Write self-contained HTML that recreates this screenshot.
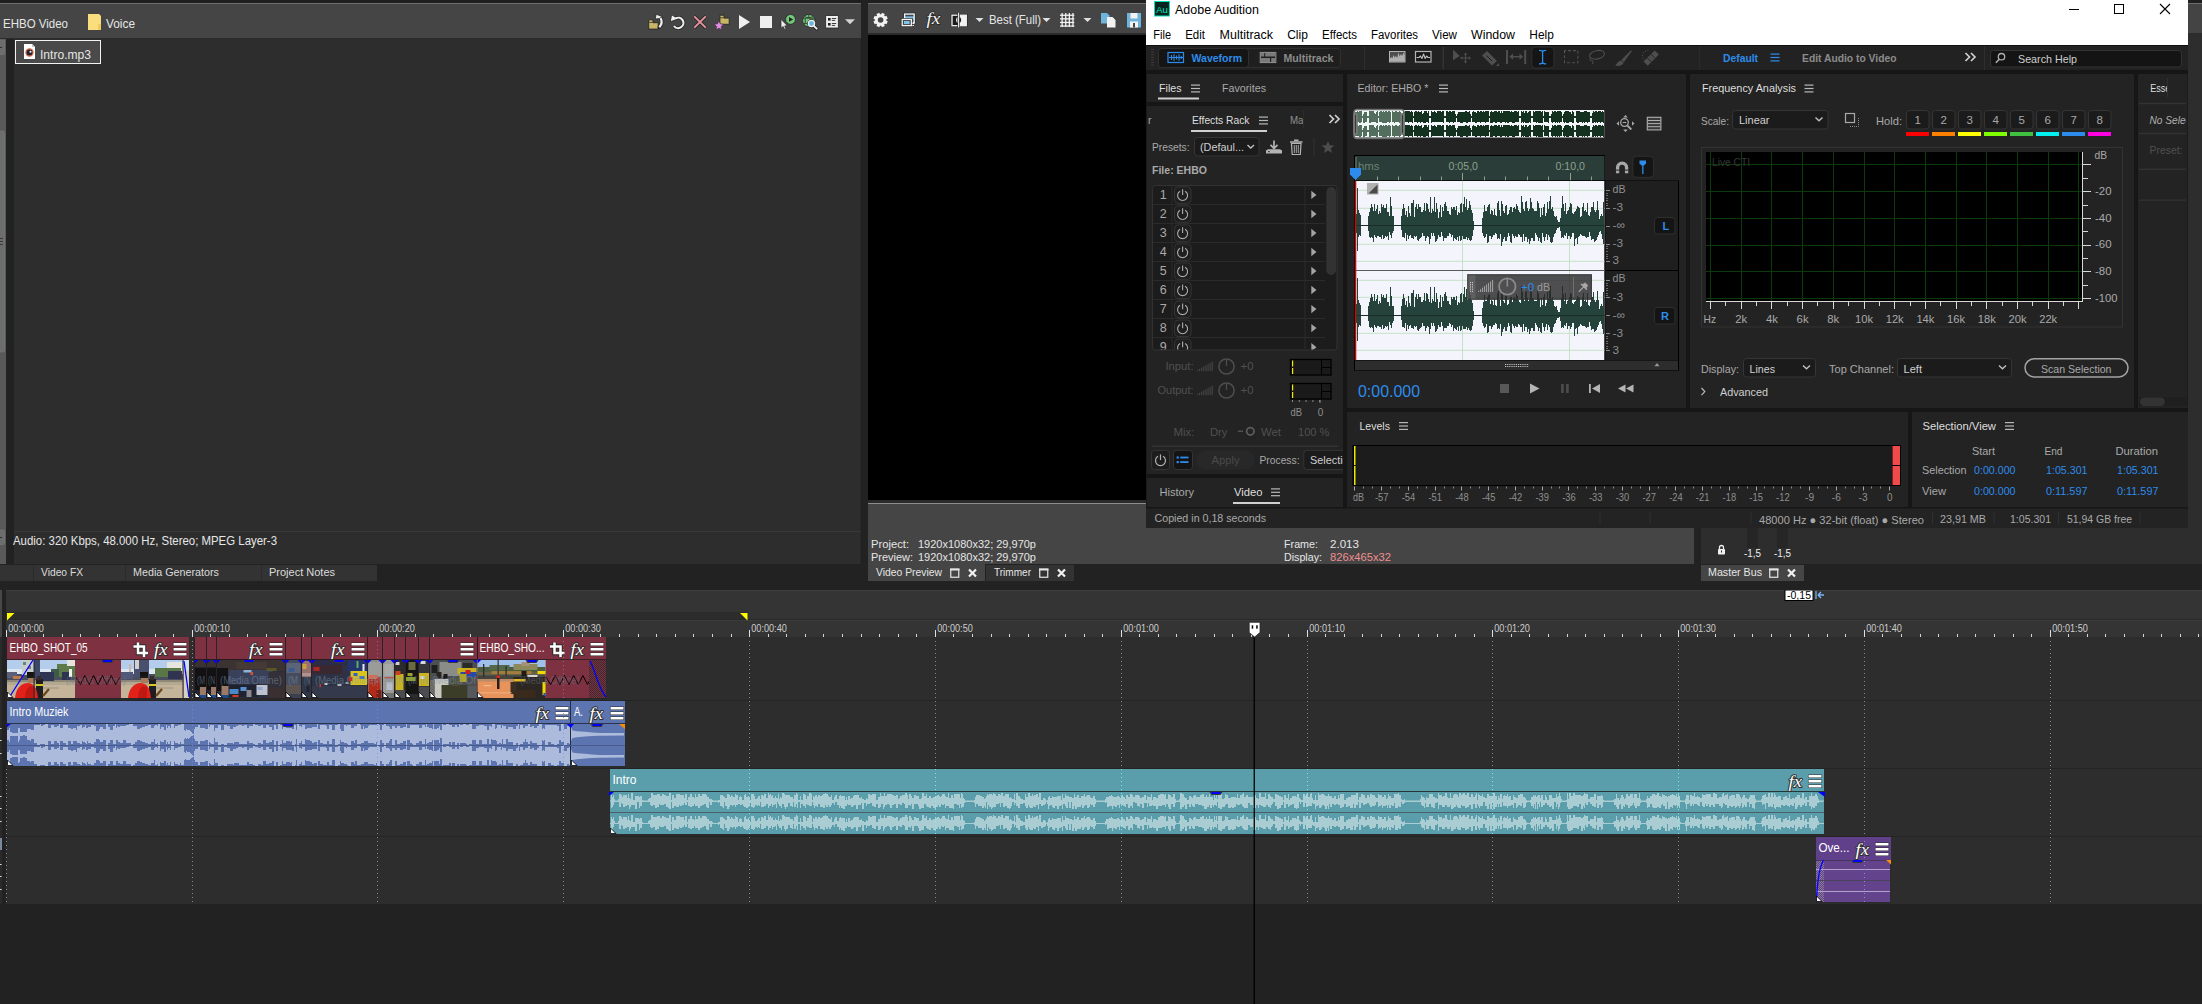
<!DOCTYPE html>
<html lang="en"><head><meta charset="utf-8">
<title>VEGAS Pro and Adobe Audition</title>
<style>html,body{margin:0;padding:0;background:#222;}body{width:2202px;height:1004px;position:relative;overflow:hidden;font-family:"Liberation Sans", sans-serif;}.panel{position:absolute;overflow:hidden;}.panel svg{display:block;position:absolute;left:0;top:0;}svg text{font-family:"Liberation Sans", sans-serif;white-space:pre;}</style></head><body>
<div class="panel" id="project-media" style="left:0px;top:0px;width:862px;height:564px;background:#222222;"><svg width="862" height="564" viewBox="0 0 862 564"><rect x="0" y="0" width="862" height="3" fill="#1f1f1f"/>
<rect x="0" y="3" width="861" height="1" fill="#6e6e6e"/>
<rect x="0" y="4" width="861" height="34" fill="#454545"/>
<rect x="0" y="38" width="861" height="1" fill="#2a2a2a"/>
<rect x="14" y="39" width="847" height="526" fill="#2d2d2d"/>
<rect x="860" y="39" width="1" height="526" fill="#272727"/>
<rect x="0" y="39" width="6" height="526" fill="#595959"/>
<rect x="-2" y="40" width="6.5" height="14.5" fill="#6c6e6e" stroke="#7a7a7a" stroke-width="0.6" rx="1.2"/>
<rect x="-2" y="131" width="6.5" height="221" fill="#6c6e6e" stroke="#7c7c7c" stroke-width="0.6" rx="1.5"/>
<rect x="-2" y="530" width="6.5" height="14.5" fill="#6c6e6e" stroke="#7a7a7a" stroke-width="0.6" rx="1.2"/>
<rect x="0" y="238" width="3" height="1" fill="#3a3a3a"/>
<rect x="0" y="241" width="3" height="1" fill="#3a3a3a"/>
<rect x="0" y="244" width="3" height="1" fill="#3a3a3a"/>
<rect x="0" y="47" width="2" height="1" fill="#2d2d2d"/>
<rect x="0" y="537" width="2" height="1" fill="#2d2d2d"/>
<rect x="6" y="39" width="8" height="526" fill="#222222"/>
<text x="3" y="28" font-size="13" fill="#e6e6e6" textLength="65" lengthAdjust="spacingAndGlyphs">EHBO Video</text>
<path d="M88 14h11l2 2v14h-13z" fill="#fadd7c"/>
<path d="M98 24h3v6h-3z" fill="#efcc5a"/>
<text x="106" y="28" font-size="13" fill="#e6e6e6" textLength="29" lengthAdjust="spacingAndGlyphs">Voice</text>
<rect x="15.5" y="40.5" width="85" height="23" fill="#4a4a4a" stroke="#f2f2f2" stroke-width="1"/>
<path d="M24 44h8l3 3v12h-11z" fill="#ffffff"/>
<path d="M32 44l3 3h-3z" fill="#c8c8c8"/>
<circle cx="29.5" cy="52.5" r="3.4" fill="#2a2030"/>
<circle cx="29.5" cy="52.5" r="3.6" fill="none" stroke="#d06a40" stroke-width="1.2"/>
<circle cx="30.5" cy="51.7" r="1" fill="#ffffff"/>
<text x="40" y="58.6" font-size="13" fill="#e6e6e6" textLength="51" lengthAdjust="spacingAndGlyphs">Intro.mp3</text>
<rect x="14" y="531" width="847" height="1" fill="#383838"/>
<text x="13" y="545" font-size="13" fill="#e6e6e6" textLength="264" lengthAdjust="spacingAndGlyphs">Audio: 320 Kbps, 48.000 Hz, Stereo; MPEG Layer-3</text>
<path d="M648.7 19.8h4.3v2.9h5.2v6.4h-9.5z" fill="#c9b566" stroke="#262626" stroke-width="0.9" stroke-linejoin="round"/>
<path d="M648.7 22.4h4.3" fill="none" stroke="#262626" stroke-width="0.7"/>
<path d="M659.3 27.2c2.8-3.2 3-6.2 1.2-9.2" fill="none" stroke="#262626" stroke-width="3.6" stroke-linecap="round"/>
<path d="M655.2 19l1-4.8 6.4 2.6-3.6 1.8z" fill="#f0f0f0" stroke="#262626" stroke-width="0.8" stroke-linejoin="round"/>
<path d="M659.3 27.2c2.8-3.2 3-6.2 1.2-9.2" fill="none" stroke="#f0f0f0" stroke-width="2.2"/>
<path d="M675.6 18.4a5.2 5.2 0 1 1 -1.6 7.6" fill="none" stroke="#262626" stroke-width="3.6"/>
<path d="M670.3 21.8l1.3-7 6.6 4z" fill="#f0f0f0" stroke="#262626" stroke-width="0.8" stroke-linejoin="round"/>
<path d="M675.6 18.4a5.2 5.2 0 1 1 -1.6 7.6" fill="none" stroke="#f0f0f0" stroke-width="2.1"/>
<path d="M694.3 16.3l11.4 11.4M705.7 16.3l-11.4 11.4" fill="none" stroke="#262626" stroke-width="3.4"/>
<path d="M694.3 16.3l11.4 11.4M705.7 16.3l-11.4 11.4" fill="none" stroke="#e8949f" stroke-width="1.9"/>
<path d="M719.9 15.2h4.2v2.9h5.1v6.2h-9.3z" fill="#c9b566" stroke="#262626" stroke-width="0.9" stroke-linejoin="round"/>
<path d="M719.9 17.8h4.2" fill="none" stroke="#262626" stroke-width="0.7"/>
<polygon points="718.9,20.9 720.31,23.86 723.56,24.29 721.18,26.54 721.78,29.76 718.9,28.2 716.02,29.76 716.62,26.54 714.24,24.29 717.49,23.86" fill="#df8ee2" stroke="#3a2a3a" stroke-width="0.6"/>
<polygon points="739,15 750,22 739,29" fill="#f0f0f0"/>
<rect x="760" y="16" width="12" height="12" fill="#f0f0f0"/>
<circle cx="790.5" cy="19.4" r="4.9" fill="#72c97a" stroke="#262626" stroke-width="0.8"/>
<polygon points="789,17.1 793.2,19.4 789,21.7" fill="#232323"/>
<polygon points="781,19.3 781,28.2 783.2,26.4 784.6,29.4 786,28.8 784.7,25.9 787.3,25.7" fill="#f0f0f0" stroke="#262626" stroke-width="0.7"/>
<circle cx="808.8" cy="20.6" r="6.2" fill="#72c97a" stroke="#262626" stroke-width="0.8"/>
<path d="M803 18.2h11.6M803.4 23.6h5M805.2 18.4v5M808.8 15v2.6M804.6 16.6c2.8 1.4 5.6 1.4 8.4 0" fill="none" stroke="#2f3a30" stroke-width="0.9"/>
<path d="M813.6 25.8l3.2 3" fill="none" stroke="#262626" stroke-width="3.2" stroke-linecap="round"/>
<circle cx="811.5" cy="23.5" r="3.1" fill="#6ab8e2" stroke="#262626" stroke-width="2.6"/>
<circle cx="811.5" cy="23.5" r="3.1" fill="#6ab8e2" stroke="#f0f0f0" stroke-width="1.3"/>
<path d="M813.8 25.9l2.9 2.8" fill="none" stroke="#f0f0f0" stroke-width="1.8" stroke-linecap="round"/>
<rect x="825.7" y="15.6" width="12.6" height="12.4" fill="#f0f0f0" stroke="#262626" stroke-width="0.8"/>
<rect x="828" y="18" width="2.6" height="2.6" fill="#1e1e1e"/>
<rect x="831.8" y="18.1" width="4.4" height="0.9" fill="#2a2a2a"/>
<rect x="831.8" y="19.9" width="3.4" height="0.9" fill="#2a2a2a"/>
<rect x="828" y="23" width="2.6" height="2.6" fill="#1e1e1e"/>
<rect x="831.8" y="23.1" width="4.4" height="0.9" fill="#2a2a2a"/>
<rect x="831.8" y="24.9" width="3.4" height="0.9" fill="#2a2a2a"/>
<polygon points="845,19.2 855,19.2 850,24.2" fill="#d4d4d4"/></svg></div>
<div class="panel" id="video-preview" style="left:868px;top:0px;width:826px;height:564px;background:#222222;"><svg width="826" height="564" viewBox="868 0 826 564"><rect x="868" y="0" width="826" height="3" fill="#1f1f1f"/>
<rect x="868" y="3" width="826" height="1" fill="#6e6e6e"/>
<rect x="868" y="4" width="826" height="29" fill="#454545"/>
<rect x="868" y="33" width="826" height="2" fill="#2a2a2a"/>
<rect x="868" y="35" width="826" height="465" fill="#000000"/>
<rect x="868" y="500" width="826" height="3" fill="#2a2a2a"/>
<rect x="868" y="503" width="826" height="1" fill="#8c8c8c"/>
<rect x="868" y="504" width="826" height="61" fill="#454545"/>
<line x1="884.85" y1="21.76" x2="887.16" y2="22.72" stroke="#f2f2f2" stroke-width="3.2"/>
<line x1="882.36" y1="24.25" x2="883.32" y2="26.56" stroke="#f2f2f2" stroke-width="3.2"/>
<line x1="878.84" y1="24.25" x2="877.88" y2="26.56" stroke="#f2f2f2" stroke-width="3.2"/>
<line x1="876.35" y1="21.76" x2="874.04" y2="22.72" stroke="#f2f2f2" stroke-width="3.2"/>
<line x1="876.35" y1="18.24" x2="874.04" y2="17.28" stroke="#f2f2f2" stroke-width="3.2"/>
<line x1="878.84" y1="15.75" x2="877.88" y2="13.44" stroke="#f2f2f2" stroke-width="3.2"/>
<line x1="882.36" y1="15.75" x2="883.32" y2="13.44" stroke="#f2f2f2" stroke-width="3.2"/>
<line x1="884.85" y1="18.24" x2="887.16" y2="17.28" stroke="#f2f2f2" stroke-width="3.2"/>
<circle cx="880.6" cy="20" r="4.3" fill="none" stroke="#f2f2f2" stroke-width="3"/>
<rect x="904.6" y="14" width="9.6" height="8.4" fill="#7cc4ea" stroke="#262626" stroke-width="2.6"/>
<rect x="904.6" y="14" width="9.6" height="8.4" fill="#7cc4ea" stroke="#f2f2f2" stroke-width="1.3"/>
<rect x="905.4" y="14.8" width="8" height="1.6" fill="#454545"/>
<rect x="905.4" y="19.6" width="8" height="2" fill="#454545"/>
<path d="M900.4 27.2l1.2-2h10.6l1.2 2z" fill="#f2f2f2" stroke="#262626" stroke-width="0.8" stroke-linejoin="round"/>
<rect x="902.2" y="19.4" width="9.2" height="6.2" fill="#454545" stroke="#262626" stroke-width="2.6"/>
<rect x="902.2" y="19.4" width="9.2" height="6.2" fill="#454545" stroke="#f2f2f2" stroke-width="1.3"/>
<rect x="904" y="21" width="5.6" height="3" fill="#7cc4ea"/>
<rect x="912.4" y="23" width="2.2" height="1" fill="#f2f2f2"/>
<rect x="912.4" y="25" width="1.6" height="1" fill="#f2f2f2"/>
<text x="926.4" y="24.3" font-size="16.5" font-style="italic" fill="#f4f4f4" textLength="14" lengthAdjust="spacingAndGlyphs" stroke="#2a2a2a" stroke-width="1.6" stroke-linejoin="round" paint-order="stroke" style='font-family:"Liberation Serif", serif'>fx</text>
<rect x="952" y="15.2" width="14.3" height="10.5" fill="#1c1c1c" stroke="#262626" stroke-width="2.6"/>
<rect x="952" y="15.2" width="14.3" height="10.5" fill="#1c1c1c" stroke="#f2f2f2" stroke-width="1.3"/>
<rect x="958.6" y="15.2" width="7.7" height="10.5" fill="#f2f2f2"/>
<path d="M958.6 16.6a3.5 3.5 0 0 0 0 6.8z" fill="#f2f2f2"/>
<path d="M958.6 16.6a3.5 3.5 0 0 1 0 6.8z" fill="#1c1c1c"/>
<path d="M958.6 12.6v15" fill="none" stroke="#262626" stroke-width="2.4"/>
<path d="M958.6 12.8v14.6" fill="none" stroke="#f2f2f2" stroke-width="1.1"/>
<polygon points="975.5,18 983.5,18 979.5,22" fill="#e0e0e0"/>
<text x="989" y="24.2" font-size="12.5" fill="#e6e6e6" textLength="52" lengthAdjust="spacingAndGlyphs">Best (Full)</text>
<polygon points="1042.5,18 1050.5,18 1046.5,22" fill="#e0e0e0"/>
<rect x="1061.5" y="13" width="1.3" height="14" fill="#f2f2f2"/>
<rect x="1060" y="14.6" width="14.3" height="1.3" fill="#f2f2f2"/>
<rect x="1065.1" y="13" width="1.3" height="14" fill="#f2f2f2"/>
<rect x="1060" y="18.2" width="14.3" height="1.3" fill="#f2f2f2"/>
<rect x="1068.7" y="13" width="1.3" height="14" fill="#f2f2f2"/>
<rect x="1060" y="21.8" width="14.3" height="1.3" fill="#f2f2f2"/>
<rect x="1072.3" y="13" width="1.3" height="14" fill="#f2f2f2"/>
<rect x="1060" y="25.4" width="14.3" height="1.3" fill="#f2f2f2"/>
<polygon points="1083.5,18 1091.5,18 1087.5,22" fill="#e0e0e0"/>
<path d="M1101 13h6l2.5 2.5v8h-8.5z" fill="#6fb4dc"/>
<path d="M1107 17h5.5l3 3v7.5h-8.5z" fill="#f2f2f2"/>
<path d="M1127 13h14v14.5h-14z" fill="#6fb4dc"/>
<rect x="1130.5" y="13" width="7" height="5.5" fill="#f2f2f2"/>
<rect x="1130" y="21.5" width="8" height="6" fill="#f2f2f2"/>
<rect x="1133" y="23" width="2" height="4.5" fill="#454545"/>
<text x="871" y="548" font-size="11" fill="#e6e6e6" textLength="38" lengthAdjust="spacingAndGlyphs">Project:</text>
<text x="918" y="548" font-size="11" fill="#e6e6e6" textLength="118" lengthAdjust="spacingAndGlyphs">1920x1080x32; 29,970p</text>
<text x="871" y="561" font-size="11" fill="#e6e6e6" textLength="42" lengthAdjust="spacingAndGlyphs">Preview:</text>
<text x="918" y="561" font-size="11" fill="#e6e6e6" textLength="118" lengthAdjust="spacingAndGlyphs">1920x1080x32; 29,970p</text>
<text x="1284" y="548" font-size="11" fill="#e6e6e6" textLength="34" lengthAdjust="spacingAndGlyphs">Frame:</text>
<text x="1330" y="548" font-size="11" fill="#e6e6e6" textLength="29" lengthAdjust="spacingAndGlyphs">2.013</text>
<text x="1284" y="561" font-size="11" fill="#e6e6e6" textLength="38" lengthAdjust="spacingAndGlyphs">Display:</text>
<text x="1330" y="561" font-size="11" fill="#f08f8f" textLength="61" lengthAdjust="spacingAndGlyphs">826x465x32</text></svg></div>
<div class="panel" id="master-bus" style="left:1701px;top:0px;width:501px;height:564px;background:#2d2d2d;"><svg width="501" height="564" viewBox="1701 0 501 564"><rect x="1701" y="0" width="501" height="3" fill="#1f1f1f"/>
<rect x="1701" y="3" width="501" height="1" fill="#6e6e6e"/>
<rect x="1701" y="4" width="501" height="29" fill="#444444"/>
<rect x="1701" y="33" width="501" height="495" fill="#2d2d2d"/>
<rect x="1747" y="528" width="11" height="20" fill="#262626"/>
<rect x="1777" y="528" width="11" height="20" fill="#262626"/>
<text x="1744" y="557" font-size="10" fill="#f0f0f0" textLength="17" lengthAdjust="spacingAndGlyphs">-1,5</text>
<text x="1774" y="557" font-size="10" fill="#f0f0f0" textLength="17" lengthAdjust="spacingAndGlyphs">-1,5</text>
<rect x="1718" y="549" width="7" height="5.5" fill="#f0f0f0" rx="0.8"/>
<path d="M1719.5 549v-1.5a2 2 0 0 1 4 0v1.5" fill="none" stroke="#f0f0f0" stroke-width="1.3"/>
<rect x="1721" y="550.5" width="1" height="2" fill="#2d2d2d"/></svg></div>
<div class="panel" id="dock-tabs" style="left:0px;top:564px;width:2202px;height:26px;background:#222222;"><svg width="2202" height="26" viewBox="0 564 2202 26"><rect x="0" y="565" width="377" height="16" fill="#333333"/>
<rect x="33" y="565" width="1" height="16" fill="#2a2a2a"/>
<rect x="125" y="565" width="1" height="16" fill="#2a2a2a"/>
<rect x="261" y="565" width="1" height="16" fill="#2a2a2a"/>
<text x="41" y="576.4" font-size="11" fill="#dcdcdc" textLength="42" lengthAdjust="spacingAndGlyphs">Video FX</text>
<text x="133" y="576.4" font-size="11" fill="#dcdcdc" textLength="86" lengthAdjust="spacingAndGlyphs">Media Generators</text>
<text x="269" y="576.4" font-size="11" fill="#dcdcdc" textLength="66" lengthAdjust="spacingAndGlyphs">Project Notes</text>
<rect x="868" y="564" width="117" height="17" fill="#454545"/>
<text x="876" y="576.4" font-size="11" fill="#e6e6e6" textLength="66" lengthAdjust="spacingAndGlyphs">Video Preview</text>
<rect x="950.75" y="569.25" width="8" height="8" fill="none" stroke="#e6e6e6" stroke-width="1.2"/>
<rect x="950" y="568.5" width="9.5" height="2" fill="#e6e6e6"/>
<path d="M969 569.5l7 7M976 569.5l-7 7" fill="none" stroke="#f0f0f0" stroke-width="2.2"/>
<rect x="986" y="565" width="88" height="16" fill="#333333"/>
<text x="994" y="576.4" font-size="11" fill="#e6e6e6" textLength="37" lengthAdjust="spacingAndGlyphs">Trimmer</text>
<rect x="1039.75" y="569.25" width="8" height="8" fill="none" stroke="#e6e6e6" stroke-width="1.2"/>
<rect x="1039" y="568.5" width="9.5" height="2" fill="#e6e6e6"/>
<path d="M1058 569.5l7 7M1065 569.5l-7 7" fill="none" stroke="#f0f0f0" stroke-width="2.2"/>
<rect x="1701" y="565" width="103" height="16" fill="#454545"/>
<text x="1708" y="576.4" font-size="11" fill="#e6e6e6" textLength="54" lengthAdjust="spacingAndGlyphs">Master Bus</text>
<rect x="1769.75" y="569.25" width="8" height="8" fill="none" stroke="#e6e6e6" stroke-width="1.2"/>
<rect x="1769" y="568.5" width="9.5" height="2" fill="#e6e6e6"/>
<path d="M1788 569.5l7 7M1795 569.5l-7 7" fill="none" stroke="#f0f0f0" stroke-width="2.2"/></svg></div>
<div class="panel" id="timeline" style="left:0px;top:590px;width:2202px;height:414px;background:#222222;"><svg width="2202" height="414" viewBox="0 590 2202 414"><rect x="0" y="590" width="2202" height="47" fill="#343434"/>
<rect x="0" y="590" width="2" height="47" fill="#484848"/>
<rect x="2" y="590" width="4" height="47" fill="#222222"/>
<rect x="6" y="590" width="2196" height="1" fill="#3e3e3e"/>
<rect x="6" y="612" width="741.5" height="8" fill="#2c2c2c"/>
<rect x="6" y="619" width="2196" height="1" fill="#292929"/>
<rect x="6" y="620" width="2196" height="1" fill="#3c3c3c"/>
<polygon points="7,613 14.5,613 7,620.5" fill="#ffff00"/>
<polygon points="747.5,613 740,613 747.5,620.5" fill="#ffff00"/>
<rect x="6" y="630" width="1" height="7" fill="#e0e0e0"/>
<text x="8.3" y="632.3" font-size="10.4" fill="#cdcdcd" textLength="35.5" lengthAdjust="spacingAndGlyphs">00:00:00</text>
<rect x="24" y="634" width="1" height="3" fill="#d4d4d4"/>
<rect x="43" y="634" width="1" height="3" fill="#d4d4d4"/>
<rect x="62" y="634" width="1" height="3" fill="#d4d4d4"/>
<rect x="80" y="634" width="1" height="3" fill="#d4d4d4"/>
<rect x="99" y="634" width="1" height="3" fill="#d4d4d4"/>
<rect x="117" y="634" width="1" height="3" fill="#d4d4d4"/>
<rect x="136" y="634" width="1" height="3" fill="#d4d4d4"/>
<rect x="155" y="634" width="1" height="3" fill="#d4d4d4"/>
<rect x="173" y="634" width="1" height="3" fill="#d4d4d4"/>
<rect x="192" y="630" width="1" height="7" fill="#e0e0e0"/>
<text x="194.3" y="632.3" font-size="10.4" fill="#cdcdcd" textLength="35.5" lengthAdjust="spacingAndGlyphs">00:00:10</text>
<rect x="210" y="634" width="1" height="3" fill="#d4d4d4"/>
<rect x="229" y="634" width="1" height="3" fill="#d4d4d4"/>
<rect x="247" y="634" width="1" height="3" fill="#d4d4d4"/>
<rect x="266" y="634" width="1" height="3" fill="#d4d4d4"/>
<rect x="285" y="634" width="1" height="3" fill="#d4d4d4"/>
<rect x="303" y="634" width="1" height="3" fill="#d4d4d4"/>
<rect x="322" y="634" width="1" height="3" fill="#d4d4d4"/>
<rect x="340" y="634" width="1" height="3" fill="#d4d4d4"/>
<rect x="359" y="634" width="1" height="3" fill="#d4d4d4"/>
<rect x="377" y="630" width="1" height="7" fill="#e0e0e0"/>
<text x="379.3" y="632.3" font-size="10.4" fill="#cdcdcd" textLength="35.5" lengthAdjust="spacingAndGlyphs">00:00:20</text>
<rect x="396" y="634" width="1" height="3" fill="#d4d4d4"/>
<rect x="415" y="634" width="1" height="3" fill="#d4d4d4"/>
<rect x="433" y="634" width="1" height="3" fill="#d4d4d4"/>
<rect x="452" y="634" width="1" height="3" fill="#d4d4d4"/>
<rect x="470" y="634" width="1" height="3" fill="#d4d4d4"/>
<rect x="489" y="634" width="1" height="3" fill="#d4d4d4"/>
<rect x="508" y="634" width="1" height="3" fill="#d4d4d4"/>
<rect x="526" y="634" width="1" height="3" fill="#d4d4d4"/>
<rect x="545" y="634" width="1" height="3" fill="#d4d4d4"/>
<rect x="563" y="630" width="1" height="7" fill="#e0e0e0"/>
<text x="565.3" y="632.3" font-size="10.4" fill="#cdcdcd" textLength="35.5" lengthAdjust="spacingAndGlyphs">00:00:30</text>
<rect x="582" y="634" width="1" height="3" fill="#d4d4d4"/>
<rect x="600" y="634" width="1" height="3" fill="#d4d4d4"/>
<rect x="619" y="634" width="1" height="3" fill="#d4d4d4"/>
<rect x="638" y="634" width="1" height="3" fill="#d4d4d4"/>
<rect x="656" y="634" width="1" height="3" fill="#d4d4d4"/>
<rect x="675" y="634" width="1" height="3" fill="#d4d4d4"/>
<rect x="693" y="634" width="1" height="3" fill="#d4d4d4"/>
<rect x="712" y="634" width="1" height="3" fill="#d4d4d4"/>
<rect x="731" y="634" width="1" height="3" fill="#d4d4d4"/>
<rect x="749" y="630" width="1" height="7" fill="#e0e0e0"/>
<text x="751.3" y="632.3" font-size="10.4" fill="#cdcdcd" textLength="35.5" lengthAdjust="spacingAndGlyphs">00:00:40</text>
<rect x="768" y="634" width="1" height="3" fill="#d4d4d4"/>
<rect x="786" y="634" width="1" height="3" fill="#d4d4d4"/>
<rect x="805" y="634" width="1" height="3" fill="#d4d4d4"/>
<rect x="823" y="634" width="1" height="3" fill="#d4d4d4"/>
<rect x="842" y="634" width="1" height="3" fill="#d4d4d4"/>
<rect x="861" y="634" width="1" height="3" fill="#d4d4d4"/>
<rect x="879" y="634" width="1" height="3" fill="#d4d4d4"/>
<rect x="898" y="634" width="1" height="3" fill="#d4d4d4"/>
<rect x="916" y="634" width="1" height="3" fill="#d4d4d4"/>
<rect x="935" y="630" width="1" height="7" fill="#e0e0e0"/>
<text x="937.3" y="632.3" font-size="10.4" fill="#cdcdcd" textLength="35.5" lengthAdjust="spacingAndGlyphs">00:00:50</text>
<rect x="953" y="634" width="1" height="3" fill="#d4d4d4"/>
<rect x="972" y="634" width="1" height="3" fill="#d4d4d4"/>
<rect x="991" y="634" width="1" height="3" fill="#d4d4d4"/>
<rect x="1009" y="634" width="1" height="3" fill="#d4d4d4"/>
<rect x="1028" y="634" width="1" height="3" fill="#d4d4d4"/>
<rect x="1046" y="634" width="1" height="3" fill="#d4d4d4"/>
<rect x="1065" y="634" width="1" height="3" fill="#d4d4d4"/>
<rect x="1084" y="634" width="1" height="3" fill="#d4d4d4"/>
<rect x="1102" y="634" width="1" height="3" fill="#d4d4d4"/>
<rect x="1121" y="630" width="1" height="7" fill="#e0e0e0"/>
<text x="1123.3" y="632.3" font-size="10.4" fill="#cdcdcd" textLength="35.5" lengthAdjust="spacingAndGlyphs">00:01:00</text>
<rect x="1139" y="634" width="1" height="3" fill="#d4d4d4"/>
<rect x="1158" y="634" width="1" height="3" fill="#d4d4d4"/>
<rect x="1176" y="634" width="1" height="3" fill="#d4d4d4"/>
<rect x="1195" y="634" width="1" height="3" fill="#d4d4d4"/>
<rect x="1214" y="634" width="1" height="3" fill="#d4d4d4"/>
<rect x="1232" y="634" width="1" height="3" fill="#d4d4d4"/>
<rect x="1251" y="634" width="1" height="3" fill="#d4d4d4"/>
<rect x="1269" y="634" width="1" height="3" fill="#d4d4d4"/>
<rect x="1288" y="634" width="1" height="3" fill="#d4d4d4"/>
<rect x="1307" y="630" width="1" height="7" fill="#e0e0e0"/>
<text x="1309.3" y="632.3" font-size="10.4" fill="#cdcdcd" textLength="35.5" lengthAdjust="spacingAndGlyphs">00:01:10</text>
<rect x="1325" y="634" width="1" height="3" fill="#d4d4d4"/>
<rect x="1344" y="634" width="1" height="3" fill="#d4d4d4"/>
<rect x="1362" y="634" width="1" height="3" fill="#d4d4d4"/>
<rect x="1381" y="634" width="1" height="3" fill="#d4d4d4"/>
<rect x="1399" y="634" width="1" height="3" fill="#d4d4d4"/>
<rect x="1418" y="634" width="1" height="3" fill="#d4d4d4"/>
<rect x="1437" y="634" width="1" height="3" fill="#d4d4d4"/>
<rect x="1455" y="634" width="1" height="3" fill="#d4d4d4"/>
<rect x="1474" y="634" width="1" height="3" fill="#d4d4d4"/>
<rect x="1492" y="630" width="1" height="7" fill="#e0e0e0"/>
<text x="1494.3" y="632.3" font-size="10.4" fill="#cdcdcd" textLength="35.5" lengthAdjust="spacingAndGlyphs">00:01:20</text>
<rect x="1511" y="634" width="1" height="3" fill="#d4d4d4"/>
<rect x="1529" y="634" width="1" height="3" fill="#d4d4d4"/>
<rect x="1548" y="634" width="1" height="3" fill="#d4d4d4"/>
<rect x="1567" y="634" width="1" height="3" fill="#d4d4d4"/>
<rect x="1585" y="634" width="1" height="3" fill="#d4d4d4"/>
<rect x="1604" y="634" width="1" height="3" fill="#d4d4d4"/>
<rect x="1622" y="634" width="1" height="3" fill="#d4d4d4"/>
<rect x="1641" y="634" width="1" height="3" fill="#d4d4d4"/>
<rect x="1660" y="634" width="1" height="3" fill="#d4d4d4"/>
<rect x="1678" y="630" width="1" height="7" fill="#e0e0e0"/>
<text x="1680.3" y="632.3" font-size="10.4" fill="#cdcdcd" textLength="35.5" lengthAdjust="spacingAndGlyphs">00:01:30</text>
<rect x="1697" y="634" width="1" height="3" fill="#d4d4d4"/>
<rect x="1715" y="634" width="1" height="3" fill="#d4d4d4"/>
<rect x="1734" y="634" width="1" height="3" fill="#d4d4d4"/>
<rect x="1752" y="634" width="1" height="3" fill="#d4d4d4"/>
<rect x="1771" y="634" width="1" height="3" fill="#d4d4d4"/>
<rect x="1790" y="634" width="1" height="3" fill="#d4d4d4"/>
<rect x="1808" y="634" width="1" height="3" fill="#d4d4d4"/>
<rect x="1827" y="634" width="1" height="3" fill="#d4d4d4"/>
<rect x="1845" y="634" width="1" height="3" fill="#d4d4d4"/>
<rect x="1864" y="630" width="1" height="7" fill="#e0e0e0"/>
<text x="1866.3" y="632.3" font-size="10.4" fill="#cdcdcd" textLength="35.5" lengthAdjust="spacingAndGlyphs">00:01:40</text>
<rect x="1882" y="634" width="1" height="3" fill="#d4d4d4"/>
<rect x="1901" y="634" width="1" height="3" fill="#d4d4d4"/>
<rect x="1920" y="634" width="1" height="3" fill="#d4d4d4"/>
<rect x="1938" y="634" width="1" height="3" fill="#d4d4d4"/>
<rect x="1957" y="634" width="1" height="3" fill="#d4d4d4"/>
<rect x="1975" y="634" width="1" height="3" fill="#d4d4d4"/>
<rect x="1994" y="634" width="1" height="3" fill="#d4d4d4"/>
<rect x="2013" y="634" width="1" height="3" fill="#d4d4d4"/>
<rect x="2031" y="634" width="1" height="3" fill="#d4d4d4"/>
<rect x="2050" y="630" width="1" height="7" fill="#e0e0e0"/>
<text x="2052.3" y="632.3" font-size="10.4" fill="#cdcdcd" textLength="35.5" lengthAdjust="spacingAndGlyphs">00:01:50</text>
<rect x="2068" y="634" width="1" height="3" fill="#d4d4d4"/>
<rect x="2087" y="634" width="1" height="3" fill="#d4d4d4"/>
<rect x="2105" y="634" width="1" height="3" fill="#d4d4d4"/>
<rect x="2124" y="634" width="1" height="3" fill="#d4d4d4"/>
<rect x="2143" y="634" width="1" height="3" fill="#d4d4d4"/>
<rect x="2161" y="634" width="1" height="3" fill="#d4d4d4"/>
<rect x="2180" y="634" width="1" height="3" fill="#d4d4d4"/>
<rect x="2198" y="634" width="1" height="3" fill="#d4d4d4"/>
<rect x="1785" y="590" width="28" height="10.5" fill="#ffffff" stroke="#000000" stroke-width="1"/>
<text x="1787" y="599" font-size="10" fill="#000000" textLength="24" lengthAdjust="spacingAndGlyphs">-0,15</text>
<path d="M1816 591v8" fill="none" stroke="#7db4f5" stroke-width="1.2"/>
<path d="M1818 595h6M1818 595l3-3M1818 595l3 3" fill="none" stroke="#7db4f5" stroke-width="1.4"/>
<rect x="0" y="637" width="2202" height="267" fill="#2d2d2d"/>
<rect x="0" y="904" width="2202" height="100" fill="#222222"/>
<rect x="0" y="637" width="2" height="267" fill="#2a2a2a"/>
<rect x="2" y="637" width="4" height="267" fill="#222222"/>
<rect x="6" y="700" width="2196" height="1" fill="#242424"/>
<rect x="6" y="768" width="2196" height="1" fill="#242424"/>
<rect x="6" y="836" width="2196" height="1" fill="#242424"/>
<rect x="0" y="728" width="1.6" height="1" fill="#d8d8d8"/>
<rect x="0" y="740" width="1.6" height="1" fill="#d8d8d8"/>
<rect x="0" y="753" width="1.6" height="1" fill="#d8d8d8"/>
<rect x="0" y="796" width="1.6" height="1" fill="#d8d8d8"/>
<rect x="0" y="808" width="1.6" height="1" fill="#d8d8d8"/>
<rect x="0" y="821" width="1.6" height="1" fill="#d8d8d8"/>
<rect x="0" y="864" width="1.6" height="1" fill="#d8d8d8"/>
<rect x="0" y="876" width="1.6" height="1" fill="#d8d8d8"/>
<rect x="0" y="889" width="1.6" height="1" fill="#d8d8d8"/>
<rect x="0" y="838" width="2" height="12" fill="#7a8a9a"/>
<line x1="6.5" y1="641" x2="6.5" y2="904" stroke="#b8b8bc" stroke-width="1" stroke-dasharray="1 3" opacity="0.66"/>
<line x1="192.5" y1="641" x2="192.5" y2="904" stroke="#b8b8bc" stroke-width="1" stroke-dasharray="1 3" opacity="0.66"/>
<line x1="377.5" y1="641" x2="377.5" y2="904" stroke="#b8b8bc" stroke-width="1" stroke-dasharray="1 3" opacity="0.66"/>
<line x1="563.5" y1="641" x2="563.5" y2="904" stroke="#b8b8bc" stroke-width="1" stroke-dasharray="1 3" opacity="0.66"/>
<line x1="749.5" y1="641" x2="749.5" y2="904" stroke="#b8b8bc" stroke-width="1" stroke-dasharray="1 3" opacity="0.66"/>
<line x1="935.5" y1="641" x2="935.5" y2="904" stroke="#b8b8bc" stroke-width="1" stroke-dasharray="1 3" opacity="0.66"/>
<line x1="1121.5" y1="641" x2="1121.5" y2="904" stroke="#b8b8bc" stroke-width="1" stroke-dasharray="1 3" opacity="0.66"/>
<line x1="1307.5" y1="641" x2="1307.5" y2="904" stroke="#b8b8bc" stroke-width="1" stroke-dasharray="1 3" opacity="0.66"/>
<line x1="1492.5" y1="641" x2="1492.5" y2="904" stroke="#b8b8bc" stroke-width="1" stroke-dasharray="1 3" opacity="0.66"/>
<line x1="1678.5" y1="641" x2="1678.5" y2="904" stroke="#b8b8bc" stroke-width="1" stroke-dasharray="1 3" opacity="0.66"/>
<line x1="1864.5" y1="641" x2="1864.5" y2="904" stroke="#b8b8bc" stroke-width="1" stroke-dasharray="1 3" opacity="0.66"/>
<line x1="2050.5" y1="641" x2="2050.5" y2="904" stroke="#b8b8bc" stroke-width="1" stroke-dasharray="1 3" opacity="0.66"/>
<rect x="7" y="637" width="182" height="62" fill="#7e3241"/>
<rect x="7" y="659" width="182" height="1" fill="#3a2026"/>
<rect x="7" y="660" width="68" height="38" fill="#c4b59a"/>
<rect x="7" y="660" width="68" height="16" fill="#b4cdec"/>
<rect x="7" y="669" width="68" height="6" fill="#dbe6f0"/>
<rect x="7" y="674" width="68" height="8" fill="#4a4f60"/>
<rect x="7" y="680" width="68" height="3" fill="#8f8878"/>
<rect x="22" y="660" width="11" height="15" fill="#c9cdc8"/>
<rect x="23" y="662" width="3" height="3" fill="#5a8a80"/>
<rect x="28" y="666" width="3" height="3" fill="#7a7a88"/>
<rect x="34" y="660" width="6" height="19" fill="#3c4866"/>
<rect x="57" y="664" width="18" height="13" fill="#5d7a4a"/>
<rect x="67" y="660" width="8" height="6" fill="#e4e4dc"/>
<rect x="51" y="669" width="8" height="9" fill="#3f5a48"/>
<rect x="62" y="672" width="9" height="8" fill="#2e3350"/>
<rect x="69" y="669" width="3" height="8" fill="#f0f0f0"/>
<rect x="40" y="672" width="14" height="9" fill="#2f3552"/>
<rect x="7" y="672" width="10" height="6" fill="#5a6078"/>
<rect x="13" y="676" width="8" height="3" fill="#c07848"/>
<rect x="7" y="682" width="68" height="3" fill="#b3a890"/>
<rect x="37" y="687" width="22" height="2" fill="#a89c86" opacity="0.7"/>
<rect x="36" y="679" width="7" height="19" fill="#1e1e22"/>
<rect x="36" y="684" width="7" height="2" fill="#d8c820"/>
<rect x="37" y="676" width="4" height="4" fill="#3a2c24"/>
<path d="M43 696l6-7" fill="none" stroke="#6a4418" stroke-width="2.2"/>
<path d="M15 698 c1-9 5-14 12-15 c7 0 10 5 11 15z" fill="#e2211a"/>
<path d="M25 698 c0-6 2-10 5-12 l4 1 v11z" fill="#c01812"/>
<rect x="27" y="672" width="8" height="6" fill="#15120f"/>
<rect x="28" y="677" width="7" height="6" fill="#a87a5c"/>
<rect x="27" y="675.5" width="8" height="2.5" fill="#1a1a1a"/>
<rect x="33.5" y="660" width="1.2" height="38" fill="#2a2a30"/>
<rect x="121" y="660" width="62" height="38" fill="#c4b59a"/>
<rect x="121" y="660" width="62" height="16" fill="#b4cdec"/>
<rect x="121" y="669" width="62" height="6" fill="#dbe6f0"/>
<rect x="121" y="674" width="62" height="8" fill="#4a4f60"/>
<rect x="121" y="680" width="62" height="3" fill="#8f8878"/>
<rect x="134" y="660" width="15" height="17" fill="#48506e"/>
<rect x="135" y="660" width="4" height="9" fill="#d0d0cc"/>
<rect x="129" y="664" width="2" height="10" fill="#c8b8a8"/>
<rect x="167" y="662" width="15" height="12" fill="#e6e6de"/>
<rect x="155" y="668" width="26" height="9" fill="#587646"/>
<rect x="168" y="671" width="14" height="8" fill="#303450"/>
<rect x="121" y="672" width="12" height="7" fill="#50587a"/>
<rect x="121" y="682" width="62" height="3" fill="#b3a890"/>
<rect x="151" y="687" width="22" height="2" fill="#a89c86" opacity="0.7"/>
<rect x="149" y="679" width="7" height="19" fill="#1e1e22"/>
<rect x="149" y="684" width="7" height="2" fill="#d8c820"/>
<rect x="150" y="676" width="4" height="4" fill="#3a2c24"/>
<path d="M156 696l6-7" fill="none" stroke="#6a4418" stroke-width="2.2"/>
<path d="M128 698 c1-9 5-14 12-15 c7 0 10 5 11 15z" fill="#e2211a"/>
<path d="M138 698 c0-6 2-10 5-12 l4 1 v11z" fill="#c01812"/>
<rect x="140" y="672" width="8" height="6" fill="#15120f"/>
<rect x="141" y="677" width="7" height="6" fill="#a87a5c"/>
<rect x="140" y="675.5" width="8" height="2.5" fill="#1a1a1a"/>
<rect x="183.5" y="660" width="5.5" height="38" fill="#d6d0c0"/>
<rect x="183.5" y="660" width="5.5" height="10" fill="#cfe0f0"/>
<rect x="182.5" y="660" width="1" height="38" fill="#30303a"/>
<path d="M76.0 677.3 L80.4 684.5 L84.8 675.5 L89.2 684.5 L93.6 675.5 L98.0 684.5 L102.4 675.5 L106.8 684.5 L111.2 675.5 L115.6 684.5 L120.0 677.3" fill="none" stroke="#000000" stroke-width="1"/>
<text x="66" y="684" font-size="10" fill="#6a7a8a" textLength="60" lengthAdjust="spacingAndGlyphs" opacity="0.45">(Media Offline)</text>
<path d="M9.5 697 L33 660" fill="none" stroke="#0000ff" stroke-width="1.3"/>
<path d="M184 661 L189 697" fill="none" stroke="#0000ff" stroke-width="1.3"/>
<polygon points="101,660 114,660 112,663 103,663" fill="#3a3a3a"/>
<rect x="103" y="660" width="9" height="2" fill="#0000ff"/>
<text x="9.5" y="652" font-size="12" fill="#ffffff" textLength="78" lengthAdjust="spacingAndGlyphs">EHBO_SHOT_05</text>
<path d="M138.0 642.5v10.5h10M133.5 646.5h10.5v10.5" fill="none" stroke="#2b2b2b" stroke-width="4.4"/>
<path d="M138.0 642.5v10.5h10M133.5 646.5h10.5v10.5" fill="none" stroke="#ffffff" stroke-width="2.5"/>
<text x="154" y="655" font-size="16.5" font-style="italic" fill="#ffffff" textLength="13.5" lengthAdjust="spacingAndGlyphs" stroke="#303030" stroke-width="1.8" stroke-linejoin="round" paint-order="stroke" style='font-family:"Liberation Serif", serif'>fx</text>
<rect x="172.9" y="642.4" width="14.2" height="3.7" fill="#2b2b2b" rx="1"/>
<rect x="173.5" y="643" width="13" height="2.5" fill="#ffffff" rx="0.5"/>
<rect x="172.9" y="647.4" width="14.2" height="3.7" fill="#2b2b2b" rx="1"/>
<rect x="173.5" y="648" width="13" height="2.5" fill="#ffffff" rx="0.5"/>
<rect x="172.9" y="652.4" width="14.2" height="3.7" fill="#2b2b2b" rx="1"/>
<rect x="173.5" y="653" width="13" height="2.5" fill="#ffffff" rx="0.5"/>
<polygon points="7.5,692 13,697.5 7.5,697.5" fill="#ffffff" stroke="#000000" stroke-width="0.8"/>
<rect x="7" y="698" width="182" height="1.5" fill="#262626"/>
<rect x="194.5" y="637" width="282.5" height="62" fill="#7e3241"/>
<rect x="194.5" y="660" width="12" height="38" fill="#22252d"/>
<rect x="194.5" y="660" width="12" height="7" fill="#3a3230"/>
<rect x="195" y="668" width="11" height="22" fill="#121214"/>
<rect x="199.9" y="687" width="6.6" height="8" fill="#9c7a68"/>
<rect x="194.5" y="695" width="12" height="3" fill="#1d4a86"/>
<rect x="194" y="637" width="1" height="62" fill="#2a2226"/>
<polygon points="195,659.5 199,659.5 195,663.5" fill="#0000ff"/>
<polygon points="206,659.5 202,659.5 206,663.5" fill="#0000ff"/>
<polygon points="195,692 200.5,697.5 195,697.5" fill="#ffffff" stroke="#000000" stroke-width="0.8"/>
<rect x="206.5" y="660" width="10" height="38" fill="#22252d"/>
<rect x="206.5" y="660" width="10" height="7" fill="#3a3230"/>
<rect x="207" y="668" width="9" height="22" fill="#121214"/>
<rect x="211" y="687" width="5.5" height="8" fill="#9c7a68"/>
<rect x="206.5" y="695" width="10" height="3" fill="#1d4a86"/>
<rect x="206" y="637" width="1" height="62" fill="#2a2226"/>
<polygon points="207,659.5 211,659.5 207,663.5" fill="#0000ff"/>
<polygon points="216,659.5 212,659.5 216,663.5" fill="#0000ff"/>
<polygon points="207,692 212.5,697.5 207,697.5" fill="#ffffff" stroke="#000000" stroke-width="0.8"/>
<rect x="216.5" y="660" width="69" height="38" fill="#2b2f3d"/>
<rect x="216.5" y="660" width="69" height="11" fill="#3b3331"/>
<rect x="236.5" y="662" width="30" height="7" fill="#463a36"/>
<rect x="228.5" y="670" width="44" height="14" fill="#39405a"/>
<rect x="268.5" y="672" width="17" height="14" fill="#333038"/>
<rect x="217" y="668" width="11" height="23" fill="#121214"/>
<rect x="221.5" y="686" width="8" height="10" fill="#9c7a68"/>
<rect x="216.5" y="695" width="12" height="3" fill="#1d4a86"/>
<rect x="228.5" y="685" width="30" height="12" fill="#1f2230"/>
<rect x="229.5" y="689" width="9" height="5" fill="#4a88c8"/>
<rect x="240.5" y="687" width="6" height="4" fill="#5a90d0"/>
<rect x="246.5" y="690" width="5" height="7" fill="#8a8890"/>
<rect x="256.5" y="685" width="11" height="10" fill="#bfc3cf"/>
<rect x="257.5" y="687" width="5" height="3" fill="#8fa8d0"/>
<rect x="268.5" y="687" width="17" height="11" fill="#3a3032"/>
<rect x="232.5" y="695" width="6" height="2" fill="#d83820"/>
<rect x="243.5" y="670" width="8" height="2.5" fill="#8fb0d8"/>
<rect x="250.5" y="672" width="2.5" height="3" fill="#d85030"/>
<rect x="266.5" y="668" width="10" height="3" fill="#6a6420" opacity="0.7"/>
<rect x="216" y="637" width="1" height="62" fill="#2a2226"/>
<polygon points="217,659.5 221,659.5 217,663.5" fill="#0000ff"/>
<polygon points="285,659.5 281,659.5 285,663.5" fill="#0000ff"/>
<polygon points="217,692 222.5,697.5 217,697.5" fill="#ffffff" stroke="#000000" stroke-width="0.8"/>
<rect x="285.5" y="660" width="16" height="38" fill="#454c5e"/>
<rect x="286.5" y="663" width="14" height="10" fill="#5d6478"/>
<rect x="285.5" y="685" width="16" height="10" fill="#5c5450"/>
<rect x="288.5" y="668" width="6" height="4" fill="#3a5a90"/>
<rect x="285.5" y="694" width="16" height="4" fill="#3a4050"/>
<rect x="285" y="637" width="1" height="62" fill="#2a2226"/>
<polygon points="286,659.5 290,659.5 286,663.5" fill="#0000ff"/>
<polygon points="301,659.5 297,659.5 301,663.5" fill="#0000ff"/>
<polygon points="286,692 291.5,697.5 286,697.5" fill="#ffffff" stroke="#000000" stroke-width="0.8"/>
<rect x="301.5" y="660" width="10" height="38" fill="#2e3648"/>
<rect x="301.5" y="661" width="10" height="16" fill="#96706c"/>
<rect x="302.5" y="664" width="4" height="5" fill="#c8a040"/>
<rect x="301.5" y="673" width="10" height="3" fill="#b09090"/>
<rect x="306.5" y="686" width="3" height="6" fill="#1e2430"/>
<rect x="301" y="637" width="1" height="62" fill="#2a2226"/>
<polygon points="302,659.5 306,659.5 302,663.5" fill="#0000ff"/>
<polygon points="311,659.5 307,659.5 311,663.5" fill="#0000ff"/>
<polygon points="302,692 307.5,697.5 302,697.5" fill="#ffffff" stroke="#000000" stroke-width="0.8"/>
<rect x="311.5" y="660" width="56" height="38" fill="#2d3344"/>
<rect x="311.5" y="660" width="56" height="5" fill="#2a2c48"/>
<rect x="312.5" y="665" width="30" height="9" fill="#3a2830"/>
<rect x="313.5" y="667" width="6" height="4" fill="#a82828"/>
<rect x="347.5" y="660" width="20" height="12" fill="#24356e"/>
<rect x="356.5" y="661" width="2" height="7" fill="#58b060"/>
<rect x="362.5" y="664" width="2" height="10" fill="#e8e8f0"/>
<rect x="350.5" y="671" width="17" height="14" fill="#d9c41e"/>
<rect x="353.5" y="673" width="4" height="3" fill="#3060c0"/>
<rect x="359.5" y="676" width="5" height="3" fill="#4070c8"/>
<rect x="348.5" y="677" width="4" height="4" fill="#c03030"/>
<rect x="311.5" y="686" width="56" height="12" fill="#343a4c"/>
<rect x="319.5" y="684" width="1.5" height="3" fill="#e03020"/>
<rect x="324.5" y="683" width="3" height="2" fill="#c8c8c8"/>
<rect x="337.5" y="684" width="4" height="2" fill="#b0b0b8"/>
<rect x="345.5" y="682" width="3" height="2" fill="#9098a8"/>
<rect x="311" y="637" width="1" height="62" fill="#2a2226"/>
<polygon points="312,659.5 316,659.5 312,663.5" fill="#0000ff"/>
<polygon points="367,659.5 363,659.5 367,663.5" fill="#0000ff"/>
<polygon points="312,692 317.5,697.5 312,697.5" fill="#ffffff" stroke="#000000" stroke-width="0.8"/>
<rect x="367.5" y="660" width="15" height="38" fill="#8b8c88"/>
<rect x="368.5" y="662" width="13" height="14" fill="#9a9c98"/>
<rect x="368.5" y="677" width="12" height="21" fill="#b22a18"/>
<rect x="368.5" y="675" width="9" height="4" fill="#d86a50"/>
<rect x="376.5" y="690" width="5" height="8" fill="#7a2018"/>
<rect x="367" y="637" width="1" height="62" fill="#2a2226"/>
<polygon points="368,659.5 372,659.5 368,663.5" fill="#0000ff"/>
<polygon points="382,659.5 378,659.5 382,663.5" fill="#0000ff"/>
<polygon points="368,692 373.5,697.5 368,697.5" fill="#ffffff" stroke="#000000" stroke-width="0.8"/>
<rect x="382.5" y="660" width="12" height="38" fill="#9a9c98"/>
<rect x="384.5" y="664" width="8" height="12" fill="#a8aaa6"/>
<rect x="384.5" y="677" width="9" height="1.5" fill="#c05040"/>
<rect x="386.5" y="682" width="6" height="8" fill="#b8bcc8"/>
<rect x="382.5" y="693" width="12" height="5" fill="#707270"/>
<rect x="382" y="637" width="1" height="62" fill="#2a2226"/>
<polygon points="383,659.5 387,659.5 383,663.5" fill="#0000ff"/>
<polygon points="394,659.5 390,659.5 394,663.5" fill="#0000ff"/>
<polygon points="383,692 388.5,697.5 383,697.5" fill="#ffffff" stroke="#000000" stroke-width="0.8"/>
<rect x="394.5" y="660" width="11" height="38" fill="#2a2c2c"/>
<rect x="395.5" y="662" width="4" height="3" fill="#d0d0d0"/>
<rect x="395.5" y="674" width="8" height="16" fill="#c9b220"/>
<rect x="395.5" y="671" width="5" height="4" fill="#d04020"/>
<rect x="394.5" y="690" width="11" height="8" fill="#4a4c50"/>
<rect x="394" y="637" width="1" height="62" fill="#2a2226"/>
<polygon points="395,659.5 399,659.5 395,663.5" fill="#0000ff"/>
<polygon points="405,659.5 401,659.5 405,663.5" fill="#0000ff"/>
<polygon points="395,692 400.5,697.5 395,697.5" fill="#ffffff" stroke="#000000" stroke-width="0.8"/>
<rect x="405.5" y="660" width="13" height="38" fill="#151515"/>
<rect x="408.5" y="662" width="7" height="8" fill="#6a6a40"/>
<rect x="405.5" y="677" width="10" height="4" fill="#8aa21e"/>
<rect x="407.5" y="673" width="5" height="3" fill="#a0a030"/>
<rect x="405.5" y="694" width="13" height="4" fill="#2a2c30"/>
<rect x="405" y="637" width="1" height="62" fill="#2a2226"/>
<polygon points="406,659.5 410,659.5 406,663.5" fill="#0000ff"/>
<polygon points="418,659.5 414,659.5 418,663.5" fill="#0000ff"/>
<polygon points="406,692 411.5,697.5 406,697.5" fill="#ffffff" stroke="#000000" stroke-width="0.8"/>
<rect x="418.5" y="660" width="11" height="38" fill="#34363a"/>
<rect x="420.5" y="661" width="5" height="3" fill="#d8d8d8"/>
<rect x="419" y="673" width="10" height="13" fill="#c9b41f"/>
<rect x="420.5" y="676" width="4" height="3" fill="#e0e0e0"/>
<rect x="418.5" y="687" width="11" height="11" fill="#4a4c52"/>
<rect x="418" y="637" width="1" height="62" fill="#2a2226"/>
<polygon points="419,659.5 423,659.5 419,663.5" fill="#0000ff"/>
<polygon points="429,659.5 425,659.5 429,663.5" fill="#0000ff"/>
<polygon points="419,692 424.5,697.5 419,697.5" fill="#ffffff" stroke="#000000" stroke-width="0.8"/>
<rect x="429.5" y="660" width="47.5" height="38" fill="#4b4f52"/>
<rect x="439.5" y="662" width="22" height="14" fill="#8a8c88"/>
<rect x="431.5" y="665" width="6" height="8" fill="#1e1e1e"/>
<rect x="462.5" y="663" width="10" height="8" fill="#2a2a28"/>
<rect x="457.5" y="668" width="19" height="6" fill="#c8b020"/>
<rect x="460.5" y="672" width="16" height="5" fill="#2848a8"/>
<rect x="465.5" y="670" width="5" height="4" fill="#c82020"/>
<rect x="459.5" y="674" width="7" height="8" fill="#b0a428"/>
<rect x="434.5" y="679" width="14" height="19" fill="#c9c8c0"/>
<rect x="436.5" y="672" width="5" height="6" fill="#2a2420"/>
<rect x="443.5" y="674" width="4" height="5" fill="#1a1a1a"/>
<rect x="441.5" y="685" width="26" height="13" fill="#3c3d28"/>
<rect x="451.5" y="678" width="8" height="8" fill="#4a4c38"/>
<rect x="467.5" y="686" width="9" height="12" fill="#55585c"/>
<rect x="429.5" y="680" width="5" height="18" fill="#6a6c68"/>
<rect x="429" y="637" width="1" height="62" fill="#2a2226"/>
<polygon points="430,659.5 434,659.5 430,663.5" fill="#0000ff"/>
<polygon points="476.5,659.5 472.5,659.5 476.5,663.5" fill="#0000ff"/>
<polygon points="430,692 435.5,697.5 430,697.5" fill="#ffffff" stroke="#000000" stroke-width="0.8"/>
<rect x="194.5" y="659" width="282.5" height="1" fill="#2a1a1e"/>
<text x="197" y="684" font-size="11" fill="#7f93a8" textLength="8" lengthAdjust="spacingAndGlyphs" opacity="0.5">(M</text>
<text x="208" y="684" font-size="11" fill="#7f93a8" textLength="7" lengthAdjust="spacingAndGlyphs" opacity="0.5">(N</text>
<text x="220" y="684" font-size="11" fill="#7f93a8" textLength="62" lengthAdjust="spacingAndGlyphs" opacity="0.5">(Media Offline)</text>
<text x="288" y="684" font-size="11" fill="#7f93a8" textLength="10" lengthAdjust="spacingAndGlyphs" opacity="0.5">(M</text>
<text x="304" y="684" font-size="11" fill="#7f93a8" textLength="6" lengthAdjust="spacingAndGlyphs" opacity="0.5">(N</text>
<text x="315" y="684" font-size="11" fill="#7f93a8" textLength="62" lengthAdjust="spacingAndGlyphs" opacity="0.5">(Media Offline)</text>
<text x="371" y="684" font-size="11" fill="#7f93a8" textLength="10" lengthAdjust="spacingAndGlyphs" opacity="0.5">(M</text>
<text x="384" y="684" font-size="11" fill="#7f93a8" textLength="9" lengthAdjust="spacingAndGlyphs" opacity="0.5">(M</text>
<text x="396" y="684" font-size="11" fill="#7f93a8" textLength="8" lengthAdjust="spacingAndGlyphs" opacity="0.5">(N</text>
<text x="408" y="684" font-size="11" fill="#7f93a8" textLength="9" lengthAdjust="spacingAndGlyphs" opacity="0.5">(M</text>
<text x="420" y="684" font-size="11" fill="#7f93a8" textLength="8" lengthAdjust="spacingAndGlyphs" opacity="0.5">(N</text>
<text x="432" y="684" font-size="11" fill="#7f93a8" textLength="44" lengthAdjust="spacingAndGlyphs" opacity="0.5">(Media Of</text>
<text x="249" y="655" font-size="16.5" font-style="italic" fill="#ffffff" textLength="13.5" lengthAdjust="spacingAndGlyphs" stroke="#303030" stroke-width="1.8" stroke-linejoin="round" paint-order="stroke" style='font-family:"Liberation Serif", serif'>fx</text>
<rect x="268.9" y="642.4" width="14.2" height="3.7" fill="#2b2b2b" rx="1"/>
<rect x="269.5" y="643" width="13" height="2.5" fill="#ffffff" rx="0.5"/>
<rect x="268.9" y="647.4" width="14.2" height="3.7" fill="#2b2b2b" rx="1"/>
<rect x="269.5" y="648" width="13" height="2.5" fill="#ffffff" rx="0.5"/>
<rect x="268.9" y="652.4" width="14.2" height="3.7" fill="#2b2b2b" rx="1"/>
<rect x="269.5" y="653" width="13" height="2.5" fill="#ffffff" rx="0.5"/>
<text x="331" y="655" font-size="16.5" font-style="italic" fill="#ffffff" textLength="13.5" lengthAdjust="spacingAndGlyphs" stroke="#303030" stroke-width="1.8" stroke-linejoin="round" paint-order="stroke" style='font-family:"Liberation Serif", serif'>fx</text>
<rect x="350.9" y="642.4" width="14.2" height="3.7" fill="#2b2b2b" rx="1"/>
<rect x="351.5" y="643" width="13" height="2.5" fill="#ffffff" rx="0.5"/>
<rect x="350.9" y="647.4" width="14.2" height="3.7" fill="#2b2b2b" rx="1"/>
<rect x="351.5" y="648" width="13" height="2.5" fill="#ffffff" rx="0.5"/>
<rect x="350.9" y="652.4" width="14.2" height="3.7" fill="#2b2b2b" rx="1"/>
<rect x="351.5" y="653" width="13" height="2.5" fill="#ffffff" rx="0.5"/>
<rect x="459.9" y="642.4" width="14.2" height="3.7" fill="#2b2b2b" rx="1"/>
<rect x="460.5" y="643" width="13" height="2.5" fill="#ffffff" rx="0.5"/>
<rect x="459.9" y="647.4" width="14.2" height="3.7" fill="#2b2b2b" rx="1"/>
<rect x="460.5" y="648" width="13" height="2.5" fill="#ffffff" rx="0.5"/>
<rect x="459.9" y="652.4" width="14.2" height="3.7" fill="#2b2b2b" rx="1"/>
<rect x="460.5" y="653" width="13" height="2.5" fill="#ffffff" rx="0.5"/>
<polygon points="242.5,660 255.5,660 253.5,663 244.5,663" fill="#3a3a3a"/>
<rect x="244.5" y="660" width="9" height="2" fill="#0000ff"/>
<polygon points="332.5,660 345.5,660 343.5,663 334.5,663" fill="#3a3a3a"/>
<rect x="334.5" y="660" width="9" height="2" fill="#0000ff"/>
<polygon points="446.5,660 459.5,660 457.5,663 448.5,663" fill="#3a3a3a"/>
<rect x="448.5" y="660" width="9" height="2" fill="#0000ff"/>
<rect x="194.5" y="698" width="282.5" height="1.5" fill="#262626"/>
<rect x="477" y="637" width="129" height="62" fill="#7e3241"/>
<rect x="477" y="637" width="1" height="62" fill="#2a1a1e"/>
<rect x="477" y="659" width="129" height="1" fill="#3a2026"/>
<rect x="477.5" y="660" width="68" height="38" fill="#e8935c"/>
<rect x="477.5" y="660" width="68" height="12" fill="#9fc0ea"/>
<rect x="477.5" y="667" width="68" height="9" fill="#4e5d40"/>
<rect x="489.5" y="665" width="20" height="5" fill="#56684a"/>
<rect x="513.5" y="664" width="24" height="6" fill="#8c8a5c"/>
<rect x="521.5" y="662" width="8" height="4" fill="#a89078"/>
<rect x="477.5" y="672" width="68" height="3" fill="#6a6248"/>
<rect x="491.5" y="671" width="40" height="3" fill="#b0843a" opacity="0.8"/>
<rect x="477.5" y="675.5" width="68" height="3.5" fill="#46423e"/>
<rect x="477.5" y="679" width="68" height="2.5" fill="#b98c6a"/>
<rect x="483" y="664" width="1.3" height="13" fill="#2a2a30"/>
<rect x="497.5" y="660" width="1.3" height="16" fill="#3a3a40"/>
<rect x="505.5" y="666" width="1.2" height="10" fill="#2a2a30"/>
<rect x="497" y="677" width="2.5" height="12" fill="#2a1a1a"/>
<rect x="496.5" y="675.5" width="3.5" height="2.5" fill="#d82818"/>
<rect x="513.5" y="677" width="32" height="21" fill="#2c2722"/>
<rect x="510.5" y="682" width="6" height="12" fill="#3a2e24"/>
<rect x="521.5" y="671" width="5" height="8" fill="#1e1a18"/>
<rect x="537.5" y="671" width="8" height="3" fill="#f0d800"/>
<rect x="542.5" y="682" width="3" height="13" fill="#f2d600"/>
<rect x="513.5" y="679" width="12" height="2.5" fill="#e0b820"/>
<rect x="527.5" y="675" width="10" height="2" fill="#d8d8d8"/>
<rect x="515.5" y="690" width="20" height="8" fill="#3a2a1c"/>
<rect x="477.5" y="692" width="34" height="1.5" fill="#f0b080" opacity="0.7"/>
<rect x="483.5" y="685" width="8" height="1.2" fill="#f4c8a0" opacity="0.7"/>
<rect x="543.5" y="693" width="2" height="3" fill="#2050c0"/>
<path d="M546.0 677.3 L550.6 684.5 L555.2 675.5 L559.8 684.5 L564.5 675.5 L569.1 684.5 L573.7 675.5 L578.3 684.5 L582.9 675.5 L587.5 684.5 L592.2 675.5 L596.8 684.5 L601.4 675.5 L606.0 682.7" fill="none" stroke="#000000" stroke-width="1"/>
<defs><pattern id="hatch" width="2" height="2" patternUnits="userSpaceOnUse"><rect width="2" height="2" fill="#7e3241"/><rect width="1" height="1" fill="#3a2a2e"/><rect x="1" y="1" width="1" height="1" fill="#3a2a2e"/></pattern></defs>
<rect x="589" y="660" width="17" height="38" fill="url(#hatch)"/>
<path d="M590 661 C596 672 598 688 606 697" fill="none" stroke="#0000ff" stroke-width="1.3"/>
<text x="520" y="684" font-size="10" fill="#6a7a8a" textLength="60" lengthAdjust="spacingAndGlyphs" opacity="0.45">(Media Offline)</text>
<polygon points="477.5,659.5 481.5,659.5 477.5,663.5" fill="#0000ff"/>
<polygon points="525.5,660 538.5,660 536.5,663 527.5,663" fill="#3a3a3a"/>
<rect x="527.5" y="660" width="9" height="2" fill="#0000ff"/>
<text x="479.5" y="652" font-size="12" fill="#ffffff" textLength="65" lengthAdjust="spacingAndGlyphs">EHBO_SHO...</text>
<path d="M554.5 642.5v10.5h10M550 646.5h10.5v10.5" fill="none" stroke="#2b2b2b" stroke-width="4.4"/>
<path d="M554.5 642.5v10.5h10M550 646.5h10.5v10.5" fill="none" stroke="#ffffff" stroke-width="2.5"/>
<text x="570.5" y="655" font-size="16.5" font-style="italic" fill="#ffffff" textLength="13.5" lengthAdjust="spacingAndGlyphs" stroke="#303030" stroke-width="1.8" stroke-linejoin="round" paint-order="stroke" style='font-family:"Liberation Serif", serif'>fx</text>
<rect x="589.9" y="642.4" width="14.2" height="3.7" fill="#2b2b2b" rx="1"/>
<rect x="590.5" y="643" width="13" height="2.5" fill="#ffffff" rx="0.5"/>
<rect x="589.9" y="647.4" width="14.2" height="3.7" fill="#2b2b2b" rx="1"/>
<rect x="590.5" y="648" width="13" height="2.5" fill="#ffffff" rx="0.5"/>
<rect x="589.9" y="652.4" width="14.2" height="3.7" fill="#2b2b2b" rx="1"/>
<rect x="590.5" y="653" width="13" height="2.5" fill="#ffffff" rx="0.5"/>
<polygon points="477.5,692 483,697.5 477.5,697.5" fill="#ffffff" stroke="#000000" stroke-width="0.8"/>
<rect x="477" y="698" width="129" height="1.5" fill="#262626"/>
<rect x="7" y="701" width="563" height="66" fill="#5c75b0"/>
<rect x="571" y="701" width="54" height="66" fill="#5c75b0"/>
<rect x="570" y="701" width="1" height="66" fill="#222a40"/>
<rect x="7" y="723" width="618" height="1" fill="#2a3350"/>
<path d="M7 730h2v-2h1v4h2v1h6v-5h2v4h7v-3h4v1h3v-5h6v-1h1v2h2v-1h2v-1h3v4h3v-3h3v2h3v-1h2v-2h1v4h3v-3h5v3h3v1h2v-1h3v2h1v-4h3v-1h2v3h1v-1h2v-2h1v3h2v-1h3v-2h3v1h2v5h3v-2h1v-2h3v2h3v-5h2v3h2v3h3v-4h2v-2h1v4h1v-2h1v1h2v-1h6v-1h3v-1h4v2h4v3h3v-1h2v-1h3v-1h3v-1h3v3h3v-2h1v-1h2v1h1v-2h2v5h1v-2h3v3h2v-5h1v3h1v-2h2v2h1v-4h3v4h1v-2h3v-1h3v-1h3v6h1v1h1v-2h1v1h3v1h1v1h1v1h1v1h1v-5h1v-2h3v-2h2v3h5v1h3v-5h1v3h1v-2h4v6h1v-3h3v-3h3v5h3v-5h3v1h3v3h3v-2h3v-1h2v-1h4v1h2v-1h3v3h2v-2h4v-2h2v1h3v1h3v-1h2v3h3v-3h3v2h3v3h2v-5h2v4h2v-5h2v1h2v4h1v-3h3v2h6v1h2v-5h1v1h1v5h1v-6h2v2h2v1h1v-2h3v4h2v-1h5v-1h5v-3h1v5h2v-4h6v1h1v3h2v-4h3v5h3v-5h3v-1h2v5h1v2h3v-6h2v1h1v-1h4v3h3v-2h3v-2h3v1h1v4h2v-3h1v3h1v-1h3v-2h1v-1h8v-1h2v1h1v5h2v-5h2v-1h2v2h3v1h1v2h2v-3h3v2h2v-2h3v2h3v-1h3v-3h1v4h3v-3h9v3h3v-3h3v2h1v-3h1v3h2v1h3v1h1v-5h1v5h3v-1h2v-2h1v4h2v-6h1v1h3v-1h3v1h3v2h3v-2h2v2h2v-3h1v1h3v-1h3v1h3v-1h3v5h4v-3h3v-1h5v1h3v4h2v-4h2v1h1v-3h3v5h1v-1h1v-3h4v3h1v-3h1v1h3v3h2v-2h5v2h3v-3h2v-2h1v5h1v-4h3v3h2v-2h3v-2h2v3h2v-1h2v2h3v-2h2v-2h3v5h1v-1h1v1h1v-4h12v1h2v5h2v-7h3v5h3v-3h2v-1h1V744h-1v-1h-2v2h-3v-3h-3v-2h-2v4h-2v1h-3v-1h-3v-2h-3v3h-3v-5h-1v1h-1v-1h-1v5h-5v-2h-5v-2h-2v3h-2v-2h-2v-3h-1v3h-2v2h-3v1h-2v-2h-2v2h-3v-3h-5v-3h-2v5h-3v-5h-1v5h-1v-1h-2v1h-2v-3h-1v-1h-4v-1h-1v5h-2v-5h-2v5h-5v-4h-3v4h-3v-4h-4v4h-3v1h-2v-1h-1v-1h-6v2h-1v-2h-2v2h-2v-3h-3v3h-1v-3h-2v2h-6v1h-1v-7h-2v5h-1v-3h-5v5h-1v-5h-1v2h-3v1h-2v1h-1v-5h-1v5h-3v-3h-3v2h-3v2h-3v-1h-1v-1h-2v-3h-3v5h-1v-4h-3v2h-3v1h-3v-4h-2v5h-3v-6h-2v2h-1v2h-3v2h-2v-2h-2v-3h-2v5h-3v-3h-1v2h-2v-1h-6v-2h-4v2h-3v1h-4v-4h-2v3h-1v-2h-3v4h-3v-1h-1v-1h-3v-1h-3v-2h-1v4h-2v1h-3v-6h-3v5h-3v-3h-2v3h-4v-1h-3v-3h-2v5h-1v-3h-3v1h-2v-2h-2v-1h-4v-1h-1v5h-3v-3h-1v2h-2v2h-2v-6h-1v5h-1v1h-3v-4h-1v1h-1v-1h-4v2h-3v-3h-1v4h-2v1h-2v-4h-2v4h-2v-5h-2v2h-3v1h-3v-3h-3v4h-2v-1h-3v2h-3v-1h-2v-1h-4v-2h-2v3h-8v-2h-5v2h-1v-1h-6v2h-3v-1h-3v1h-3v-3h-3v-4h-1v6h-3v-1h-1v-1h-1v3h-1v-5h-3v1h-5v3h-2v-3h-3v-2h-1v-4h-1v1h-2v1h-1v1h-1v1h-1v-1h-1v1h-1v-1h-1v1h-1v5h-3v-2h-1v2h-2v-1h-3v-2h-1v4h-3v-4h-1v3h-2v-2h-1v2h-1v-4h-2v2h-3v-1h-1v4h-2v-2h-1v1h-2v-5h-1v3h-3v2h-3v-1h-3v-1h-3v-1h-2v-1h-3v2h-2v2h-2v1h-2v-2h-5v-3h-3v3h-3v-1h-2v-2h-2v4h-3v-4h-3v3h-2v2h-2v-5h-3v2h-3v-2h-1v-1h-3v3h-2v2h-3v-1h-3v-2h-1v3h-1v-1h-1v-1h-2v-1h-1v3h-2v-1h-3v-2h-4v3h-2v-3h-3v4h-2v-2h-3v-2h-3v4h-1v-2h-2v-2h-3v3h-3v-3h-3v4h-3v-1h-5v1h-3v-2h-3v-4h-3v2h-1v-1h-3v-4h-2v-1h-2v1h-3v4h-1v2h-1v-6h-8v6h-1v-2h-2Z" fill="#acbadb" shape-rendering="crispEdges"/>
<path d="M7 752h2v-2h1v4h2v1h6v-5h2v4h7v-3h4v1h3v-5h6v-1h1v2h2v-1h2v-1h3v4h3v-3h3v2h3v-1h2v-2h1v4h3v-3h5v3h3v1h2v-1h3v2h1v-4h3v-1h2v3h1v-1h2v-2h1v3h2v-1h3v-2h3v1h2v5h3v-2h1v-2h3v2h3v-5h2v3h2v3h3v-4h2v-2h1v4h1v-2h1v1h2v-1h6v-1h3v-1h4v2h4v3h3v-1h2v-1h3v-1h3v-1h3v3h3v-2h1v-1h2v1h1v-2h2v5h1v-2h3v3h2v-5h1v3h1v-2h2v2h1v-4h3v4h1v-2h3v-1h3v-1h3v6h1v1h1v-2h1v1h3v1h1v1h1v1h1v1h1v-5h1v-2h3v-2h2v3h5v1h3v-5h1v3h1v-2h4v6h1v-3h3v-3h3v5h3v-5h3v1h3v3h3v-2h3v-1h2v-1h4v1h2v-1h3v3h2v-2h4v-2h2v1h3v1h3v-1h2v3h3v-3h3v2h3v3h2v-5h2v4h2v-5h2v1h2v4h1v-3h3v2h6v1h2v-5h1v1h1v5h1v-6h2v2h2v1h1v-2h3v4h2v-1h5v-1h5v-3h1v5h2v-4h6v1h1v3h2v-4h3v5h3v-5h3v-1h2v5h1v2h3v-6h2v1h1v-1h4v3h3v-2h3v-2h3v1h1v4h2v-3h1v3h1v-1h3v-2h1v-1h8v-1h2v1h1v5h2v-5h2v-1h2v2h3v1h1v2h2v-3h3v2h2v-2h3v2h3v-1h3v-3h1v4h3v-3h9v3h3v-3h3v2h1v-3h1v3h2v1h3v1h1v-5h1v5h3v-1h2v-2h1v4h2v-6h1v1h3v-1h3v1h3v2h3v-2h2v2h2v-3h1v1h3v-1h3v1h3v-1h3v5h4v-3h3v-1h5v1h3v4h2v-4h2v1h1v-3h3v5h1v-1h1v-3h4v3h1v-3h1v1h3v3h2v-2h5v2h3v-3h2v-2h1v5h1v-4h3v3h2v-2h3v-2h2v3h2v-1h2v2h3v-2h2v-2h3v5h1v-1h1v1h1v-4h12v1h2v5h2v-7h3v5h3v-3h2v-1h1V765h-1v-1h-2v2h-3v-3h-3v-2h-2v4h-2v1h-3v-1h-3v-2h-3v3h-3v-5h-1v1h-1v-1h-1v5h-5v-2h-5v-2h-2v3h-2v-2h-2v-3h-1v3h-2v2h-3v1h-2v-2h-2v2h-3v-3h-5v-3h-2v5h-3v-5h-1v5h-1v-1h-2v1h-2v-3h-1v-1h-4v-1h-1v5h-2v-5h-2v5h-5v-4h-3v4h-3v-4h-4v4h-3v1h-2v-1h-1v-1h-6v2h-1v-2h-2v2h-2v-3h-3v3h-1v-3h-2v2h-6v1h-1v-7h-2v5h-1v-3h-5v5h-1v-5h-1v2h-3v1h-2v1h-1v-5h-1v5h-3v-3h-3v2h-3v2h-3v-1h-1v-1h-2v-3h-3v5h-1v-4h-3v2h-3v1h-3v-4h-2v5h-3v-6h-2v2h-1v2h-3v2h-2v-2h-2v-3h-2v5h-3v-3h-1v2h-2v-1h-6v-2h-4v2h-3v1h-4v-4h-2v3h-1v-2h-3v4h-3v-1h-1v-1h-3v-1h-3v-2h-1v4h-2v1h-3v-6h-3v5h-3v-3h-2v3h-4v-1h-3v-3h-2v5h-1v-3h-3v1h-2v-2h-2v-1h-4v-1h-1v5h-3v-3h-1v2h-2v2h-2v-6h-1v5h-1v1h-3v-4h-1v1h-1v-1h-4v2h-3v-3h-1v4h-2v1h-2v-4h-2v4h-2v-5h-2v2h-3v1h-3v-3h-3v4h-2v-1h-3v2h-3v-1h-2v-1h-4v-2h-2v3h-8v-2h-5v2h-1v-1h-6v2h-3v-1h-3v1h-3v-3h-3v-4h-1v6h-3v-1h-1v-1h-1v3h-1v-5h-3v1h-5v3h-2v-3h-3v-2h-1v-3h-2v1h-1v1h-1v1h-4v-1h-1v1h-1v5h-3v-2h-1v2h-2v-1h-3v-2h-1v4h-3v-4h-1v3h-2v-2h-1v2h-1v-4h-2v2h-3v-1h-1v4h-2v-2h-1v1h-2v-5h-1v3h-3v2h-3v-1h-3v-1h-3v-1h-2v-1h-3v2h-2v2h-2v1h-2v-2h-5v-3h-3v3h-3v-1h-2v-2h-2v4h-3v-4h-3v3h-2v2h-2v-5h-3v2h-3v-2h-1v-1h-3v3h-2v2h-3v-1h-3v-2h-1v3h-1v-1h-1v-1h-2v-1h-1v3h-2v-1h-3v-2h-4v3h-2v-3h-3v4h-2v-2h-3v-2h-3v4h-1v-2h-2v-2h-3v3h-3v-3h-3v4h-3v-1h-5v1h-3v-2h-3v-3h-3v1h-1v-1h-3v-3h-2v-1h-2v1h-3v4h-1v1h-1v-6h-6v1h-2v5h-1v-2h-2Z" fill="#acbadb" shape-rendering="crispEdges"/>
<path d="M571 727 L572.5 730.4 L577 731.3 L585 731.8 L592 732.4 L600 732.9 L624 733.1 L624 735.5 L600 735.7 L592 736.1 L585 736.6 L577 737.2 L572.5 738 L571 741Z" fill="#acbadb"/>
<path d="M571 749 L572.5 752.4 L577 753.3 L585 753.8 L592 754.4 L600 754.9 L624 755.1 L624 757.5 L600 757.7 L592 758.1 L585 758.6 L577 759.2 L572.5 760 L571 763Z" fill="#acbadb"/>
<rect x="7" y="745" width="618" height="1" fill="#4a5a88"/>
<rect x="7" y="766" width="618" height="1.5" fill="#2a2a2a"/>
<text x="9.5" y="716" font-size="12" fill="#ffffff" textLength="59" lengthAdjust="spacingAndGlyphs">Intro Muziek</text>
<text x="535.5" y="719" font-size="16.5" font-style="italic" fill="#ffffff" textLength="13.5" lengthAdjust="spacingAndGlyphs" stroke="#303030" stroke-width="1.8" stroke-linejoin="round" paint-order="stroke" style='font-family:"Liberation Serif", serif'>fx</text>
<rect x="554.9" y="706.4" width="14.2" height="3.7" fill="#2b2b2b" rx="1"/>
<rect x="555.5" y="707" width="13" height="2.5" fill="#ffffff" rx="0.5"/>
<rect x="554.9" y="711.4" width="14.2" height="3.7" fill="#2b2b2b" rx="1"/>
<rect x="555.5" y="712" width="13" height="2.5" fill="#ffffff" rx="0.5"/>
<rect x="554.9" y="716.4" width="14.2" height="3.7" fill="#2b2b2b" rx="1"/>
<rect x="555.5" y="717" width="13" height="2.5" fill="#ffffff" rx="0.5"/>
<text x="574" y="716" font-size="12" fill="#ffffff" textLength="9" lengthAdjust="spacingAndGlyphs">A.</text>
<text x="589.5" y="719" font-size="16.5" font-style="italic" fill="#ffffff" textLength="13.5" lengthAdjust="spacingAndGlyphs" stroke="#303030" stroke-width="1.8" stroke-linejoin="round" paint-order="stroke" style='font-family:"Liberation Serif", serif'>fx</text>
<rect x="609.9" y="706.4" width="14.2" height="3.7" fill="#2b2b2b" rx="1"/>
<rect x="610.5" y="707" width="13" height="2.5" fill="#ffffff" rx="0.5"/>
<rect x="609.9" y="711.4" width="14.2" height="3.7" fill="#2b2b2b" rx="1"/>
<rect x="610.5" y="712" width="13" height="2.5" fill="#ffffff" rx="0.5"/>
<rect x="609.9" y="716.4" width="14.2" height="3.7" fill="#2b2b2b" rx="1"/>
<rect x="610.5" y="717" width="13" height="2.5" fill="#ffffff" rx="0.5"/>
<polygon points="6,724 11,724 6,728" fill="#0000ff"/>
<polygon points="281.5,724 294.5,724 292.5,727 283.5,727" fill="#3a3a3a"/>
<rect x="283.5" y="724" width="9" height="2" fill="#0000ff"/>
<polygon points="567,724 574,724 570.5,728" fill="#0000ff"/>
<polygon points="590.5,724 603.5,724 601.5,727 592.5,727" fill="#3a3a3a"/>
<rect x="592.5" y="724" width="9" height="2" fill="#0000ff"/>
<polygon points="619,724 625,724 625,729" fill="#ff8c00"/>
<polygon points="7.5,760 13,765.5 7.5,765.5" fill="#ffffff" stroke="#000000" stroke-width="0.8"/>
<polygon points="571.5,760 577,765.5 571.5,765.5" fill="#ffffff" stroke="#000000" stroke-width="0.8"/>
<rect x="610" y="769" width="1214" height="66" fill="#5b9eab"/>
<rect x="610" y="791" width="1214" height="1" fill="#24363a"/>
<rect x="610" y="800.5" width="1214" height="1" fill="#aacdd4"/>
<rect x="610" y="823" width="1214" height="1" fill="#aacdd4"/>
<path d="M611 795h1v2h1v-2h1v4h1v2h3v-2h1v-5h2v1h1v2h1v-2h4v3h1v-4h1v4h1v1h1v-6h2v7h2v-4h4v1h1v-1h2v4h1v1h5v-2h1v-1h2v-5h2v2h4v-1h3v2h2v-2h2v1h2v1h3v-3h2v7h1v-5h2v3h2v-4h4v1h4v3h1v-4h2v6h1v-3h2v-3h2v3h2v1h1v-4h1v3h2v-3h2v2h2v-2h4v1h1v2h2v2h3v1h1v1h5v-1h2v-5h3v1h1v1h1v1h2v-4h2v1h1v2h1v-2h1v1h1v1h2v-3h1v1h2v5h1v-3h1v-1h1v1h1v3h2v-5h1v-1h1v3h2v-1h1v2h1v2h1v-6h3v2h1v3h2v-1h1v-2h2v3h1v-4h2v1h1v-2h2v4h2v-5h1v2h1v-1h1v2h1v-1h1v3h2v-2h1v2h2v-4h1v5h1v-2h1v1h1v-5h2v1h1v1h5v2h3v2h1v-4h2v-2h1v1h1v6h2v-4h1v4h2v-6h2v1h1v4h1v-3h2v-3h2v1h1v6h1v-4h1v1h1v-2h2v2h1v-2h2v1h2v-1h1v-1h2v-1h1v1h2v2h1v1h2v-2h1v5h2v-3h1v-2h2v4h2v-3h1v-1h1v1h4v4h1v-3h1v3h1v-4h2v3h1v-1h2v-2h1v-1h5v3h2v-1h1v2h2v1h2v-2h1v1h1v-5h2v1h2v-1h4v6h2v-3h2v-4h1v3h3v-3h1v3h2v-2h5v1h2v1h2v-1h2v4h1v-1h1v-2h2v-1h3v-2h2v2h1v4h1v-5h2v2h1v2h2v-3h2v1h3v3h2v-1h1v-5h2v3h2v-2h1v4h2v-2h2v2h2v-1h2v-1h2v-1h2v1h1v1h1v-1h1v-2h3v2h1v1h2v-4h1v5h2v-3h2v3h1v-4h6v4h1v-5h1v1h1v4h1v1h1v2h9v-1h1v-3h1v-2h4v1h2v1h2v2h1v-1h1v-2h1v-2h1v1h1v-1h3v1h1v-2h1v1h2v2h2v-2h2v1h1v-2h2v3h2v-2h4v4h1v-1h1v1h1v1h2v-5h1v6h1v-7h2v3h2v2h1v1h2v1h2v-6h1v3h2v-4h2v3h2v-2h1v2h1v-1h2v-1h2v3h1v-4h2v7h2v-2h2v1h1v2h1v-1h1v-3h1v-1h1v2h2v-2h1v1h4v-1h4v4h1v-6h1v4h2v-4h1v2h3v1h3v1h2v-4h1v3h2v-2h2v3h2v-2h3v-2h1v3h1v-1h1v-1h3v2h1v1h2v-2h2v3h1v2h9v-2h1v-2h3v-1h2v-1h1v1h1v1h4v-1h2v1h1v1h1v-3h2v2h2v2h1v-4h2v2h2v-3h2v1h1v2h2v-2h4v1h1v2h2v-1h2v-2h2v5h1v-4h1v1h3v-3h1v6h1v-3h3v1h2v-3h2v-1h4v1h1v-1h1v5h2v-5h1v1h2v2h2v-3h2v5h1v2h3v-2h1v-6h2v1h2v3h1v1h2v2h2v-4h2v1h1v1h1v-2h1v-1h2v2h4v-2h2v-1h2v3h2v-2h1v2h2v-3h1v3h3v3h1v-6h1v4h1v-4h1v5h1v-5h4v5h2v-1h1v-4h1v1h2v3h3v-1h5v1h1v-4h1v4h2v-3h2v-1h1v-1h1v4h2v-2h2v2h5v-1h1v-1h2v3h2v1h1v-6h2v4h4v-4h1v6h2v-5h2v2h1v1h2v2h2v-5h2v1h2v1h2v1h2v3h1v-5h2v3h2v-4h1v6h1v-2h2v-2h4v1h1v-3h2v4h1v1h1v1h2v-6h2v2h1v-2h2v3h2v-3h1v-1h1v5h1v2h2v-5h1v5h2v-7h1v2h2v-1h3v1h1v1h3v-2h1v2h3v2h2v-2h2v3h2v-4h1v3h1v-4h4v6h2v-2h2v-1h3v-2h5v-2h2v7h1v-3h2v-3h2v1h2v3h2v-3h2v2h1v-3h2v1h3v2h1v1h2v-4h1v1h3v2h2v-2h2v4h1v-1h1v-4h1v2h2v2h3v-4h4v-1h1v2h2v4h1v1h2v-1h1v2h15v-2h1v-4h1v2h2v1h1v2h1v-3h1v1h2v-4h4v3h2v1h2v1h1v-6h1v2h3v2h1v-1h2v-3h2v4h1v1h2v-5h1v5h2v-3h1v-1h3v1h1v2h1v-4h2v2h1v-1h1v-1h2v2h2v-2h2v4h2v-3h2v3h2v-2h1v-2h1v7h1v-6h1v1h1v1h2v-2h1v3h2v1h2v-4h2v2h4v-3h2v3h2v4h1v-4h1v2h1v-4h2v5h1v-3h1v-1h1v1h2v-2h1v3h1v-1h2v4h2v-5h1v2h2v1h2v-3h2v-1h3v3h2v1h1v2h1v1h3v-1h1v-3h2v-2h1v1h1v-1h1v2h1v-1h1v-1h2v3h1v-3h2v5h2v-5h1v2h1v3h2v-5h3v3h4v-4h1v3h1v-1h1v-3h1v3h1v3h1v2h4v-1h1v-7h1v6h1v-6h2v3h2v-3h2v2h6v1h2v-1h1v-2h1v1h3v5h2v-2h4v-3h2v6h1v-4h4v-1h1v1h1v4h1v1h9v-1h1v-1h2v-5h1v4h2v2h1v-2h1v-3h2v2h1v2h1v-1h1v-4h2v2h2v-2h3v4h1v-4h3v4h2v-5h1v6h1v2h5v-2h1v-3h1v2h2v-2h2v-2h3v1h2v-2h2v3h2v1h1v-3h1v1h2v1h2v1h1v-1h2v-1h2v-1h1v1h2v1h1v-2h1v3h1v-3h1v2h1v4h1v1h4v-2h1v-4h3v5h1v-5h2v1h2v-3h1v4h2v-1h1v1h2v1h2v-4h1v1h3v-1h5v3h2v-4h2v1h2v4h2v-1h3v-3h1v-1h1v3h1v-1h2v-1h1v5h1v-3h2v-1h4v3h1v-4h3v1h1v2h1v2h1v-2h1v-2h2v3h2v1h2v-2h1v-2h5v4h1v2h5v-2h1v-3h1v-1h2v-1h1v3h2v-4h2v4h1v-4h2v4h1v-4h1v2h1v2h2v-1h3v4h2v-3h2v-1h2v2h2v-4h1v5h2v-1h2v1h1v-2h2v-2h3v3h2v-5h2v6h1v-2h2v3h2v-4h2v-3h1v3h3v-2h2v2h1v3h1v2h4V802h-4v1h-2v3h-2v2h-2v-1h-1v2h-1v-3h-2v-4h-2v4h-2v-3h-1v2h-2v2h-2v-2h-2v2h-1v2h-2v-6h-1v3h-2v-1h-2v2h-1v-1h-2v-1h-2v1h-2v-1h-2v3h-1v-1h-4v2h-1v-1h-1v-4h-1v3h-2v-1h-1v1h-2v-4h-2v6h-1v-5h-2v1h-1v-3h-6v1h-1v6h-1v-1h-2v-4h-2v3h-1v-5h-2v5h-2v-2h-1v2h-1v1h-1v-5h-1v3h-1v2h-1v-2h-2v1h-1v1h-1v-2h-2v1h-2v-1h-2v2h-2v-3h-2v-1h-1v-1h-1v4h-1v1h-1v-2h-2v-2h-4v3h-2v-2h-2v2h-2v-3h-1v2h-2v-2h-1v3h-2v-1h-1v-4h-2v4h-2v-1h-1v-1h-3v2h-1v-2h-1v2h-2v-3h-1v1h-2v5h-1v-5h-1v-2h-5v6h-1v-3h-1v3h-1v-3h-1v1h-1v-1h-2v3h-1v-1h-2v2h-2v-7h-1v7h-2v-3h-2v-2h-1v1h-1v3h-2v-1h-2v1h-4v-1h-1v-3h-2v3h-2v1h-1v-5h-1v-1h-5v1h-1v3h-3v2h-2v-2h-1v-3h-1v2h-1v1h-2v2h-2v-3h-2v-1h-1v3h-1v-1h-1v3h-2v-5h-1v1h-1v4h-2v-2h-1v-2h-2v-3h-11v5h-1v1h-1v-3h-2v3h-2v-5h-1v4h-2v-1h-2v-2h-2v-2h-2v3h-2v-2h-1v5h-1v-2h-1v3h-2v-5h-2v3h-2v-1h-4v2h-2v1h-3v-2h-1v-5h-6v1h-1v4h-1v2h-1v-5h-1v3h-1v-5h-2v7h-2v-3h-1v1h-2v-2h-2v-2h-2v2h-2v2h-2v-5h-1v5h-1v-3h-1v5h-1v-7h-1v7h-1v-5h-1v4h-1v-2h-2v-3h-1v-1h-3v1h-1v4h-1v1h-2v-5h-1v3h-2v-1h-2v2h-1v1h-1v-5h-2v5h-1v-3h-2v1h-3v2h-1v-2h-4v-4h-1v5h-2v-3h-1v3h-1v-3h-1v3h-2v2h-2v-6h-1v6h-2v-5h-1v5h-2v-3h-2v-4h-2v4h-3v2h-1v-2h-1v-2h-1v4h-2v-4h-2v5h-2v-4h-2v2h-2v1h-2v-2h-3v-1h-1v3h-3v-1h-1v-2h-1v2h-2v1h-1v1h-2v-4h-1v2h-3v-2h-2v2h-3v-2h-3v4h-1v-7h-1v1h-2v5h-2v-1h-2v-3h-2v3h-3v-4h-1v5h-1v-2h-2v-1h-1v-3h-16v1h-1v1h-2v-2h-1v5h-2v-1h-1v2h-3v-5h-1v3h-2v-1h-1v3h-2v-3h-1v3h-1v-3h-1v1h-3v2h-1v-3h-1v1h-2v1h-1v-5h-2v3h-1v1h-3v1h-2v-2h-1v-2h-2v1h-2v1h-2v-2h-2v5h-2v-6h-1v3h-2v3h-2v-4h-1v4h-3v-2h-2v1h-2v-3h-2v3h-2v1h-2v-3h-2v-1h-2v1h-2v-1h-2v3h-2v-3h-1v5h-1v-3h-1v3h-2v-3h-1v-1h-2v2h-1v1h-2v-3h-1v1h-2v3h-1v-5h-2v-1h-1v3h-4v1h-2v-4h-1v4h-2v-5h-2v2h-1v-2h-1v6h-2v1h-1v-1h-2v-4h-2v1h-2v1h-1v1h-1v-3h-2v4h-2v-6h-1v3h-2v3h-2v1h-2v-3h-2v-4h-2v2h-1v1h-1v3h-1v-1h-2v-2h-2v2h-3v-1h-2v-1h-2v3h-1v-3h-2v3h-3v-3h-3v-2h-2v5h-4v-1h-1v-1h-1v-2h-2v1h-3v-1h-1v3h-2v1h-2v-1h-1v1h-3v-4h-2v1h-1v2h-3v2h-2v-1h-2v-6h-1v4h-1v-1h-2v2h-1v-2h-1v3h-2v-3h-1v2h-2v2h-3v-3h-2v-1h-4v-1h-3v3h-2v-1h-1v-2h-1v3h-2v-3h-2v5h-2v-4h-1v2h-2v2h-2v-7h-4v1h-1v4h-2v-3h-2v5h-2v-2h-1v-3h-2v3h-1v-2h-3v1h-4v3h-2v-3h-3v-1h-1v1h-3v-3h-1v4h-1v-4h-3v5h-2v-4h-2v3h-1v-1h-2v-3h-2v-1h-2v6h-1v-2h-2v2h-2v-4h-2v3h-1v-1h-2v-1h-2v-1h-1v4h-1v-3h-2v2h-2v-1h-2v3h-1v-3h-3v1h-2v-5h-1v1h-1v-1h-9v2h-1v3h-2v-2h-2v-1h-1v3h-1v1h-2v-3h-2v1h-1v2h-2v-3h-1v2h-4v2h-2v-3h-1v3h-2v-7h-1v6h-2v-6h-1v6h-2v-2h-1v-2h-2v5h-1v-4h-1v1h-2v3h-2v-3h-2v2h-2v-1h-1v-2h-2v1h-1v3h-1v-5h-1v-2h-1v2h-1v1h-2v1h-2v-2h-2v5h-1v-4h-2v2h-2v-1h-1v2h-3v-1h-1v-2h-1v3h-2v-2h-1v-3h-2v1h-3v4h-2v-2h-2v-3h-1v2h-1v-3h-2v4h-1v2h-1v1h-1v-1h-2v-2h-2v1h-2v-4h-2v4h-1v-4h-1v1h-3v3h-3v1h-1v1h-1v-2h-2v-2h-1v4h-1v-7h-1v6h-1v-2h-1v2h-2v-2h-4v-2h-2v3h-1v-4h-1v-1h-9v1h-1v4h-2v1h-1v-4h-1v4h-1v-3h-2v-1h-3v5h-1v-1h-4v-2h-3v2h-1v-4h-1v1h-2v-1h-1v3h-2v-2h-1v2h-2v2h-1v-1h-2v-2h-2v2h-2v-1h-2v-1h-1v-2h-2v4h-3v1h-2v-3h-1v-2h-4v5h-2v-5h-1v2h-1v-1h-2v3h-3v-4h-1v-1h-2v2h-2v-1h-2v4h-2v-4h-2v1h-2v3h-2v-3h-1v-1h-2v1h-2v2h-1v2h-1v-5h-2v3h-1v1h-2v-4h-2v3h-2v-1h-2v-3h-2v1h-3v2h-1v-3h-2v6h-2v-6h-1v2h-3v4h-2v-4h-2v1h-1v1h-2v-2h-3v-1h-1v2h-2v3h-2v-1h-2v-2h-1v2h-1v-3h-2v-3h-2v3h-1v-2h-2v2h-1v2h-2v-2h-1v2h-2v-2h-1v3h-2v-1h-3v-3h-2v3h-1v-1h-2v2h-1v-3h-1v-3h-1v4h-3v-1h-2v-1h-1v4h-1v-2h-2v-2h-2v4h-1v-6h-2v6h-1v-4h-1v3h-2v-5h-1v5h-1v-1h-2v-3h-2v4h-2v2h-1v-2h-1v-3h-2v4h-1v-2h-2v-2h-1v-2h-1v6h-1v-4h-1v1h-2v2h-1v-3h-1v2h-2v2h-1v-4h-2v2h-2v1h-3v-5h-1v4h-1v-1h-1v1h-1v-1h-2v2h-1v1h-1v-1h-2v-4h-1v3h-1v1h-1v1h-2v-1h-2v-1h-1v-2h-1v1h-2v-1h-2v1h-2v2h-1v-2h-2v1h-1v-1h-2v2h-1v2h-2v-3h-2v-4h-1v6h-1v-1h-1v-1h-2v-4h-1v1h-1v-1h-6v3h-2v-3h-1v6h-2v-1h-1v-3h-2v1h-2v1h-2v2h-2v-2h-3v-2h-1v2h-2v1h-2v-1h-2v-4h-1v3h-2v-2h-1v2h-2v1h-2v-1h-1v2h-3v-1h-2v2h-2v-6h-1v7h-2v-1h-1v-1h-2v-3h-2v1h-4v-1h-1v3h-2v1h-2v-3h-2v1h-2v-1h-1v-3h-8v4h-2v2h-1v-6h-2v7h-2v-4h-4v2h-1v2h-1v-4h-2v1h-2v1h-2v-3h-1v-1h-1v4h-2v-5h-5v3h-1v2h-1v1h-1Z" fill="#aacdd4" shape-rendering="crispEdges"/>
<path d="M611 817h1v2h1v-2h1v4h1v2h3v-2h1v-5h2v1h1v2h1v-2h4v3h1v-4h1v4h1v1h1v-6h2v7h2v-4h4v1h1v-1h2v4h1v1h5v-2h1v-1h2v-5h2v2h4v-1h3v2h2v-2h2v1h2v1h3v-3h2v7h1v-5h2v3h2v-4h4v1h4v3h1v-4h2v6h1v-3h2v-3h2v3h2v1h1v-4h1v3h2v-3h2v2h2v-2h4v1h1v2h2v2h3v1h1v1h5v-1h2v-5h3v1h1v1h1v1h2v-4h2v1h1v2h1v-2h1v1h1v1h2v-3h1v1h2v5h1v-3h1v-1h1v1h1v3h2v-5h1v-1h1v3h2v-1h1v2h1v2h1v-6h3v2h1v3h2v-1h1v-2h2v3h1v-4h2v1h1v-2h2v4h2v-5h1v2h1v-1h1v2h1v-1h1v3h2v-2h1v2h2v-4h1v5h1v-2h1v1h1v-5h2v1h1v1h5v2h3v2h1v-4h2v-2h1v1h1v6h2v-4h1v4h2v-6h2v1h1v4h1v-3h2v-3h2v1h1v6h1v-4h1v1h1v-2h2v2h1v-2h2v1h2v-1h1v-1h2v-1h1v1h2v2h1v1h2v-2h1v5h2v-3h1v-2h2v4h2v-3h1v-1h1v1h4v4h1v-3h1v3h1v-4h2v3h1v-1h2v-2h1v-1h5v3h2v-1h1v2h2v1h2v-2h1v1h1v-5h2v1h2v-1h4v6h2v-3h2v-4h1v3h3v-3h1v3h2v-2h5v1h2v1h2v-1h2v4h1v-1h1v-2h2v-1h3v-2h2v2h1v4h1v-5h2v2h1v2h2v-3h2v1h3v3h2v-1h1v-5h2v3h2v-2h1v4h2v-2h2v2h2v-1h2v-1h2v-1h2v1h1v1h1v-1h1v-2h3v2h1v1h2v-4h1v5h2v-3h2v3h1v-4h6v4h1v-5h1v1h1v4h1v1h1v2h9v-1h1v-3h1v-2h4v1h2v1h2v2h1v-1h1v-2h1v-2h1v1h1v-1h3v1h1v-2h1v1h2v2h2v-2h2v1h1v-2h2v3h2v-2h4v4h1v-1h1v1h1v1h2v-5h1v6h1v-7h2v3h2v2h1v1h2v1h2v-6h1v3h2v-4h2v3h2v-2h1v2h1v-1h2v-1h2v3h1v-4h2v7h2v-2h2v1h1v2h1v-1h1v-3h1v-1h1v2h2v-2h1v1h4v-1h4v4h1v-6h1v4h2v-4h1v2h3v1h3v1h2v-4h1v3h2v-2h2v3h2v-2h3v-2h1v3h1v-1h1v-1h3v2h1v1h2v-2h2v3h1v2h9v-2h1v-2h3v-1h2v-1h1v1h1v1h4v-1h2v1h1v1h1v-3h2v2h2v2h1v-4h2v2h2v-3h2v1h1v2h2v-2h4v1h1v2h2v-1h2v-2h2v5h1v-4h1v1h3v-3h1v6h1v-3h3v1h2v-3h2v-1h4v1h1v-1h1v5h2v-5h1v1h2v2h2v-3h2v5h1v2h3v-2h1v-6h2v1h2v3h1v1h2v2h2v-4h2v1h1v1h1v-2h1v-1h2v2h4v-2h2v-1h2v3h2v-2h1v2h2v-3h1v3h3v3h1v-6h1v4h1v-4h1v5h1v-5h4v5h2v-1h1v-4h1v1h2v3h3v-1h5v1h1v-4h1v4h2v-3h2v-1h1v-1h1v4h2v-2h2v2h5v-1h1v-1h2v3h2v1h1v-6h2v4h4v-4h1v6h2v-5h2v2h1v1h2v2h2v-5h2v1h2v1h2v1h2v3h1v-5h2v3h2v-4h1v6h1v-2h2v-2h4v1h1v-3h2v4h1v1h1v1h2v-6h2v2h1v-2h2v3h2v-3h1v-1h1v5h1v2h2v-5h1v5h2v-7h1v2h2v-1h3v1h1v1h3v-2h1v2h3v2h2v-2h2v3h2v-4h1v3h1v-4h4v6h2v-2h2v-1h3v-2h5v-2h2v7h1v-3h2v-3h2v1h2v3h2v-3h2v2h1v-3h2v1h3v2h1v1h2v-4h1v1h3v2h2v-2h2v4h1v-1h1v-4h1v2h2v2h3v-4h4v-1h1v2h2v4h1v1h2v-1h1v2h15v-2h1v-4h1v2h2v1h1v2h1v-3h1v1h2v-4h4v3h2v1h2v1h1v-6h1v2h3v2h1v-1h2v-3h2v4h1v1h2v-5h1v5h2v-3h1v-1h3v1h1v2h1v-4h2v2h1v-1h1v-1h2v2h2v-2h2v4h2v-3h2v3h2v-2h1v-2h1v7h1v-6h1v1h1v1h2v-2h1v3h2v1h2v-4h2v2h4v-3h2v3h2v4h1v-4h1v2h1v-4h2v5h1v-3h1v-1h1v1h2v-2h1v3h1v-1h2v4h2v-5h1v2h2v1h2v-3h2v-1h3v3h2v1h1v2h1v1h3v-1h1v-3h2v-2h1v1h1v-1h1v2h1v-1h1v-1h2v3h1v-3h2v5h2v-5h1v2h1v3h2v-5h3v3h4v-4h1v3h1v-1h1v-3h1v3h1v3h1v2h4v-1h1v-7h1v6h1v-6h2v3h2v-3h2v2h6v1h2v-1h1v-2h1v1h3v5h2v-2h4v-3h2v6h1v-4h4v-1h1v1h1v4h1v1h9v-1h1v-1h2v-5h1v4h2v2h1v-2h1v-3h2v2h1v2h1v-1h1v-4h2v2h2v-2h3v4h1v-4h3v4h2v-5h1v6h1v2h5v-2h1v-3h1v2h2v-2h2v-2h3v1h2v-2h2v3h2v1h1v-3h1v1h2v1h2v1h1v-1h2v-1h2v-1h1v1h2v1h1v-2h1v3h1v-3h1v2h1v4h1v1h4v-2h1v-4h3v5h1v-5h2v1h2v-3h1v4h2v-1h1v1h2v1h2v-4h1v1h3v-1h5v3h2v-4h2v1h2v4h2v-1h3v-3h1v-1h1v3h1v-1h2v-1h1v5h1v-3h2v-1h4v3h1v-4h3v1h1v2h1v2h1v-2h1v-2h2v3h2v1h2v-2h1v-2h5v4h1v2h5v-2h1v-3h1v-1h2v-1h1v3h2v-4h2v4h1v-4h2v4h1v-4h1v2h1v2h2v-1h3v4h2v-3h2v-1h2v2h2v-4h1v5h2v-1h2v1h1v-2h2v-2h3v3h2v-5h2v6h1v-2h2v3h2v-4h2v-3h1v3h3v-2h2v2h1v3h1v2h4V824h-4v1h-2v3h-2v2h-2v-1h-1v2h-1v-3h-2v-4h-2v4h-2v-3h-1v2h-2v2h-2v-2h-2v2h-1v2h-2v-6h-1v3h-2v-1h-2v2h-1v-1h-2v-1h-2v1h-2v-1h-2v3h-1v-1h-4v2h-1v-1h-1v-4h-1v3h-2v-1h-1v1h-2v-4h-2v6h-1v-5h-2v1h-1v-3h-6v1h-1v6h-1v-1h-2v-4h-2v3h-1v-5h-2v5h-2v-2h-1v2h-1v1h-1v-5h-1v3h-1v2h-1v-2h-2v1h-1v1h-1v-2h-2v1h-2v-1h-2v2h-2v-3h-2v-1h-1v-1h-1v4h-1v1h-1v-2h-2v-2h-4v3h-2v-2h-2v2h-2v-3h-1v2h-2v-2h-1v3h-2v-1h-1v-4h-2v4h-2v-1h-1v-1h-3v2h-1v-2h-1v2h-2v-3h-1v1h-2v5h-1v-5h-1v-2h-5v6h-1v-3h-1v3h-1v-3h-1v1h-1v-1h-2v3h-1v-1h-2v2h-2v-7h-1v7h-2v-3h-2v-2h-1v1h-1v3h-2v-1h-2v1h-4v-1h-1v-3h-2v3h-2v1h-1v-5h-1v-1h-5v1h-1v3h-3v2h-2v-2h-1v-3h-1v2h-1v1h-2v2h-2v-3h-2v-1h-1v3h-1v-1h-1v3h-2v-5h-1v1h-1v4h-2v-2h-1v-2h-2v-3h-11v5h-1v1h-1v-3h-2v3h-2v-5h-1v4h-2v-1h-2v-2h-2v-2h-2v3h-2v-2h-1v5h-1v-2h-1v3h-2v-5h-2v3h-2v-1h-4v2h-2v1h-3v-2h-1v-5h-6v1h-1v4h-1v2h-1v-5h-1v3h-1v-5h-2v7h-2v-3h-1v1h-2v-2h-2v-2h-2v2h-2v2h-2v-5h-1v5h-1v-3h-1v5h-1v-7h-1v7h-1v-5h-1v4h-1v-2h-2v-3h-1v-1h-3v1h-1v4h-1v1h-2v-5h-1v3h-2v-1h-2v2h-1v1h-1v-5h-2v5h-1v-3h-2v1h-3v2h-1v-2h-4v-4h-1v5h-2v-3h-1v3h-1v-3h-1v3h-2v2h-2v-6h-1v6h-2v-5h-1v5h-2v-3h-2v-4h-2v4h-3v2h-1v-2h-1v-2h-1v4h-2v-4h-2v5h-2v-4h-2v2h-2v1h-2v-2h-3v-1h-1v3h-3v-1h-1v-2h-1v2h-2v1h-1v1h-2v-4h-1v2h-3v-2h-2v2h-3v-2h-3v4h-1v-7h-1v1h-2v5h-2v-1h-2v-3h-2v3h-3v-4h-1v5h-1v-2h-2v-1h-1v-3h-16v1h-1v1h-2v-2h-1v5h-2v-1h-1v2h-3v-5h-1v3h-2v-1h-1v3h-2v-3h-1v3h-1v-3h-1v1h-3v2h-1v-3h-1v1h-2v1h-1v-5h-2v3h-1v1h-3v1h-2v-2h-1v-2h-2v1h-2v1h-2v-2h-2v5h-2v-6h-1v3h-2v3h-2v-4h-1v4h-3v-2h-2v1h-2v-3h-2v3h-2v1h-2v-3h-2v-1h-2v1h-2v-1h-2v3h-2v-3h-1v5h-1v-3h-1v3h-2v-3h-1v-1h-2v2h-1v1h-2v-3h-1v1h-2v3h-1v-5h-2v-1h-1v3h-4v1h-2v-4h-1v4h-2v-5h-2v2h-1v-2h-1v6h-2v1h-1v-1h-2v-4h-2v1h-2v1h-1v1h-1v-3h-2v4h-2v-6h-1v3h-2v3h-2v1h-2v-3h-2v-4h-2v2h-1v1h-1v3h-1v-1h-2v-2h-2v2h-3v-1h-2v-1h-2v3h-1v-3h-2v3h-3v-3h-3v-2h-2v5h-4v-1h-1v-1h-1v-2h-2v1h-3v-1h-1v3h-2v1h-2v-1h-1v1h-3v-4h-2v1h-1v2h-3v2h-2v-1h-2v-6h-1v4h-1v-1h-2v2h-1v-2h-1v3h-2v-3h-1v2h-2v2h-3v-3h-2v-1h-4v-1h-3v3h-2v-1h-1v-2h-1v3h-2v-3h-2v5h-2v-4h-1v2h-2v2h-2v-7h-4v1h-1v4h-2v-3h-2v5h-2v-2h-1v-3h-2v3h-1v-2h-3v1h-4v3h-2v-3h-3v-1h-1v1h-3v-3h-1v4h-1v-4h-3v5h-2v-4h-2v3h-1v-1h-2v-3h-2v-1h-2v6h-1v-2h-2v2h-2v-4h-2v3h-1v-1h-2v-1h-2v-1h-1v4h-1v-3h-2v2h-2v-1h-2v3h-1v-3h-3v1h-2v-5h-1v1h-1v-1h-9v2h-1v3h-2v-2h-2v-1h-1v3h-1v1h-2v-3h-2v1h-1v2h-2v-3h-1v2h-4v2h-2v-3h-1v3h-2v-7h-1v6h-2v-6h-1v6h-2v-2h-1v-2h-2v5h-1v-4h-1v1h-2v3h-2v-3h-2v2h-2v-1h-1v-2h-2v1h-1v3h-1v-5h-1v-2h-1v2h-1v1h-2v1h-2v-2h-2v5h-1v-4h-2v2h-2v-1h-1v2h-3v-1h-1v-2h-1v3h-2v-2h-1v-3h-2v1h-3v4h-2v-2h-2v-3h-1v2h-1v-3h-2v4h-1v2h-1v1h-1v-1h-2v-2h-2v1h-2v-4h-2v4h-1v-4h-1v1h-3v3h-3v1h-1v1h-1v-2h-2v-2h-1v4h-1v-7h-1v6h-1v-2h-1v2h-2v-2h-4v-2h-2v3h-1v-4h-1v-1h-9v1h-1v4h-2v1h-1v-4h-1v4h-1v-3h-2v-1h-3v5h-1v-1h-4v-2h-3v2h-1v-4h-1v1h-2v-1h-1v3h-2v-2h-1v2h-2v2h-1v-1h-2v-2h-2v2h-2v-1h-2v-1h-1v-2h-2v4h-3v1h-2v-3h-1v-2h-4v5h-2v-5h-1v2h-1v-1h-2v3h-3v-4h-1v-1h-2v2h-2v-1h-2v4h-2v-4h-2v1h-2v3h-2v-3h-1v-1h-2v1h-2v2h-1v2h-1v-5h-2v3h-1v1h-2v-4h-2v3h-2v-1h-2v-3h-2v1h-3v2h-1v-3h-2v6h-2v-6h-1v2h-3v4h-2v-4h-2v1h-1v1h-2v-2h-3v-1h-1v2h-2v3h-2v-1h-2v-2h-1v2h-1v-3h-2v-3h-2v3h-1v-2h-2v2h-1v2h-2v-2h-1v2h-2v-2h-1v3h-2v-1h-3v-3h-2v3h-1v-1h-2v2h-1v-3h-1v-3h-1v4h-3v-1h-2v-1h-1v4h-1v-2h-2v-2h-2v4h-1v-6h-2v6h-1v-4h-1v3h-2v-5h-1v5h-1v-1h-2v-3h-2v4h-2v2h-1v-2h-1v-3h-2v4h-1v-2h-2v-2h-1v-2h-1v6h-1v-4h-1v1h-2v2h-1v-3h-1v2h-2v2h-1v-4h-2v2h-2v1h-3v-5h-1v4h-1v-1h-1v1h-1v-1h-2v2h-1v1h-1v-1h-2v-4h-1v3h-1v1h-1v1h-2v-1h-2v-1h-1v-2h-1v1h-2v-1h-2v1h-2v2h-1v-2h-2v1h-1v-1h-2v2h-1v2h-2v-3h-2v-4h-1v6h-1v-1h-1v-1h-2v-4h-1v1h-1v-1h-6v3h-2v-3h-1v6h-2v-1h-1v-3h-2v1h-2v1h-2v2h-2v-2h-3v-2h-1v2h-2v1h-2v-1h-2v-4h-1v3h-2v-2h-1v2h-2v1h-2v-1h-1v2h-3v-1h-2v2h-2v-6h-1v7h-2v-1h-1v-1h-2v-3h-2v1h-4v-1h-1v3h-2v1h-2v-3h-2v1h-2v-1h-1v-3h-8v4h-2v2h-1v-6h-2v7h-2v-4h-4v2h-1v2h-1v-4h-2v1h-2v1h-2v-3h-1v-1h-1v4h-2v-5h-5v3h-1v2h-1v1h-1Z" fill="#aacdd4" shape-rendering="crispEdges"/>
<rect x="610" y="812" width="1214" height="1" fill="#4a5f66"/>
<rect x="610" y="834" width="1214" height="1.5" fill="#2a2a2a"/>
<text x="612.5" y="784" font-size="12" fill="#ffffff" textLength="24" lengthAdjust="spacingAndGlyphs">Intro</text>
<text x="1788.5" y="787" font-size="16.5" font-style="italic" fill="#ffffff" textLength="13.5" lengthAdjust="spacingAndGlyphs" stroke="#303030" stroke-width="1.8" stroke-linejoin="round" paint-order="stroke" style='font-family:"Liberation Serif", serif'>fx</text>
<rect x="1807.9" y="774.4" width="14.2" height="3.7" fill="#2b2b2b" rx="1"/>
<rect x="1808.5" y="775" width="13" height="2.5" fill="#ffffff" rx="0.5"/>
<rect x="1807.9" y="779.4" width="14.2" height="3.7" fill="#2b2b2b" rx="1"/>
<rect x="1808.5" y="780" width="13" height="2.5" fill="#ffffff" rx="0.5"/>
<rect x="1807.9" y="784.4" width="14.2" height="3.7" fill="#2b2b2b" rx="1"/>
<rect x="1808.5" y="785" width="13" height="2.5" fill="#ffffff" rx="0.5"/>
<polygon points="609,792 614,792 609,796" fill="#0000ff"/>
<polygon points="1818,792 1825,792 1825,797" fill="#0000ff"/>
<polygon points="1209.5,792 1222.5,792 1220.5,795 1211.5,795" fill="#3a3a3a"/>
<rect x="1211.5" y="792" width="9" height="2" fill="#0000ff"/>
<polygon points="610.5,828 616,833.5 610.5,833.5" fill="#ffffff" stroke="#000000" stroke-width="0.8"/>
<rect x="1816" y="837" width="75" height="23" fill="#60408a"/>
<rect x="1816" y="860" width="75" height="43" fill="#2a2a2a"/>
<rect x="1816" y="860.5" width="74" height="41.5" fill="#63438b"/>
<defs><pattern id="hatch2" width="2" height="2" patternUnits="userSpaceOnUse"><rect width="2" height="2" fill="#63438b"/><rect width="1" height="1" fill="#8a7a9a"/><rect x="1" y="1" width="1" height="1" fill="#8a7a9a"/></pattern></defs>
<rect x="1816" y="861" width="8" height="41" fill="url(#hatch2)"/>
<rect x="1816" y="869" width="74" height="1" fill="#b3a3cc"/>
<rect x="1816" y="880" width="74" height="1" fill="#4a4458"/>
<rect x="1816" y="891" width="74" height="1" fill="#b3a3cc"/>
<path d="M1816.5 902 C1817 885 1818 870 1823.5 860" fill="none" stroke="#0000ff" stroke-width="1.3"/>
<text x="1818.5" y="852" font-size="12" fill="#ffffff" textLength="31" lengthAdjust="spacingAndGlyphs">Ove...</text>
<text x="1855.5" y="855" font-size="16.5" font-style="italic" fill="#ffffff" textLength="13.5" lengthAdjust="spacingAndGlyphs" stroke="#303030" stroke-width="1.8" stroke-linejoin="round" paint-order="stroke" style='font-family:"Liberation Serif", serif'>fx</text>
<rect x="1874.9" y="842.4" width="14.2" height="3.7" fill="#2b2b2b" rx="1"/>
<rect x="1875.5" y="843" width="13" height="2.5" fill="#ffffff" rx="0.5"/>
<rect x="1874.9" y="847.4" width="14.2" height="3.7" fill="#2b2b2b" rx="1"/>
<rect x="1875.5" y="848" width="13" height="2.5" fill="#ffffff" rx="0.5"/>
<rect x="1874.9" y="852.4" width="14.2" height="3.7" fill="#2b2b2b" rx="1"/>
<rect x="1875.5" y="853" width="13" height="2.5" fill="#ffffff" rx="0.5"/>
<polygon points="1851,860 1864,860 1862,863 1853,863" fill="#3a3a3a"/>
<rect x="1853" y="860" width="9" height="2" fill="#0000ff"/>
<polygon points="1886,860 1891,860 1891,864.5" fill="#ff8c00"/>
<polygon points="1816.5,896 1822,901.5 1816.5,901.5" fill="#ffffff" stroke="#000000" stroke-width="0.8"/>
<rect x="6" y="637" width="1" height="62" fill="#262226"/>
<rect x="6" y="701" width="1" height="66" fill="#22242c"/>
<line x1="192.5" y1="641" x2="192.5" y2="698" stroke="#b09098" stroke-width="1" stroke-dasharray="1 3" opacity="0.6"/>
<line x1="192.5" y1="705" x2="192.5" y2="766" stroke="#8088f8" stroke-width="1" stroke-dasharray="1 3" opacity="0.7"/>
<line x1="377.5" y1="641" x2="377.5" y2="698" stroke="#b09098" stroke-width="1" stroke-dasharray="1 3" opacity="0.6"/>
<line x1="377.5" y1="705" x2="377.5" y2="766" stroke="#8088f8" stroke-width="1" stroke-dasharray="1 3" opacity="0.7"/>
<line x1="563.5" y1="641" x2="563.5" y2="698" stroke="#b09098" stroke-width="1" stroke-dasharray="1 3" opacity="0.6"/>
<line x1="563.5" y1="705" x2="563.5" y2="766" stroke="#8088f8" stroke-width="1" stroke-dasharray="1 3" opacity="0.7"/>
<line x1="749.5" y1="769" x2="749.5" y2="834" stroke="#7ffcff" stroke-width="1" stroke-dasharray="1 3" opacity="0.8"/>
<line x1="935.5" y1="769" x2="935.5" y2="834" stroke="#7ffcff" stroke-width="1" stroke-dasharray="1 3" opacity="0.8"/>
<line x1="1121.5" y1="769" x2="1121.5" y2="834" stroke="#7ffcff" stroke-width="1" stroke-dasharray="1 3" opacity="0.8"/>
<line x1="1307.5" y1="769" x2="1307.5" y2="834" stroke="#7ffcff" stroke-width="1" stroke-dasharray="1 3" opacity="0.8"/>
<line x1="1492.5" y1="769" x2="1492.5" y2="834" stroke="#7ffcff" stroke-width="1" stroke-dasharray="1 3" opacity="0.8"/>
<line x1="1678.5" y1="769" x2="1678.5" y2="834" stroke="#7ffcff" stroke-width="1" stroke-dasharray="1 3" opacity="0.8"/>
<line x1="1864.5" y1="841" x2="1864.5" y2="902" stroke="#a890ff" stroke-width="1" stroke-dasharray="1 3" opacity="0.8"/>
<rect x="1253.6" y="636" width="1.3" height="368" fill="#000000"/>
<path d="M1249.2 622.3h10.8v10.2l-5.4 4.6-5.4-4.6z" fill="#ffffff" stroke="#2a2a2a" stroke-width="0.8"/>
<rect x="1251.7" y="625.3" width="1.5" height="3.4" fill="#000000"/>
<rect x="1256.2" y="625.3" width="1.5" height="3.4" fill="#000000"/></svg></div>
<div class="panel" id="audition" style="left:1146px;top:0px;width:1042px;height:528px;background:#161616;z-index:5;"><svg width="1042" height="528" viewBox="1146 0 1042 528"><rect x="1146" y="45" width="1042" height="483" fill="#161616"/>
<rect x="1146" y="0" width="1042" height="45" fill="#ffffff"/>
<rect x="1154" y="1" width="16" height="15.5" fill="#00e4bb"/>
<rect x="1155" y="2" width="14" height="13.5" fill="#06251f"/>
<text x="1156.2" y="12.8" font-size="9.5" fill="#00e4bb" textLength="11.5" lengthAdjust="spacingAndGlyphs">Au</text>
<text x="1175" y="14" font-size="12" fill="#000000" textLength="84" lengthAdjust="spacingAndGlyphs">Adobe Audition</text>
<rect x="2069" y="9" width="10" height="1" fill="#000000"/>
<rect x="2114.5" y="4.5" width="9" height="9" fill="none" stroke="#000000" stroke-width="1"/>
<path d="M2160 4l10 10M2170 4l-10 10" fill="none" stroke="#000000" stroke-width="1.1"/>
<text x="1153.3" y="39.3" font-size="12" fill="#000000" textLength="17.7" lengthAdjust="spacingAndGlyphs">File</text>
<text x="1185.2" y="39.3" font-size="12" fill="#000000" textLength="19.8" lengthAdjust="spacingAndGlyphs">Edit</text>
<text x="1219.6" y="39.3" font-size="12" fill="#000000" textLength="53.4" lengthAdjust="spacingAndGlyphs">Multitrack</text>
<text x="1287.2" y="39.3" font-size="12" fill="#000000" textLength="20.7" lengthAdjust="spacingAndGlyphs">Clip</text>
<text x="1322.1" y="39.3" font-size="12" fill="#000000" textLength="34.9" lengthAdjust="spacingAndGlyphs">Effects</text>
<text x="1371" y="39.3" font-size="12" fill="#000000" textLength="47" lengthAdjust="spacingAndGlyphs">Favorites</text>
<text x="1432" y="39.3" font-size="12" fill="#000000" textLength="25" lengthAdjust="spacingAndGlyphs">View</text>
<text x="1471" y="39.3" font-size="12" fill="#000000" textLength="44" lengthAdjust="spacingAndGlyphs">Window</text>
<text x="1529.3" y="39.3" font-size="12" fill="#000000" textLength="24.5" lengthAdjust="spacingAndGlyphs">Help</text>
<rect x="1146" y="45" width="1042" height="26" fill="#222222"/>
<rect x="1146" y="45" width="1042" height="1" fill="#0e0e0e"/>
<rect x="1146" y="70" width="1042" height="4" fill="#161616"/>
<rect x="1151" y="49" width="3" height="1" fill="#3c3c3c"/>
<rect x="1151" y="51.6" width="3" height="1" fill="#3c3c3c"/>
<rect x="1151" y="54.2" width="3" height="1" fill="#3c3c3c"/>
<rect x="1151" y="56.8" width="3" height="1" fill="#3c3c3c"/>
<rect x="1151" y="59.4" width="3" height="1" fill="#3c3c3c"/>
<rect x="1151" y="62" width="3" height="1" fill="#3c3c3c"/>
<rect x="1151" y="64.6" width="3" height="1" fill="#3c3c3c"/>
<rect x="1158.5" y="48.5" width="182" height="19" fill="#1f1f1f" stroke="#303030" stroke-width="1" rx="3"/>
<rect x="1158.5" y="48.5" width="90" height="19" fill="#151515" stroke="#303030" stroke-width="1" rx="3"/>
<rect x="1168" y="52.5" width="15.5" height="10" fill="none" stroke="#2d8ceb" stroke-width="1.2"/>
<path d="M1169 57.5h14M1171.5 55v5M1174 54.3v6.4M1176.5 55.5v4M1179 54.3v6.4M1181.2 56v3" fill="none" stroke="#2d8ceb" stroke-width="1.1"/>
<text x="1191.5" y="62.3" font-size="11.5" fill="#2d8ceb" textLength="50.5" lengthAdjust="spacingAndGlyphs" font-weight="bold">Waveform</text>
<rect x="1260.3" y="52.5" width="15.5" height="10" fill="none" stroke="#8a8a8a" stroke-width="1.2"/>
<rect x="1261" y="53" width="3.2" height="3.5" fill="#7a7a7a"/>
<rect x="1265.2" y="53" width="10" height="3.5" fill="#7a7a7a"/>
<rect x="1261" y="58" width="9" height="4" fill="#7a7a7a"/>
<rect x="1271.2" y="58" width="4" height="4" fill="#7a7a7a"/>
<text x="1283.5" y="62.3" font-size="11.5" fill="#8c8c8c" textLength="50" lengthAdjust="spacingAndGlyphs" font-weight="bold">Multitrack</text>
<rect x="1364" y="46" width="1" height="24" fill="#2e2e2e"/>
<rect x="1389.5" y="51.5" width="15.5" height="10.5" fill="#4e4e4e" stroke="#b4b4b4" stroke-width="1"/>
<path d="M1390 61.5v-3l1.3-1.5 1 1.5 1.2-3.5 1.2 2.5 1.2-1.5 1.3 2 1.2-5.5 1.3 4 1.2-2.5 1.3 2 1.2-3.5 1.3 3v6z" fill="#b0b0b0"/>
<rect x="1415.5" y="51.5" width="15.5" height="10.5" fill="#181818" stroke="#b4b4b4" stroke-width="1.2"/>
<path d="M1416.5 57.5h2.5l1.5-1.5 1.5 2.5 1.6-4.5 1.6 4.5 1.4-2.5 1.4 1.5h2" fill="none" stroke="#c0c0c0" stroke-width="1.1" stroke-linejoin="round"/>
<rect x="1442.5" y="47" width="1.5" height="22" fill="#343434"/>
<polygon points="1453,49.5 1453,60.2 1459.8,56" fill="#4e4e4e"/>
<path d="M1465.5 54v8M1461.5 58h8" fill="none" stroke="#4e4e4e" stroke-width="1.1"/>
<polygon points="1465.5,52.5 1463.8,54.8 1467.2,54.8" fill="#4e4e4e"/>
<polygon points="1465.5,63.5 1463.8,61.2 1467.2,61.2" fill="#4e4e4e"/>
<polygon points="1460,58 1462.3,56.3 1462.3,59.7" fill="#4e4e4e"/>
<polygon points="1471,58 1468.7,56.3 1468.7,59.7" fill="#4e4e4e"/>
<path d="M1482 55.5l5-4.5 10 10-5 4.5z" fill="#4e4e4e"/>
<path d="M1486.5 55.5l5.5 5.5" fill="none" stroke="#1d1d1d" stroke-width="1"/>
<polygon points="1499,63 1499,66 1496,66" fill="#4e4e4e"/>
<path d="M1507 50v14M1525.2 50v14" fill="none" stroke="#4e4e4e" stroke-width="2"/>
<path d="M1510.5 56.7h11.5" fill="none" stroke="#4e4e4e" stroke-width="1.5"/>
<polygon points="1509.3,56.7 1513,53.6 1513,59.8" fill="#4e4e4e"/>
<polygon points="1523.2,56.7 1519.5,53.6 1519.5,59.8" fill="#4e4e4e"/>
<rect x="1531.8" y="47" width="22.2" height="21" fill="#151515" stroke="#303030" stroke-width="1" rx="3.5"/>
<path d="M1542.6 51.8v10.6M1539 50.3c2.2 0 3.6 0.5 3.6 1.7c0-1.2 1.4-1.7 3.6-1.7M1539 63.9c2.2 0 3.6-0.5 3.6-1.7c0 1.2 1.4 1.7 3.6 1.7" fill="none" stroke="#2d8ceb" stroke-width="1.3"/>
<rect x="1564.5" y="50.6" width="13.4" height="12.2" fill="none" stroke="#505050" stroke-width="1.1" stroke-dasharray="3.1 1.9" stroke-dashoffset="1.5"/>
<ellipse cx="1597" cy="54.8" rx="7.6" ry="4.2" fill="none" stroke="#4e4e4e" stroke-width="1.1" transform="rotate(-12 1597 54.8)"/>
<path d="M1591.2 58c-2 0.8-1.6 2.6 0.6 2.6c1.6 0.2 2 2 0.4 3.4" fill="none" stroke="#4e4e4e" stroke-width="1"/>
<path d="M1631 50.3l-9.6 9.6 2.4 2.4 8-11z" fill="#4e4e4e"/>
<path d="M1621.2 60.6c-2.6 0.2-3.4 2.2-6 5c3.8 0.8 7.4 0 8.4-2.8z" fill="#4e4e4e"/>
<path d="M1643.5 61.6l11.2-11.2 4.2 4.2-11.2 11.2z" fill="#4e4e4e"/>
<path d="M1647.2 57.9l4.2 4.2M1651 54.1l4.2 4.2" fill="none" stroke="#222222" stroke-width="0.9"/>
<path d="M1648.6 58.6l2.6 2.6M1650.2 57l2.6 2.6M1651.8 55.4l2.6 2.6" fill="none" stroke="#222222" stroke-width="0.6" stroke-dasharray="0.8 0.9"/>
<path d="M1643.2 58.4c-2-3.6 0.6-8 5.6-8" fill="none" stroke="#4e4e4e" stroke-width="1.1" stroke-dasharray="1 1.6"/>
<rect x="1699" y="46" width="1" height="24" fill="#2a2a2a"/>
<text x="1723" y="62.3" font-size="11.5" fill="#2d8ceb" textLength="35" lengthAdjust="spacingAndGlyphs" font-weight="bold">Default</text>
<rect x="1770.5" y="53.5" width="9" height="1.2" fill="#2d8ceb"/>
<rect x="1770.5" y="56.9" width="9" height="1.2" fill="#2d8ceb"/>
<rect x="1770.5" y="60.3" width="9" height="1.2" fill="#2d8ceb"/>
<text x="1802" y="62.3" font-size="11.5" fill="#8c8c8c" textLength="94.5" lengthAdjust="spacingAndGlyphs" font-weight="bold">Edit Audio to Video</text>
<path d="M1965.5 53l4 4-4 4M1971.0 53l4 4-4 4" fill="none" stroke="#d0d0d0" stroke-width="1.7"/>
<rect x="1984" y="46" width="1" height="24" fill="#2e2e2e"/>
<rect x="1990.5" y="50.5" width="191" height="16.5" fill="#141414" stroke="#333333" stroke-width="1" rx="3"/>
<circle cx="2001.5" cy="56.7" r="3.2" fill="none" stroke="#b0b0b0" stroke-width="1.3"/>
<path d="M1999.3 59.2l-3.5 3.6" fill="none" stroke="#b0b0b0" stroke-width="1.6"/>
<text x="2018" y="63" font-size="11.5" fill="#cfcfcf" textLength="59" lengthAdjust="spacingAndGlyphs">Search Help</text>
<rect x="1146" y="74" width="1" height="454" fill="#1a1a1a"/>
<rect x="1147" y="74" width="196" height="28" fill="#232323"/>
<rect x="1147" y="102" width="196" height="4" fill="#161616"/>
<rect x="1343" y="74" width="4" height="434" fill="#161616"/>
<text x="1159" y="92.3" font-size="11.5" fill="#dedede" textLength="22.5" lengthAdjust="spacingAndGlyphs">Files</text>
<rect x="1191" y="84.5" width="9" height="1.2" fill="#b8b8b8"/>
<rect x="1191" y="87.9" width="9" height="1.2" fill="#b8b8b8"/>
<rect x="1191" y="91.3" width="9" height="1.2" fill="#b8b8b8"/>
<rect x="1158" y="97.5" width="41" height="2" fill="#d0d0d0"/>
<text x="1222" y="92.3" font-size="11.5" fill="#a9a9a9" textLength="44" lengthAdjust="spacingAndGlyphs">Favorites</text>
<rect x="1147" y="106" width="196" height="368" fill="#232323"/>
<text x="1148" y="124.3" font-size="11.5" fill="#a9a9a9" textLength="3.5" lengthAdjust="spacingAndGlyphs">r</text>
<text x="1192" y="124.3" font-size="11.5" fill="#dedede" textLength="57.5" lengthAdjust="spacingAndGlyphs">Effects Rack</text>
<rect x="1259" y="116.5" width="9" height="1.2" fill="#b8b8b8"/>
<rect x="1259" y="119.9" width="9" height="1.2" fill="#b8b8b8"/>
<rect x="1259" y="123.3" width="9" height="1.2" fill="#b8b8b8"/>
<rect x="1191" y="130" width="76" height="2" fill="#d0d0d0"/>
<text x="1290" y="124.3" font-size="11.5" fill="#8f8f8f" textLength="13.5" lengthAdjust="spacingAndGlyphs">Ma</text>
<rect x="1303" y="110" width="40" height="20" fill="#232323"/>
<rect x="1303" y="110" width="1" height="19" fill="#2c2c2c"/>
<path d="M1329.5 115l4 4-4 4M1335.0 115l4 4-4 4" fill="none" stroke="#d0d0d0" stroke-width="1.7"/>
<text x="1152" y="150.8" font-size="11.5" fill="#a9a9a9" textLength="37.5" lengthAdjust="spacingAndGlyphs">Presets:</text>
<rect x="1194.5" y="137.5" width="64.5" height="18.5" fill="#1b1b1b" stroke="#353535" stroke-width="1" rx="3"/>
<text x="1200" y="150.8" font-size="11.5" fill="#cfcfcf" textLength="44" lengthAdjust="spacingAndGlyphs">(Defaul...</text>
<path d="M1247.5 145l3.25 2.95 l3.25 -2.95" fill="none" stroke="#c0c0c0" stroke-width="1.4"/>
<path d="M1266 153.5v-3l2-1.2h12l2 1.2v3z" fill="#b4b4b4"/>
<path d="M1274 140.5v6.5M1270.5 144.8l3.5 3.7 3.5-3.7" fill="none" stroke="#b4b4b4" stroke-width="1.7"/>
<rect x="1268.2" y="151" width="1.4" height="1.2" fill="#232323"/>
<path d="M1291.5 143.5h9.5l-0.7 11h-8.1z" fill="none" stroke="#b4b4b4" stroke-width="1.2"/>
<path d="M1290 142h12.5M1294 140.3h4.5" fill="none" stroke="#b4b4b4" stroke-width="1.4"/>
<path d="M1294.3 145v8M1296.3 145v8M1298.3 145v8" fill="none" stroke="#b4b4b4" stroke-width="0.9"/>
<rect x="1313.5" y="138" width="1" height="18" fill="#333333"/>
<polygon points="1328,140.7 1329.7,145.15 1334.47,145.4 1330.76,148.4 1332,153 1328,150.4 1324,153 1325.24,148.4 1321.53,145.4 1326.3,145.15" fill="#4d4d4d"/>
<text x="1152" y="174.2" font-size="11.5" fill="#a9a9a9" textLength="55" lengthAdjust="spacingAndGlyphs" font-weight="bold">File: EHBO</text>
<rect x="1152.5" y="185.5" width="184.5" height="164.5" fill="#1c1c1c" stroke="#323232" stroke-width="1" rx="3"/>
<clipPath id="fxlist"><rect x="1153" y="186" width="183.5" height="163.5" rx="3"/></clipPath><g clip-path="url(#fxlist)">
<text x="1163.3" y="198.9" font-size="12.5" fill="#a9a9a9" text-anchor="middle">1</text>
<rect x="1174.5" y="186.8" width="16.5" height="16.5" fill="#1f1f1f" stroke="#353535" stroke-width="1" rx="3.5"/>
<path d="M1185.10 191.17 A5 5 0 1 1 1180.10 191.17" fill="none" stroke="#a8a8a8" stroke-width="1.15"/>
<line x1="1182.6" y1="189.3" x2="1182.6" y2="195" stroke="#a8a8a8" stroke-width="1.15"/>
<polygon points="1311.3,190.7 1316.5,194.9 1311.3,199.1" fill="#a4a4a4"/>
<rect x="1153" y="204" width="172" height="1" fill="#2b2b2b"/>
<text x="1163.3" y="217.93" font-size="12.5" fill="#a9a9a9" text-anchor="middle">2</text>
<rect x="1174.5" y="205.83" width="16.5" height="16.5" fill="#1f1f1f" stroke="#353535" stroke-width="1" rx="3.5"/>
<path d="M1185.10 210.20 A5 5 0 1 1 1180.10 210.20" fill="none" stroke="#a8a8a8" stroke-width="1.15"/>
<line x1="1182.6" y1="208.33" x2="1182.6" y2="214.03" stroke="#a8a8a8" stroke-width="1.15"/>
<polygon points="1311.3,209.73 1316.5,213.93 1311.3,218.13" fill="#a4a4a4"/>
<rect x="1153" y="223" width="172" height="1" fill="#2b2b2b"/>
<text x="1163.3" y="236.96" font-size="12.5" fill="#a9a9a9" text-anchor="middle">3</text>
<rect x="1174.5" y="224.86" width="16.5" height="16.5" fill="#1f1f1f" stroke="#353535" stroke-width="1" rx="3.5"/>
<path d="M1185.10 229.23 A5 5 0 1 1 1180.10 229.23" fill="none" stroke="#a8a8a8" stroke-width="1.15"/>
<line x1="1182.6" y1="227.36" x2="1182.6" y2="233.06" stroke="#a8a8a8" stroke-width="1.15"/>
<polygon points="1311.3,228.76 1316.5,232.96 1311.3,237.16" fill="#a4a4a4"/>
<rect x="1153" y="242" width="172" height="1" fill="#2b2b2b"/>
<text x="1163.3" y="255.99" font-size="12.5" fill="#a9a9a9" text-anchor="middle">4</text>
<rect x="1174.5" y="243.89" width="16.5" height="16.5" fill="#1f1f1f" stroke="#353535" stroke-width="1" rx="3.5"/>
<path d="M1185.10 248.26 A5 5 0 1 1 1180.10 248.26" fill="none" stroke="#a8a8a8" stroke-width="1.15"/>
<line x1="1182.6" y1="246.39" x2="1182.6" y2="252.09" stroke="#a8a8a8" stroke-width="1.15"/>
<polygon points="1311.3,247.79 1316.5,251.99 1311.3,256.19" fill="#a4a4a4"/>
<rect x="1153" y="261" width="172" height="1" fill="#2b2b2b"/>
<text x="1163.3" y="275.02" font-size="12.5" fill="#a9a9a9" text-anchor="middle">5</text>
<rect x="1174.5" y="262.92" width="16.5" height="16.5" fill="#1f1f1f" stroke="#353535" stroke-width="1" rx="3.5"/>
<path d="M1185.10 267.29 A5 5 0 1 1 1180.10 267.29" fill="none" stroke="#a8a8a8" stroke-width="1.15"/>
<line x1="1182.6" y1="265.42" x2="1182.6" y2="271.12" stroke="#a8a8a8" stroke-width="1.15"/>
<polygon points="1311.3,266.82 1316.5,271.02 1311.3,275.22" fill="#a4a4a4"/>
<rect x="1153" y="280" width="172" height="1" fill="#2b2b2b"/>
<text x="1163.3" y="294.05" font-size="12.5" fill="#a9a9a9" text-anchor="middle">6</text>
<rect x="1174.5" y="281.95" width="16.5" height="16.5" fill="#1f1f1f" stroke="#353535" stroke-width="1" rx="3.5"/>
<path d="M1185.10 286.32 A5 5 0 1 1 1180.10 286.32" fill="none" stroke="#a8a8a8" stroke-width="1.15"/>
<line x1="1182.6" y1="284.45" x2="1182.6" y2="290.15" stroke="#a8a8a8" stroke-width="1.15"/>
<polygon points="1311.3,285.85 1316.5,290.05 1311.3,294.25" fill="#a4a4a4"/>
<rect x="1153" y="299" width="172" height="1" fill="#2b2b2b"/>
<text x="1163.3" y="313.08" font-size="12.5" fill="#a9a9a9" text-anchor="middle">7</text>
<rect x="1174.5" y="300.98" width="16.5" height="16.5" fill="#1f1f1f" stroke="#353535" stroke-width="1" rx="3.5"/>
<path d="M1185.10 305.35 A5 5 0 1 1 1180.10 305.35" fill="none" stroke="#a8a8a8" stroke-width="1.15"/>
<line x1="1182.6" y1="303.48" x2="1182.6" y2="309.18" stroke="#a8a8a8" stroke-width="1.15"/>
<polygon points="1311.3,304.88 1316.5,309.08 1311.3,313.28" fill="#a4a4a4"/>
<rect x="1153" y="318" width="172" height="1" fill="#2b2b2b"/>
<text x="1163.3" y="332.11" font-size="12.5" fill="#a9a9a9" text-anchor="middle">8</text>
<rect x="1174.5" y="320.01" width="16.5" height="16.5" fill="#1f1f1f" stroke="#353535" stroke-width="1" rx="3.5"/>
<path d="M1185.10 324.38 A5 5 0 1 1 1180.10 324.38" fill="none" stroke="#a8a8a8" stroke-width="1.15"/>
<line x1="1182.6" y1="322.51" x2="1182.6" y2="328.21" stroke="#a8a8a8" stroke-width="1.15"/>
<polygon points="1311.3,323.91 1316.5,328.11 1311.3,332.31" fill="#a4a4a4"/>
<rect x="1153" y="337" width="172" height="1" fill="#2b2b2b"/>
<text x="1163.3" y="351.14" font-size="12.5" fill="#a9a9a9" text-anchor="middle">9</text>
<rect x="1174.5" y="339.04" width="16.5" height="16.5" fill="#1f1f1f" stroke="#353535" stroke-width="1" rx="3.5"/>
<path d="M1185.10 343.41 A5 5 0 1 1 1180.10 343.41" fill="none" stroke="#a8a8a8" stroke-width="1.15"/>
<line x1="1182.6" y1="341.54" x2="1182.6" y2="347.24" stroke="#a8a8a8" stroke-width="1.15"/>
<polygon points="1311.3,342.94 1316.5,347.14 1311.3,351.34" fill="#a4a4a4"/>
<rect x="1171.5" y="186" width="1" height="164" fill="#2b2b2b"/>
<rect x="1304.5" y="186" width="1" height="164" fill="#2b2b2b"/>
</g>
<rect x="1326.3" y="187" width="9.7" height="88" fill="#323232" rx="4.8"/>
<text x="1165.5" y="370" font-size="11.5" fill="#505050" textLength="28" lengthAdjust="spacingAndGlyphs">Input:</text>
<rect x="1197" y="369.8" width="1.1" height="1.4" fill="#474747"/>
<rect x="1199.1" y="368.65" width="1.1" height="2.55" fill="#474747"/>
<rect x="1201.2" y="367.5" width="1.1" height="3.7" fill="#474747"/>
<rect x="1203.3" y="366.35" width="1.1" height="4.85" fill="#474747"/>
<rect x="1205.4" y="365.2" width="1.1" height="6" fill="#474747"/>
<rect x="1207.5" y="364.05" width="1.1" height="7.15" fill="#474747"/>
<rect x="1209.6" y="362.9" width="1.1" height="8.3" fill="#474747"/>
<rect x="1211.7" y="361.75" width="1.1" height="9.45" fill="#474747"/>
<circle cx="1226.5" cy="366.5" r="7.6" fill="none" stroke="#4d4d4d" stroke-width="1.5"/>
<line x1="1226.5" y1="359.5" x2="1226.5" y2="366" stroke="#4d4d4d" stroke-width="1.3"/>
<text x="1240.5" y="370" font-size="11.5" fill="#505050" textLength="13" lengthAdjust="spacingAndGlyphs">+0</text>
<rect x="1290.5" y="359.5" width="40.5" height="15.5" fill="#1a1a1a" stroke="#000000" stroke-width="1.3"/>
<rect x="1321" y="360" width="1" height="15" fill="#000000"/>
<rect x="1321" y="367" width="10" height="1" fill="#000000"/>
<rect x="1292" y="360.5" width="1.2" height="6" fill="#f0e800"/>
<rect x="1292" y="368" width="1.2" height="6" fill="#f0e800"/>
<text x="1157.5" y="394" font-size="11.5" fill="#505050" textLength="36" lengthAdjust="spacingAndGlyphs">Output:</text>
<rect x="1197" y="393.8" width="1.1" height="1.4" fill="#474747"/>
<rect x="1199.1" y="392.65" width="1.1" height="2.55" fill="#474747"/>
<rect x="1201.2" y="391.5" width="1.1" height="3.7" fill="#474747"/>
<rect x="1203.3" y="390.35" width="1.1" height="4.85" fill="#474747"/>
<rect x="1205.4" y="389.2" width="1.1" height="6" fill="#474747"/>
<rect x="1207.5" y="388.05" width="1.1" height="7.15" fill="#474747"/>
<rect x="1209.6" y="386.9" width="1.1" height="8.3" fill="#474747"/>
<rect x="1211.7" y="385.75" width="1.1" height="9.45" fill="#474747"/>
<circle cx="1226.5" cy="390.5" r="7.6" fill="none" stroke="#4d4d4d" stroke-width="1.5"/>
<line x1="1226.5" y1="383.5" x2="1226.5" y2="390" stroke="#4d4d4d" stroke-width="1.3"/>
<text x="1240.5" y="394" font-size="11.5" fill="#505050" textLength="13" lengthAdjust="spacingAndGlyphs">+0</text>
<rect x="1290.5" y="383.5" width="40.5" height="15.5" fill="#1a1a1a" stroke="#000000" stroke-width="1.3"/>
<rect x="1321" y="384" width="1" height="15" fill="#000000"/>
<rect x="1321" y="391" width="10" height="1" fill="#000000"/>
<rect x="1292" y="384.5" width="1.2" height="6" fill="#f0e800"/>
<rect x="1292" y="392" width="1.2" height="6" fill="#f0e800"/>
<rect x="1292" y="400" width="1" height="2" fill="#8a8a8a"/>
<rect x="1298.8" y="400" width="1" height="2" fill="#8a8a8a"/>
<rect x="1305.6" y="400" width="1" height="2" fill="#8a8a8a"/>
<rect x="1312.4" y="400" width="1" height="2" fill="#8a8a8a"/>
<rect x="1319.2" y="400" width="1" height="2" fill="#8a8a8a"/>
<rect x="1319.5" y="400" width="1" height="3" fill="#8a8a8a"/>
<text x="1290.5" y="415.5" font-size="10.5" fill="#8f8f8f" textLength="11.5" lengthAdjust="spacingAndGlyphs">dB</text>
<text x="1317.8" y="415.5" font-size="10.5" fill="#8f8f8f" textLength="5.5" lengthAdjust="spacingAndGlyphs">0</text>
<text x="1173.5" y="436" font-size="11.5" fill="#505050" textLength="21" lengthAdjust="spacingAndGlyphs">Mix:</text>
<text x="1210" y="436" font-size="11.5" fill="#505050" textLength="17.5" lengthAdjust="spacingAndGlyphs">Dry</text>
<rect x="1238" y="430.5" width="5" height="1.5" fill="#505050"/>
<circle cx="1250.3" cy="431.3" r="3.7" fill="none" stroke="#5a5a5a" stroke-width="1.8"/>
<text x="1261" y="436" font-size="11.5" fill="#505050" textLength="20" lengthAdjust="spacingAndGlyphs">Wet</text>
<text x="1298" y="436" font-size="11.5" fill="#505050" textLength="31.5" lengthAdjust="spacingAndGlyphs">100 %</text>
<rect x="1152" y="445.5" width="186" height="1.5" fill="#333333"/>
<rect x="1151.5" y="450.3" width="18" height="19.2" fill="#1d1d1d" stroke="#353535" stroke-width="1" rx="3"/>
<path d="M1163.00 456.27 A5 5 0 1 1 1158.00 456.27" fill="none" stroke="#b0b0b0" stroke-width="1.2"/>
<line x1="1160.5" y1="454.4" x2="1160.5" y2="460.1" stroke="#b0b0b0" stroke-width="1.2"/>
<rect x="1173.5" y="450.3" width="19" height="19.2" fill="#141414" stroke="#353535" stroke-width="1" rx="3"/>
<rect x="1176.6" y="456.4" width="2.2" height="2.2" fill="#2d8ceb"/>
<rect x="1180.2" y="456.6" width="8.3" height="1.8" fill="#2d8ceb"/>
<rect x="1176.6" y="461" width="2.2" height="2.2" fill="#2d8ceb"/>
<rect x="1180.2" y="461.2" width="8.3" height="1.8" fill="#2d8ceb"/>
<rect x="1196" y="450.3" width="58.5" height="19.2" fill="#282828" rx="9.6"/>
<text x="1211.5" y="463.9" font-size="11.5" fill="#4a4a4a" textLength="28" lengthAdjust="spacingAndGlyphs">Apply</text>
<text x="1259.5" y="463.9" font-size="11.5" fill="#a9a9a9" textLength="40" lengthAdjust="spacingAndGlyphs">Process:</text>
<rect x="1303.8" y="450.3" width="60" height="19.2" fill="#1b1b1b" stroke="#353535" stroke-width="1" rx="3"/>
<text x="1310" y="463.9" font-size="11.5" fill="#cfcfcf" textLength="70" lengthAdjust="spacingAndGlyphs">Selection Only</text>
<rect x="1343" y="448" width="4" height="24" fill="#161616"/>
<rect x="1147" y="474" width="196" height="4" fill="#161616"/>
<rect x="1147" y="478" width="196" height="29" fill="#232323"/>
<text x="1159.5" y="496" font-size="11.5" fill="#a9a9a9" textLength="34.5" lengthAdjust="spacingAndGlyphs">History</text>
<text x="1234" y="496" font-size="11.5" fill="#dedede" textLength="28.5" lengthAdjust="spacingAndGlyphs">Video</text>
<rect x="1271" y="488.3" width="9" height="1.2" fill="#b8b8b8"/>
<rect x="1271" y="491.7" width="9" height="1.2" fill="#b8b8b8"/>
<rect x="1271" y="495.1" width="9" height="1.2" fill="#b8b8b8"/>
<rect x="1233" y="502" width="47" height="2" fill="#d0d0d0"/>
<rect x="1347" y="74" width="339" height="334" fill="#232323"/>
<rect x="1686" y="74" width="4" height="334" fill="#161616"/>
<rect x="1347" y="408" width="841" height="4" fill="#161616"/>
<text x="1357.5" y="92.3" font-size="11.5" fill="#a9a9a9" textLength="71" lengthAdjust="spacingAndGlyphs">Editor: EHBO *</text>
<rect x="1439" y="84.5" width="9" height="1.2" fill="#b8b8b8"/>
<rect x="1439" y="87.9" width="9" height="1.2" fill="#b8b8b8"/>
<rect x="1439" y="91.3" width="9" height="1.2" fill="#b8b8b8"/>
<rect x="1354" y="110" width="250.2" height="27.5" fill="#f4f4fb"/>
<path d="M1355 112h2v-1h1v1h1v-1h3v5h1v-2h1v-2h3v4h2v-5h5v2h1v1h1v-2h1v-1h1v5h1v-4h1v-1h2v1h1v-1h1v1h1v-1h2v1h1v-1h2v1h1v6h1v-7h1v1h2v-1h2v1h2v-1h1v1h1v4h2v-5h1v1h1v-1h5v1h1v-1h1v1h1v4h1v-4h1v-1h2v1h1v-1h1v1h2v-1h1v3h1v-1h1v-2h3v2h1v-2h1v5h2v-5h1v1h2v-1h1v1h1v1h1v-2h4v1h1v-1h2v5h2v-5h2v1h1v-1h2v1h1v-1h3v3h1v2h1v-2h1v-2h7v-1h2v1h2v-1h1v3h1v2h1v-4h1v-1h1v1h2v1h1v-2h2v1h1v-1h2v1h1v-1h1v1h1v-1h4v5h1v-4h1v-1h1v1h2v-1h3v1h1v-1h2v2h1v-2h1v2h1v-2h7v1h1v-1h1v1h2v-1h3v1h1v-1h1v5h2v-5h1v1h1v-1h1v2h1v-2h2v2h1v-1h1v-1h2v5h2v-5h1v1h1v-1h6v1h1v-1h1v5h1v-5h1v1h4v4h2v-2h1v-3h1v1h1v-1h2v1h1v-1h4v1h1v4h1v-2h1v-2h1v-1h4v1h2v2h1v-3h1v1h1v4h2v-5h4v1h4v-1h3v1h3v4h2v-3h1v-2h1v1h1v-1h2v1h1v-1h3v1h1v-1h1v1h1V123h-1v-1h-2v1h-1v-1h-2v1h-1v-1h-1v1h-1v-1h-1v1h-2v-5h-2v4h-2v1h-1v-1h-2v1h-1v-1h-1v1h-1v-1h-3v1h-2v-1h-1v-4h-2v5h-2v-1h-3v1h-3v-1h-1v1h-1v-1h-1v-4h-1v4h-2v1h-1v-1h-1v1h-1v-1h-1v1h-1v-1h-2v1h-1v-1h-1v-4h-2v5h-1v-1h-4v-4h-1v5h-5v-1h-1v1h-1v-1h-3v-4h-2v5h-1v-1h-1v1h-4v-1h-1v1h-1v-1h-1v1h-1v-5h-2v4h-4v1h-3v-1h-3v1h-2v-1h-1v1h-1v-1h-3v1h-2v-1h-3v1h-2v-1h-2v1h-3v-5h-1v4h-3v1h-1v-1h-4v1h-1v-1h-3v1h-2v-1h-3v-4h-1v4h-3v1h-2v-1h-3v1h-3v-1h-3v-4h-1v4h-2v1h-1v-1h-3v1h-1v-1h-3v-4h-2v5h-1v-1h-11v1h-1v-5h-2v5h-1v-1h-2v1h-3v-1h-2v1h-1v-1h-2v1h-1v-1h-3v-4h-1v5h-1v-1h-3v1h-1v-1h-5v-4h-2v4h-1v1h-1v-1h-4v1h-1v-1h-2v-4h-1v4h-1v1h-1v-1h-2v1h-5v-1h-3v-4h-1v5h-2v-1h-5v1h-2v-5h-2v4h-2v1h-2v-5h-1v4h-1v1h-2v-1h-4Z" fill="#14301f" shape-rendering="crispEdges"/>
<path d="M1355 126h2v-1h1v1h1v-1h3v5h1v-2h1v-2h3v4h2v-5h5v2h1v1h1v-2h1v-1h1v5h1v-4h1v-1h2v1h1v-1h1v1h1v-1h2v1h1v-1h2v1h1v6h1v-7h1v1h2v-1h2v1h2v-1h1v1h1v4h2v-5h1v1h1v-1h5v1h1v-1h1v1h1v4h1v-4h1v-1h2v1h1v-1h1v1h2v-1h1v3h1v-1h1v-2h3v2h1v-2h1v5h2v-5h1v1h2v-1h1v1h1v1h1v-2h4v1h1v-1h2v5h2v-5h2v1h1v-1h2v1h1v-1h3v3h1v2h1v-2h1v-2h7v-1h2v1h2v-1h1v3h1v2h1v-4h1v-1h1v1h2v1h1v-2h2v1h1v-1h2v1h1v-1h1v1h1v-1h4v5h1v-4h1v-1h1v1h2v-1h3v1h1v-1h2v2h1v-2h1v2h1v-2h7v1h1v-1h1v1h2v-1h3v1h1v-1h1v5h2v-5h1v1h1v-1h1v2h1v-2h2v2h1v-1h1v-1h2v5h2v-5h1v1h1v-1h6v1h1v-1h1v5h1v-5h1v1h4v4h2v-2h1v-3h1v1h1v-1h2v1h1v-1h4v1h1v4h1v-2h1v-2h1v-1h4v1h2v2h1v-3h1v1h1v4h2v-5h4v1h4v-1h3v1h3v4h2v-3h1v-2h1v1h1v-1h2v1h1v-1h3v1h1v-1h1v1h1V137h-1v-1h-2v1h-1v-1h-2v1h-1v-1h-1v1h-1v-1h-1v1h-2v-5h-2v4h-2v1h-1v-1h-2v1h-1v-1h-1v1h-1v-1h-3v1h-2v-1h-1v-4h-2v5h-2v-1h-3v1h-3v-1h-1v1h-1v-1h-1v-4h-1v4h-2v1h-1v-1h-1v1h-1v-1h-1v1h-1v-1h-2v1h-1v-1h-1v-4h-2v5h-1v-1h-4v-4h-1v5h-5v-1h-1v1h-1v-1h-3v-4h-2v5h-1v-1h-1v1h-4v-1h-1v1h-1v-1h-1v1h-1v-5h-2v4h-4v1h-3v-1h-3v1h-2v-1h-1v1h-1v-1h-3v1h-2v-1h-3v1h-2v-1h-2v1h-3v-5h-1v4h-3v1h-1v-1h-4v1h-1v-1h-3v1h-2v-1h-3v-4h-1v4h-3v1h-2v-1h-3v1h-3v-1h-3v-4h-1v4h-2v1h-1v-1h-3v1h-1v-1h-3v-4h-2v5h-1v-1h-11v1h-1v-5h-2v5h-1v-1h-2v1h-3v-1h-2v1h-1v-1h-2v1h-1v-1h-3v-4h-1v5h-1v-1h-3v1h-1v-1h-5v-4h-2v4h-1v1h-1v-1h-4v1h-1v-1h-2v-4h-1v4h-1v1h-1v-1h-2v1h-5v-1h-3v-4h-1v5h-2v-1h-5v1h-2v-5h-2v4h-2v1h-2v-5h-1v4h-1v1h-2v-1h-4Z" fill="#14301f" shape-rendering="crispEdges"/>
<rect x="1355" y="110.5" width="47" height="27" fill="#e8fff0" opacity="0.3"/>
<rect x="1354" y="109.5" width="50" height="29" fill="none" stroke="#6e6e6e" stroke-width="1.6" rx="3"/>
<rect x="1353.2" y="113" width="4.6" height="22" fill="#777777" rx="2"/>
<rect x="1355" y="115" width="1" height="18" fill="#3a3a3a"/>
<rect x="1400.2" y="113" width="4.6" height="22" fill="#777777" rx="2"/>
<rect x="1402" y="115" width="1" height="18" fill="#3a3a3a"/>
<circle cx="1624.5" cy="122.5" r="3.8" fill="none" stroke="#a8a8a8" stroke-width="1.3"/>
<path d="M1622.7 122.5h3.6" fill="none" stroke="#a8a8a8" stroke-width="1.1"/>
<path d="M1627.3 125.5l4 4" fill="none" stroke="#a8a8a8" stroke-width="1.8"/>
<polygon points="1625.5,115 1623.2,117.4 1627.8,117.4" fill="#a8a8a8"/>
<polygon points="1625.5,132 1623.2,129.6 1627.8,129.6" fill="#a8a8a8"/>
<polygon points="1616.5,123.5 1619,121.2 1619,125.8" fill="#a8a8a8"/>
<polygon points="1634.5,123.5 1632,121.2 1632,125.8" fill="#a8a8a8"/>
<rect x="1647.3" y="117.3" width="13.6" height="12.6" fill="#3a3a3a" stroke="#b0b0b0" stroke-width="1.1"/>
<path d="M1647.5 120.5h13M1647.5 123.6h13M1647.5 126.7h13" fill="none" stroke="#b0b0b0" stroke-width="1"/>
<rect x="1354" y="155" width="251" height="26" fill="#000000"/>
<rect x="1355" y="156" width="249.5" height="24.5" fill="#2a3d38"/>
<text x="1358" y="169.7" font-size="11.5" fill="#6c8273" textLength="21.5" lengthAdjust="spacingAndGlyphs">hms</text>
<text x="1448.5" y="169.7" font-size="11.5" fill="#8ea28f" textLength="29.5" lengthAdjust="spacingAndGlyphs">0:05,0</text>
<text x="1555.5" y="169.7" font-size="11.5" fill="#8ea28f" textLength="29.5" lengthAdjust="spacingAndGlyphs">0:10,0</text>
<rect x="1355" y="176.5" width="1" height="4" fill="#8ea28f"/>
<rect x="1377" y="176.5" width="1" height="4" fill="#8ea28f"/>
<rect x="1398" y="176.5" width="1" height="4" fill="#8ea28f"/>
<rect x="1420" y="176.5" width="1" height="4" fill="#8ea28f"/>
<rect x="1441" y="176.5" width="1" height="4" fill="#8ea28f"/>
<rect x="1462" y="173" width="1" height="7.5" fill="#8ea28f"/>
<rect x="1484" y="176.5" width="1" height="4" fill="#8ea28f"/>
<rect x="1505" y="176.5" width="1" height="4" fill="#8ea28f"/>
<rect x="1527" y="176.5" width="1" height="4" fill="#8ea28f"/>
<rect x="1548" y="176.5" width="1" height="4" fill="#8ea28f"/>
<rect x="1570" y="173" width="1" height="7.5" fill="#8ea28f"/>
<rect x="1591" y="176.5" width="1" height="4" fill="#8ea28f"/>
<rect x="1355.5" y="157" width="1" height="12" fill="#6c8273"/>
<rect x="1354" y="180.5" width="325" height="190" fill="#000000"/>
<rect x="1355" y="181" width="249.3" height="179" fill="#f4f4fd"/>
<rect x="1355" y="189.8" width="249.5" height="1" fill="#c6e2c6"/>
<rect x="1355" y="207.8" width="249.5" height="1" fill="#c6e2c6"/>
<rect x="1355" y="243.8" width="249.5" height="1" fill="#c6e2c6"/>
<rect x="1355" y="260.8" width="249.5" height="1" fill="#c6e2c6"/>
<rect x="1355" y="279.8" width="249.5" height="1" fill="#c6e2c6"/>
<rect x="1355" y="296.8" width="249.5" height="1" fill="#c6e2c6"/>
<rect x="1355" y="332.8" width="249.5" height="1" fill="#c6e2c6"/>
<rect x="1355" y="349.8" width="249.5" height="1" fill="#c6e2c6"/>
<rect x="1462" y="181" width="1" height="179" fill="#c6e2c6"/>
<rect x="1569" y="181" width="1" height="179" fill="#c6e2c6"/>
<path d="M1356 214h1v-26h1v22h1v3h1v2h1v10h7v-9h1v-4h1v-4h1v-4h1v3h1v4h1v-7h1v7h1v-2h1v-4h1v9h1v-3h1v2h1v-9h1v3h1v-2h1v3h2v-4h1v8h2v4h1v-19h1v9h1v10h2v9h7v-9h1v-7h1v-5h1v4h1v7h1v-4h1v6h1v-11h1v7h1v3h1v-13h2v-3h1v17h1v-10h1v-3h1v5h1v-5h1v3h2v5h2v-2h1v-7h1v8h1v-8h1v1h1v5h1v3h1v-15h1v16h1v-4h1v2h1v-14h1v15h1v-9h1v6h1v9h1v-6h1v-7h1v12h1v-10h1v4h1v-7h1v-2h1v4h1v5h2v3h1v1h1v-8h1v2h1v-2h2v3h1v-4h1v9h1v-3h1v1h1v-9h1v-1h1v9h1v-8h1v-7h1v10h1v-8h1v11h1v-2h1v-7h1v4h1v5h1v3h1v8h1v4h8v-7h1v-6h1v-7h1v6h2v-4h1v-2h1v-1h1v10h1v-4h1v1h1v4h1v-6h1v6h1v1h1v-13h1v-2h1v9h1v6h1v-15h1v3h1v7h1v2h1v-7h1v-1h1v10h1v-1h1v-4h1v-3h2v5h1v-4h1v-1h1v2h1v-5h1v2h1v4h1v2h1v1h1v-17h1v6h1v7h1v2h1v-9h1v-1h1v7h1v3h1v-2h1v-11h1v4h1v6h1v1h1v2h3v-10h1v2h1v5h1v9h1v-9h1v7h1v-8h1v-3h1v12h1v-3h1v-11h1v7h1v-8h1v-5h1v13h1v-2h1v4h1v5h1v1h1v-1h1v4h1v2h2v-4h1v-10h1v-12h1v8h1v7h1v-8h1v11h1v-3h1v-1h1v-3h1v-4h1v1h1v9h1v1h1v-2h1v-1h1v-2h1v-3h1v1h1v1h1v9h1v-1h1v-9h1v-4h1v8h1v-1h1v2h1v-9h1v12h1v1h1v-4h1v-5h2v-5h1v8h1v2h1v-2h1v-9h1v9h1v9h1v-3h1v-2h1v2h1v-14h1V244h-1v-5h-1v-5h-1v-3h-1v1h-1v3h-1v2h-1v3h-1v1h-1v1h-1v-3h-2v1h-1v-4h-1v-4h-1v5h-2v1h-1v-1h-1v-1h-3v-1h-1v-1h-1v2h-1v1h-1v7h-1v-6h-1v1h-1v7h-1v-13h-2v4h-1v2h-1v-3h-2v3h-1v-6h-1v3h-1v-1h-1v3h-1v-1h-1v1h-1v-7h-1v-4h-1v1h-2v2h-1v3h-1v1h-1v3h-1v5h-1v1h-1v-1h-1v-5h-1v-2h-1v5h-1v-6h-1v3h-1v4h-1v-4h-1v-4h-1v10h-1v-1h-1v-4h-1v3h-1v-4h-1v-2h-1v-2h-1v8h-2v-3h-2v3h-1v3h-1v-5h-1v3h-1v-5h-2v4h-1v-7h-1v8h-1v-5h-2v-2h-1v-1h-1v3h-2v-1h-1v2h-1v-2h-1v-2h-1v9h-1v-1h-1v-6h-1v-3h-1v4h-1v4h-2v-4h-1v2h-1v3h-1v4h-1v-12h-1v5h-1v-1h-1v1h-1v-5h-1v-1h-1v2h-2v2h-1v2h-1v-3h-2v6h-1v1h-1v-9h-1v3h-1v1h-1v-2h-1v-3h-1v-7h-8v4h-1v6h-1v4h-1v1h-1v-1h-1v-2h-1v2h-1v-3h-1v2h-3v-3h-1v4h-1v1h-1v-5h-1v5h-1v-4h-1v3h-1v-1h-1v-1h-1v3h-1v-6h-1v2h-1v-3h-1v-1h-1v3h-2v2h-3v3h-1v-5h-1v-4h-1v5h-2v-2h-1v4h-1v2h-1v1h-1v-6h-1v-3h-1v3h-1v-3h-1v6h-1v5h-1v-7h-1v-1h-1v2h-1v3h-1v-5h-2v-3h-1v4h-1v1h-1v1h-1v2h-1v-1h-1v-4h-1v1h-1v-1h-1v3h-1v-1h-2v-3h-1v1h-1v3h-1v-4h-1v6h-1v-8h-1v5h-1v-1h-2v-7h-1v-4h-7v5h-1v2h-1v5h-1v-3h-1v-3h-1v8h-1v-4h-1v1h-1v-1h-1v2h-1v1h-1v-4h-1v4h-1v-2h-2v-1h-2v2h-1v-1h-1v-2h-1v7h-1v-4h-1v-1h-1v1h-1v-1h-1v-6h-1v-5h-7v10h-1v-1h-1v2h-1v14h-1v-18h-1Z" fill="#25433a" shape-rendering="crispEdges"/>
<path d="M1356 304h1v-26h1v22h1v3h1v2h1v10h7v-9h1v-4h1v-4h1v-4h1v3h1v4h1v-7h1v7h1v-2h1v-4h1v9h1v-3h1v2h1v-9h1v3h1v-2h1v3h2v-4h1v8h2v4h1v-19h1v9h1v10h2v9h7v-9h1v-7h1v-5h1v4h1v7h1v-4h1v6h1v-11h1v7h1v3h1v-13h2v-3h1v17h1v-10h1v-3h1v5h1v-5h1v3h2v5h2v-2h1v-7h1v8h1v-8h1v1h1v5h1v3h1v-15h1v16h1v-4h1v2h1v-14h1v15h1v-9h1v6h1v9h1v-6h1v-7h1v12h1v-10h1v4h1v-7h1v-2h1v4h1v5h2v3h1v1h1v-8h1v2h1v-2h2v3h1v-4h1v9h1v-3h1v1h1v-9h1v-1h1v9h1v-8h1v-7h1v10h1v-8h1v11h1v-2h1v-7h1v4h1v5h1v3h1v8h1v4h8v-7h1v-6h1v-7h1v6h2v-4h1v-2h1v-1h1v10h1v-4h1v1h1v4h1v-6h1v6h1v1h1v-13h1v-2h1v9h1v6h1v-15h1v3h1v7h1v2h1v-7h1v-1h1v10h1v-1h1v-4h1v-3h2v5h1v-4h1v-1h1v2h1v-5h1v2h1v4h1v2h1v1h1v-17h1v6h1v7h1v2h1v-9h1v-1h1v7h1v3h1v-2h1v-11h1v4h1v6h1v1h1v2h3v-10h1v2h1v5h1v9h1v-9h1v7h1v-8h1v-3h1v12h1v-3h1v-11h1v7h1v-8h1v-5h1v13h1v-2h1v4h1v5h1v1h1v-1h1v4h1v2h2v-4h1v-10h1v-12h1v8h1v7h1v-8h1v11h1v-3h1v-1h1v-3h1v-4h1v1h1v9h1v1h1v-2h1v-1h1v-2h1v-3h1v1h1v1h1v9h1v-1h1v-9h1v-4h1v8h1v-1h1v2h1v-9h1v12h1v1h1v-4h1v-5h2v-5h1v8h1v2h1v-2h1v-9h1v9h1v9h1v-3h1v-2h1v2h1v-14h1V334h-1v-5h-1v-5h-1v-3h-1v1h-1v3h-1v2h-1v3h-1v1h-1v1h-1v-3h-2v1h-1v-4h-1v-4h-1v5h-2v1h-1v-1h-1v-1h-3v-1h-1v-1h-1v2h-1v1h-1v7h-1v-6h-1v1h-1v7h-1v-13h-2v4h-1v2h-1v-3h-2v3h-1v-6h-1v3h-1v-1h-1v3h-1v-1h-1v1h-1v-7h-1v-4h-1v1h-2v2h-1v3h-1v1h-1v3h-1v5h-1v1h-1v-1h-1v-5h-1v-2h-1v5h-1v-6h-1v3h-1v4h-1v-4h-1v-4h-1v10h-1v-1h-1v-4h-1v3h-1v-4h-1v-2h-1v-2h-1v8h-2v-3h-2v3h-1v3h-1v-5h-1v3h-1v-5h-2v4h-1v-7h-1v8h-1v-5h-2v-2h-1v-1h-1v3h-2v-1h-1v2h-1v-2h-1v-2h-1v9h-1v-1h-1v-6h-1v-3h-1v4h-1v4h-2v-4h-1v2h-1v3h-1v4h-1v-12h-1v5h-1v-1h-1v1h-1v-5h-1v-1h-1v2h-2v2h-1v2h-1v-3h-2v6h-1v1h-1v-9h-1v3h-1v1h-1v-2h-1v-3h-1v-7h-8v4h-1v6h-1v4h-1v1h-1v-1h-1v-2h-1v2h-1v-3h-1v2h-3v-3h-1v4h-1v1h-1v-5h-1v5h-1v-4h-1v3h-1v-1h-1v-1h-1v3h-1v-6h-1v2h-1v-3h-1v-1h-1v3h-2v2h-3v3h-1v-5h-1v-4h-1v5h-2v-2h-1v4h-1v2h-1v1h-1v-6h-1v-3h-1v3h-1v-3h-1v6h-1v5h-1v-7h-1v-1h-1v2h-1v3h-1v-5h-2v-3h-1v4h-1v1h-1v1h-1v2h-1v-1h-1v-4h-1v1h-1v-1h-1v3h-1v-1h-2v-3h-1v1h-1v3h-1v-4h-1v6h-1v-8h-1v5h-1v-1h-2v-7h-1v-4h-7v5h-1v2h-1v5h-1v-3h-1v-3h-1v8h-1v-4h-1v1h-1v-1h-1v2h-1v1h-1v-4h-1v4h-1v-2h-2v-1h-2v2h-1v-1h-1v-2h-1v7h-1v-4h-1v-1h-1v1h-1v-1h-1v-6h-1v-5h-7v10h-1v-1h-1v2h-1v14h-1v-18h-1Z" fill="#25433a" shape-rendering="crispEdges"/>
<rect x="1355" y="225" width="249.5" height="1" fill="#1a2e28"/>
<rect x="1355" y="315" width="249.5" height="1" fill="#1a2e28"/>
<rect x="1355" y="270" width="249.5" height="1" fill="#5a5a5a"/>
<rect x="1355" y="181" width="1.3" height="179" fill="#e00000"/>
<rect x="1367" y="183" width="11.5" height="11.5" fill="#b0b0b0"/>
<polygon points="1368.5,193.5 1377.5,184.5 1377.5,193.5" fill="#4a4a4a"/>
<path d="M1350 168h11v6.5l-5.5 5.5-5.5-5.5z" fill="#2d8ceb"/>
<rect x="1605.3" y="181" width="72.7" height="179" fill="#1f1f1f"/>
<rect x="1605.5" y="270" width="72.5" height="1" fill="#000000"/>
<rect x="1606" y="190" width="4" height="1" fill="#8a8a8a"/>
<text x="1612.5" y="192.6" font-size="11.5" fill="#8f8f8f" textLength="13" lengthAdjust="spacingAndGlyphs">dB</text>
<rect x="1606" y="208" width="4" height="1" fill="#8a8a8a"/>
<text x="1612.5" y="210.7" font-size="11.5" fill="#8f8f8f" textLength="10.5" lengthAdjust="spacingAndGlyphs">-3</text>
<rect x="1606" y="226" width="4" height="1" fill="#8a8a8a"/>
<text x="1612.5" y="228.7" font-size="11.5" fill="#8f8f8f" textLength="12.5" lengthAdjust="spacingAndGlyphs">-∞</text>
<rect x="1606" y="244" width="4" height="1" fill="#8a8a8a"/>
<text x="1612.5" y="246.7" font-size="11.5" fill="#8f8f8f" textLength="10.5" lengthAdjust="spacingAndGlyphs">-3</text>
<rect x="1606" y="261" width="4" height="1" fill="#8a8a8a"/>
<text x="1612.5" y="263.9" font-size="11.5" fill="#8f8f8f" textLength="6.5" lengthAdjust="spacingAndGlyphs">3</text>
<rect x="1606" y="193" width="2" height="1" fill="#6a6a6a"/>
<rect x="1606" y="246" width="2" height="1" fill="#6a6a6a"/>
<rect x="1606" y="195" width="2" height="1" fill="#6a6a6a"/>
<rect x="1606" y="248" width="2" height="1" fill="#6a6a6a"/>
<rect x="1606" y="198" width="2" height="1" fill="#6a6a6a"/>
<rect x="1606" y="251" width="2" height="1" fill="#6a6a6a"/>
<rect x="1606" y="200" width="2" height="1" fill="#6a6a6a"/>
<rect x="1606" y="254" width="2" height="1" fill="#6a6a6a"/>
<rect x="1606" y="203" width="2" height="1" fill="#6a6a6a"/>
<rect x="1606" y="256" width="2" height="1" fill="#6a6a6a"/>
<rect x="1606" y="205" width="2" height="1" fill="#6a6a6a"/>
<rect x="1606" y="258" width="2" height="1" fill="#6a6a6a"/>
<rect x="1606" y="280" width="4" height="1" fill="#8a8a8a"/>
<text x="1612.5" y="282.4" font-size="11.5" fill="#8f8f8f" textLength="13" lengthAdjust="spacingAndGlyphs">dB</text>
<rect x="1606" y="297" width="4" height="1" fill="#8a8a8a"/>
<text x="1612.5" y="300.5" font-size="11.5" fill="#8f8f8f" textLength="10.5" lengthAdjust="spacingAndGlyphs">-3</text>
<rect x="1606" y="315" width="4" height="1" fill="#8a8a8a"/>
<text x="1612.5" y="318.5" font-size="11.5" fill="#8f8f8f" textLength="12.5" lengthAdjust="spacingAndGlyphs">-∞</text>
<rect x="1606" y="333" width="4" height="1" fill="#8a8a8a"/>
<text x="1612.5" y="336.5" font-size="11.5" fill="#8f8f8f" textLength="10.5" lengthAdjust="spacingAndGlyphs">-3</text>
<rect x="1606" y="350" width="4" height="1" fill="#8a8a8a"/>
<text x="1612.5" y="353.7" font-size="11.5" fill="#8f8f8f" textLength="6.5" lengthAdjust="spacingAndGlyphs">3</text>
<rect x="1606" y="283" width="2" height="1" fill="#6a6a6a"/>
<rect x="1606" y="336" width="2" height="1" fill="#6a6a6a"/>
<rect x="1606" y="285" width="2" height="1" fill="#6a6a6a"/>
<rect x="1606" y="338" width="2" height="1" fill="#6a6a6a"/>
<rect x="1606" y="288" width="2" height="1" fill="#6a6a6a"/>
<rect x="1606" y="341" width="2" height="1" fill="#6a6a6a"/>
<rect x="1606" y="290" width="2" height="1" fill="#6a6a6a"/>
<rect x="1606" y="343" width="2" height="1" fill="#6a6a6a"/>
<rect x="1606" y="293" width="2" height="1" fill="#6a6a6a"/>
<rect x="1606" y="346" width="2" height="1" fill="#6a6a6a"/>
<rect x="1606" y="295" width="2" height="1" fill="#6a6a6a"/>
<rect x="1606" y="348" width="2" height="1" fill="#6a6a6a"/>
<rect x="1654.5" y="217.5" width="20.5" height="16.5" fill="#141414" stroke="#2e2e2e" stroke-width="1" rx="3"/>
<text x="1662.5" y="230.3" font-size="11" fill="#2d8ceb" font-weight="bold">L</text>
<rect x="1654.5" y="307.5" width="20.5" height="16.5" fill="#141414" stroke="#2e2e2e" stroke-width="1" rx="3"/>
<text x="1661" y="320.3" font-size="11" fill="#2d8ceb" font-weight="bold">R</text>
<rect x="1467.3" y="274.3" width="124.6" height="25.4" fill="#2a2a2a" opacity="0.82"/>
<rect x="1467.3" y="274.3" width="8.2" height="25.4" fill="#8a8a8a" opacity="0.3"/>
<rect x="1467.8" y="274.8" width="123.6" height="24.4" fill="none" stroke="#333333" stroke-width="1" opacity="0.8"/>
<rect x="1470" y="282" width="1" height="1" fill="#c8c8c8"/>
<rect x="1472" y="282" width="1" height="1" fill="#c8c8c8"/>
<rect x="1470" y="283.8" width="1" height="1" fill="#c8c8c8"/>
<rect x="1472" y="283.8" width="1" height="1" fill="#c8c8c8"/>
<rect x="1470" y="285.6" width="1" height="1" fill="#c8c8c8"/>
<rect x="1472" y="285.6" width="1" height="1" fill="#c8c8c8"/>
<rect x="1470" y="287.4" width="1" height="1" fill="#c8c8c8"/>
<rect x="1472" y="287.4" width="1" height="1" fill="#c8c8c8"/>
<rect x="1470" y="289.2" width="1" height="1" fill="#c8c8c8"/>
<rect x="1472" y="289.2" width="1" height="1" fill="#c8c8c8"/>
<rect x="1470" y="291" width="1" height="1" fill="#c8c8c8"/>
<rect x="1472" y="291" width="1" height="1" fill="#c8c8c8"/>
<rect x="1478" y="290.7" width="1.1" height="1.3" fill="#9c9c9c"/>
<rect x="1480" y="289.15" width="1.1" height="2.85" fill="#9c9c9c"/>
<rect x="1482" y="287.6" width="1.1" height="4.4" fill="#9c9c9c"/>
<rect x="1484" y="286.05" width="1.1" height="5.95" fill="#9c9c9c"/>
<rect x="1486" y="284.5" width="1.1" height="7.5" fill="#9c9c9c"/>
<rect x="1488" y="282.95" width="1.1" height="9.05" fill="#9c9c9c"/>
<rect x="1490" y="281.4" width="1.1" height="10.6" fill="#9c9c9c"/>
<rect x="1492" y="279.85" width="1.1" height="12.15" fill="#9c9c9c"/>
<circle cx="1507.3" cy="286.5" r="8.2" fill="none" stroke="#8a8a8a" stroke-width="1.8"/>
<line x1="1507.3" y1="279" x2="1507.3" y2="286.5" stroke="#8a8a8a" stroke-width="1.6"/>
<text x="1521" y="290.6" font-size="11.5" fill="#2d8ceb" textLength="13" lengthAdjust="spacingAndGlyphs">+0</text>
<text x="1537" y="290.6" font-size="11.5" fill="#9a9a9a" textLength="13" lengthAdjust="spacingAndGlyphs">dB</text>
<rect x="1573" y="277" width="1" height="20" fill="#6e6e6e"/>
<path d="M1579.3 291.2l4.3-4.3" fill="none" stroke="#a8a8a8" stroke-width="1.3" stroke-linecap="round"/>
<path d="M1582.2 284.6l2.9-2 3 3-2 2.9-1.2-0.3-2.4-2.4z" fill="#a8a8a8"/>
<path d="M1581.4 284.2l5.1 5.1" fill="none" stroke="#a8a8a8" stroke-width="1.5" stroke-linecap="round"/>
<rect x="1355" y="360.5" width="323" height="9.5" fill="#2d2d2d"/>
<rect x="1505" y="364" width="1" height="1" fill="#c8c8c8"/>
<rect x="1505" y="366" width="1" height="1" fill="#c8c8c8"/>
<rect x="1506.85" y="364" width="1" height="1" fill="#c8c8c8"/>
<rect x="1506.85" y="366" width="1" height="1" fill="#c8c8c8"/>
<rect x="1508.7" y="364" width="1" height="1" fill="#c8c8c8"/>
<rect x="1508.7" y="366" width="1" height="1" fill="#c8c8c8"/>
<rect x="1510.55" y="364" width="1" height="1" fill="#c8c8c8"/>
<rect x="1510.55" y="366" width="1" height="1" fill="#c8c8c8"/>
<rect x="1512.4" y="364" width="1" height="1" fill="#c8c8c8"/>
<rect x="1512.4" y="366" width="1" height="1" fill="#c8c8c8"/>
<rect x="1514.25" y="364" width="1" height="1" fill="#c8c8c8"/>
<rect x="1514.25" y="366" width="1" height="1" fill="#c8c8c8"/>
<rect x="1516.1" y="364" width="1" height="1" fill="#c8c8c8"/>
<rect x="1516.1" y="366" width="1" height="1" fill="#c8c8c8"/>
<rect x="1517.95" y="364" width="1" height="1" fill="#c8c8c8"/>
<rect x="1517.95" y="366" width="1" height="1" fill="#c8c8c8"/>
<rect x="1519.8" y="364" width="1" height="1" fill="#c8c8c8"/>
<rect x="1519.8" y="366" width="1" height="1" fill="#c8c8c8"/>
<rect x="1521.65" y="364" width="1" height="1" fill="#c8c8c8"/>
<rect x="1521.65" y="366" width="1" height="1" fill="#c8c8c8"/>
<rect x="1523.5" y="364" width="1" height="1" fill="#c8c8c8"/>
<rect x="1523.5" y="366" width="1" height="1" fill="#c8c8c8"/>
<rect x="1525.35" y="364" width="1" height="1" fill="#c8c8c8"/>
<rect x="1525.35" y="366" width="1" height="1" fill="#c8c8c8"/>
<rect x="1527.2" y="364" width="1" height="1" fill="#c8c8c8"/>
<rect x="1527.2" y="366" width="1" height="1" fill="#c8c8c8"/>
<polygon points="1657,363 1659.5,366.3 1654.5,366.3" fill="#9a9a9a"/>
<path d="M1617.6 173.2v-5.6a4.5 4.5 0 0 1 9 0v5.6" fill="none" stroke="#a8a8a8" stroke-width="3.3"/>
<rect x="1615.5" y="169.6" width="4.2" height="1" fill="#232323"/>
<rect x="1624.5" y="169.6" width="4.2" height="1" fill="#232323"/>
<rect x="1632.8" y="156.3" width="20.8" height="21" fill="#151515" stroke="#303030" stroke-width="1" rx="3.5"/>
<path d="M1639.5 160.5h6.5v3l-2 2h-2.5l-2-2z" fill="#2d8ceb"/>
<rect x="1642.2" y="165" width="1.3" height="9" fill="#2d8ceb"/>
<text x="1358" y="396.8" font-size="16.5" fill="#2d8ceb" textLength="62" lengthAdjust="spacingAndGlyphs">0:00.000</text>
<rect x="1500" y="384" width="9" height="9" fill="#585858"/>
<polygon points="1530,383.5 1539.5,388.5 1530,393.5" fill="#b4b4b4"/>
<rect x="1561" y="384" width="2.8" height="9" fill="#4a4a4a"/>
<rect x="1566" y="384" width="2.8" height="9" fill="#4a4a4a"/>
<rect x="1589" y="384" width="1.8" height="9" fill="#b4b4b4"/>
<polygon points="1600,384 1600,393 1592,388.5" fill="#b4b4b4"/>
<polygon points="1625.5,384.5 1625.5,392.5 1618,388.5" fill="#b4b4b4"/>
<polygon points="1633.5,384.5 1633.5,392.5 1626,388.5" fill="#b4b4b4"/>
<rect x="1690" y="74" width="444" height="334" fill="#232323"/>
<rect x="2134" y="74" width="4" height="334" fill="#161616"/>
<text x="1702" y="92.3" font-size="11.5" fill="#dedede" textLength="94" lengthAdjust="spacingAndGlyphs">Frequency Analysis</text>
<rect x="1804.5" y="84.5" width="9" height="1.2" fill="#b8b8b8"/>
<rect x="1804.5" y="87.9" width="9" height="1.2" fill="#b8b8b8"/>
<rect x="1804.5" y="91.3" width="9" height="1.2" fill="#b8b8b8"/>
<text x="1701" y="124.5" font-size="11.5" fill="#a9a9a9" textLength="28" lengthAdjust="spacingAndGlyphs">Scale:</text>
<rect x="1732.5" y="110.5" width="95.5" height="18.5" fill="#1b1b1b" stroke="#353535" stroke-width="1" rx="3"/>
<text x="1739" y="123.8" font-size="11.5" fill="#cfcfcf" textLength="30.5" lengthAdjust="spacingAndGlyphs">Linear</text>
<path d="M1815.5 117.5l3.5 3.2 l3.5 -3.2" fill="none" stroke="#c0c0c0" stroke-width="1.4"/>
<rect x="1845.5" y="113.5" width="9" height="9" fill="none" stroke="#a8a8a8" stroke-width="1.2"/>
<path d="M1850 126.5h8.5v-9" fill="none" stroke="#8a8a8a" stroke-width="1" stroke-dasharray="1 1"/>
<text x="1876" y="124.5" font-size="11.5" fill="#a9a9a9" textLength="26" lengthAdjust="spacingAndGlyphs">Hold:</text>
<rect x="1906.5" y="110.5" width="22.5" height="18.5" fill="#1b1b1b" stroke="#353535" stroke-width="1" rx="3"/>
<text x="1917.7" y="123.8" font-size="11.5" fill="#a9a9a9" text-anchor="middle">1</text>
<rect x="1906" y="132" width="23" height="4" fill="#ff0000"/>
<rect x="1932.5" y="110.5" width="22.5" height="18.5" fill="#1b1b1b" stroke="#353535" stroke-width="1" rx="3"/>
<text x="1943.7" y="123.8" font-size="11.5" fill="#a9a9a9" text-anchor="middle">2</text>
<rect x="1932" y="132" width="23" height="4" fill="#ff8000"/>
<rect x="1958.5" y="110.5" width="22.5" height="18.5" fill="#1b1b1b" stroke="#353535" stroke-width="1" rx="3"/>
<text x="1969.7" y="123.8" font-size="11.5" fill="#a9a9a9" text-anchor="middle">3</text>
<rect x="1958" y="132" width="23" height="4" fill="#ffff00"/>
<rect x="1984.5" y="110.5" width="22.5" height="18.5" fill="#1b1b1b" stroke="#353535" stroke-width="1" rx="3"/>
<text x="1995.7" y="123.8" font-size="11.5" fill="#a9a9a9" text-anchor="middle">4</text>
<rect x="1984" y="132" width="23" height="4" fill="#80ff00"/>
<rect x="2010.5" y="110.5" width="22.5" height="18.5" fill="#1b1b1b" stroke="#353535" stroke-width="1" rx="3"/>
<text x="2021.7" y="123.8" font-size="11.5" fill="#a9a9a9" text-anchor="middle">5</text>
<rect x="2010" y="132" width="23" height="4" fill="#40c040"/>
<rect x="2036.5" y="110.5" width="22.5" height="18.5" fill="#1b1b1b" stroke="#353535" stroke-width="1" rx="3"/>
<text x="2047.7" y="123.8" font-size="11.5" fill="#a9a9a9" text-anchor="middle">6</text>
<rect x="2036" y="132" width="23" height="4" fill="#00f0f0"/>
<rect x="2062.5" y="110.5" width="22.5" height="18.5" fill="#1b1b1b" stroke="#353535" stroke-width="1" rx="3"/>
<text x="2073.7" y="123.8" font-size="11.5" fill="#a9a9a9" text-anchor="middle">7</text>
<rect x="2062" y="132" width="23" height="4" fill="#2d8ceb"/>
<rect x="2088.5" y="110.5" width="22.5" height="18.5" fill="#1b1b1b" stroke="#353535" stroke-width="1" rx="3"/>
<text x="2099.7" y="123.8" font-size="11.5" fill="#a9a9a9" text-anchor="middle">8</text>
<rect x="2088" y="132" width="23" height="4" fill="#ff00e0"/>
<rect x="1701.5" y="147.5" width="421" height="179.5" fill="#232323" stroke="#333333" stroke-width="1"/>
<rect x="1706" y="152" width="376" height="149.5" fill="#000000"/>
<rect x="1710" y="152" width="1" height="149" fill="#0b3a0b"/>
<rect x="1741" y="152" width="1" height="149" fill="#0b3a0b"/>
<rect x="1771" y="152" width="1" height="149" fill="#0b3a0b"/>
<rect x="1802" y="152" width="1" height="149" fill="#0b3a0b"/>
<rect x="1833" y="152" width="1" height="149" fill="#0b3a0b"/>
<rect x="1864" y="152" width="1" height="149" fill="#0b3a0b"/>
<rect x="1894" y="152" width="1" height="149" fill="#0b3a0b"/>
<rect x="1925" y="152" width="1" height="149" fill="#0b3a0b"/>
<rect x="1956" y="152" width="1" height="149" fill="#0b3a0b"/>
<rect x="1986" y="152" width="1" height="149" fill="#0b3a0b"/>
<rect x="2017" y="152" width="1" height="149" fill="#0b3a0b"/>
<rect x="2048" y="152" width="1" height="149" fill="#0b3a0b"/>
<rect x="2078" y="152" width="1" height="149" fill="#0b3a0b"/>
<rect x="1706" y="164" width="376" height="1" fill="#0b3a0b"/>
<rect x="1706" y="191" width="376" height="1" fill="#0b3a0b"/>
<rect x="1706" y="218" width="376" height="1" fill="#0b3a0b"/>
<rect x="1706" y="245" width="376" height="1" fill="#0b3a0b"/>
<rect x="1706" y="271" width="376" height="1" fill="#0b3a0b"/>
<rect x="1706" y="298" width="376" height="1" fill="#0b3a0b"/>
<text x="1712" y="166" font-size="11" fill="#363636" textLength="38" lengthAdjust="spacingAndGlyphs">Live CTI</text>
<rect x="2082" y="152" width="1" height="150" fill="#d8d8d8"/>
<rect x="2083" y="164" width="8" height="1" fill="#d8d8d8"/>
<rect x="2083" y="178" width="5" height="1" fill="#d8d8d8"/>
<text x="2094.5" y="158.5" font-size="11.5" fill="#a9a9a9" textLength="12.5" lengthAdjust="spacingAndGlyphs">dB</text>
<rect x="2083" y="191" width="8" height="1" fill="#d8d8d8"/>
<rect x="2083" y="205" width="5" height="1" fill="#d8d8d8"/>
<text x="2095" y="194.8" font-size="11.5" fill="#a9a9a9" textLength="16.5" lengthAdjust="spacingAndGlyphs">-20</text>
<rect x="2083" y="218" width="8" height="1" fill="#d8d8d8"/>
<rect x="2083" y="231" width="5" height="1" fill="#d8d8d8"/>
<text x="2095" y="221.5" font-size="11.5" fill="#a9a9a9" textLength="16.5" lengthAdjust="spacingAndGlyphs">-40</text>
<rect x="2083" y="245" width="8" height="1" fill="#d8d8d8"/>
<rect x="2083" y="258" width="5" height="1" fill="#d8d8d8"/>
<text x="2095" y="248.2" font-size="11.5" fill="#a9a9a9" textLength="16.5" lengthAdjust="spacingAndGlyphs">-60</text>
<rect x="2083" y="271" width="8" height="1" fill="#d8d8d8"/>
<rect x="2083" y="285" width="5" height="1" fill="#d8d8d8"/>
<text x="2095" y="274.9" font-size="11.5" fill="#a9a9a9" textLength="16.5" lengthAdjust="spacingAndGlyphs">-80</text>
<rect x="2083" y="298" width="8" height="1" fill="#d8d8d8"/>
<text x="2095" y="301.6" font-size="11.5" fill="#a9a9a9" textLength="22.5" lengthAdjust="spacingAndGlyphs">-100</text>
<rect x="1706" y="301" width="377" height="1" fill="#d8d8d8"/>
<rect x="1710" y="302" width="1" height="7" fill="#d8d8d8"/>
<rect x="1725" y="302" width="1" height="4" fill="#d8d8d8"/>
<rect x="1741" y="302" width="1" height="7" fill="#d8d8d8"/>
<rect x="1756" y="302" width="1" height="4" fill="#d8d8d8"/>
<rect x="1771" y="302" width="1" height="7" fill="#d8d8d8"/>
<rect x="1787" y="302" width="1" height="4" fill="#d8d8d8"/>
<rect x="1802" y="302" width="1" height="7" fill="#d8d8d8"/>
<rect x="1817" y="302" width="1" height="4" fill="#d8d8d8"/>
<rect x="1833" y="302" width="1" height="7" fill="#d8d8d8"/>
<rect x="1848" y="302" width="1" height="4" fill="#d8d8d8"/>
<rect x="1864" y="302" width="1" height="7" fill="#d8d8d8"/>
<rect x="1879" y="302" width="1" height="4" fill="#d8d8d8"/>
<rect x="1894" y="302" width="1" height="7" fill="#d8d8d8"/>
<rect x="1910" y="302" width="1" height="4" fill="#d8d8d8"/>
<rect x="1925" y="302" width="1" height="7" fill="#d8d8d8"/>
<rect x="1940" y="302" width="1" height="4" fill="#d8d8d8"/>
<rect x="1956" y="302" width="1" height="7" fill="#d8d8d8"/>
<rect x="1971" y="302" width="1" height="4" fill="#d8d8d8"/>
<rect x="1986" y="302" width="1" height="7" fill="#d8d8d8"/>
<rect x="2002" y="302" width="1" height="4" fill="#d8d8d8"/>
<rect x="2017" y="302" width="1" height="7" fill="#d8d8d8"/>
<rect x="2032" y="302" width="1" height="4" fill="#d8d8d8"/>
<rect x="2048" y="302" width="1" height="7" fill="#d8d8d8"/>
<rect x="2063" y="302" width="1" height="4" fill="#d8d8d8"/>
<rect x="2078" y="302" width="1" height="7" fill="#d8d8d8"/>
<text x="1703.5" y="322.8" font-size="11.5" fill="#a9a9a9" textLength="12.5" lengthAdjust="spacingAndGlyphs">Hz</text>
<text x="1741.2" y="322.8" font-size="11.5" fill="#a9a9a9" textLength="12" lengthAdjust="spacingAndGlyphs" text-anchor="middle">2k</text>
<text x="1771.9" y="322.8" font-size="11.5" fill="#a9a9a9" textLength="12" lengthAdjust="spacingAndGlyphs" text-anchor="middle">4k</text>
<text x="1802.6" y="322.8" font-size="11.5" fill="#a9a9a9" textLength="12" lengthAdjust="spacingAndGlyphs" text-anchor="middle">6k</text>
<text x="1833.3" y="322.8" font-size="11.5" fill="#a9a9a9" textLength="12" lengthAdjust="spacingAndGlyphs" text-anchor="middle">8k</text>
<text x="1864" y="322.8" font-size="11.5" fill="#a9a9a9" textLength="18" lengthAdjust="spacingAndGlyphs" text-anchor="middle">10k</text>
<text x="1894.7" y="322.8" font-size="11.5" fill="#a9a9a9" textLength="18" lengthAdjust="spacingAndGlyphs" text-anchor="middle">12k</text>
<text x="1925.4" y="322.8" font-size="11.5" fill="#a9a9a9" textLength="18" lengthAdjust="spacingAndGlyphs" text-anchor="middle">14k</text>
<text x="1956.1" y="322.8" font-size="11.5" fill="#a9a9a9" textLength="18" lengthAdjust="spacingAndGlyphs" text-anchor="middle">16k</text>
<text x="1986.8" y="322.8" font-size="11.5" fill="#a9a9a9" textLength="18" lengthAdjust="spacingAndGlyphs" text-anchor="middle">18k</text>
<text x="2017.5" y="322.8" font-size="11.5" fill="#a9a9a9" textLength="18" lengthAdjust="spacingAndGlyphs" text-anchor="middle">20k</text>
<text x="2048.2" y="322.8" font-size="11.5" fill="#a9a9a9" textLength="18" lengthAdjust="spacingAndGlyphs" text-anchor="middle">22k</text>
<text x="1701" y="372.5" font-size="11.5" fill="#a9a9a9" textLength="38" lengthAdjust="spacingAndGlyphs">Display:</text>
<rect x="1743.5" y="358.5" width="72" height="18.5" fill="#1b1b1b" stroke="#353535" stroke-width="1" rx="3"/>
<text x="1749.5" y="372.5" font-size="11.5" fill="#cfcfcf" textLength="25.5" lengthAdjust="spacingAndGlyphs">Lines</text>
<path d="M1803 365.5l3.5 3.2 l3.5 -3.2" fill="none" stroke="#c0c0c0" stroke-width="1.4"/>
<text x="1829" y="372.5" font-size="11.5" fill="#a9a9a9" textLength="65" lengthAdjust="spacingAndGlyphs">Top Channel:</text>
<rect x="1897.5" y="358.5" width="114" height="18.5" fill="#1b1b1b" stroke="#353535" stroke-width="1" rx="3"/>
<text x="1903.5" y="372.5" font-size="11.5" fill="#cfcfcf" textLength="18.5" lengthAdjust="spacingAndGlyphs">Left</text>
<path d="M1999 365.5l3.5 3.2 l3.5 -3.2" fill="none" stroke="#c0c0c0" stroke-width="1.4"/>
<rect x="2025" y="358.7" width="103" height="18.3" fill="none" stroke="#a4a4a4" stroke-width="1.5" rx="9.2"/>
<text x="2041" y="372.5" font-size="11.5" fill="#a9a9a9" textLength="70.5" lengthAdjust="spacingAndGlyphs">Scan Selection</text>
<path d="M1701.5 388l3.3 3.6-3.3 3.6" fill="none" stroke="#b8b8b8" stroke-width="1.2"/>
<text x="1720" y="396.3" font-size="11.5" fill="#cfcfcf" textLength="48" lengthAdjust="spacingAndGlyphs">Advanced</text>
<rect x="2138" y="74" width="50" height="334" fill="#232323"/>
<text x="2150.3" y="92.3" font-size="11.5" fill="#dedede" textLength="65" lengthAdjust="spacingAndGlyphs">Essential Sound</text>
<rect x="2167" y="78" width="21" height="20" fill="#232323"/>
<rect x="2167" y="78" width="1" height="19" fill="#303030"/>
<text x="2149.5" y="124.3" font-size="11.5" fill="#b0b0b0" textLength="57.5" lengthAdjust="spacingAndGlyphs" font-style="italic">No Selection</text>
<text x="2149.5" y="154.3" font-size="11.5" fill="#505050" textLength="33" lengthAdjust="spacingAndGlyphs">Preset:</text>
<rect x="2139" y="102.8" width="47.5" height="1.4" fill="#333333"/>
<rect x="2139" y="132.8" width="47.5" height="1.4" fill="#333333"/>
<rect x="2139" y="168.6" width="47.5" height="1.4" fill="#333333"/>
<rect x="2139" y="199.4" width="47.5" height="1.4" fill="#333333"/>
<rect x="2186" y="74" width="2" height="334" fill="#232323"/>
<rect x="2187" y="74" width="1" height="334" fill="#1c1c1c"/>
<rect x="2139" y="397" width="48" height="9" fill="#1f1f1f"/>
<rect x="2140" y="397.5" width="25" height="8.5" fill="#333333" rx="4.2"/>
<rect x="1347" y="412" width="561" height="95" fill="#232323"/>
<rect x="1908" y="412" width="4" height="95" fill="#161616"/>
<rect x="1146" y="507" width="1042" height="1.5" fill="#161616"/>
<text x="1359.5" y="430" font-size="11.5" fill="#dedede" textLength="30.5" lengthAdjust="spacingAndGlyphs">Levels</text>
<rect x="1399" y="422" width="9" height="1.2" fill="#b8b8b8"/>
<rect x="1399" y="425.4" width="9" height="1.2" fill="#b8b8b8"/>
<rect x="1399" y="428.8" width="9" height="1.2" fill="#b8b8b8"/>
<rect x="1352.5" y="445" width="548.5" height="41" fill="#000000"/>
<rect x="1354" y="446" width="538" height="39" fill="#1c1c1c"/>
<rect x="1354" y="446" width="1.5" height="19" fill="#f0e800"/>
<rect x="1354" y="466" width="1.5" height="19" fill="#f0e800"/>
<rect x="1892.5" y="446" width="7.5" height="19" fill="#f04a4a"/>
<rect x="1892.5" y="466" width="7.5" height="19" fill="#f04a4a"/>
<rect x="1354" y="486.5" width="1" height="4" fill="#a8a8a8"/>
<rect x="1363" y="486.5" width="1" height="2" fill="#8a8a8a"/>
<rect x="1372" y="486.5" width="1" height="2" fill="#8a8a8a"/>
<text x="1353" y="500.5" font-size="10.5" fill="#8f8f8f" textLength="11" lengthAdjust="spacingAndGlyphs">dB</text>
<rect x="1381" y="486.5" width="1" height="4" fill="#a8a8a8"/>
<rect x="1390" y="486.5" width="1" height="2" fill="#8a8a8a"/>
<rect x="1399" y="486.5" width="1" height="2" fill="#8a8a8a"/>
<text x="1381.74" y="500.5" font-size="10.5" fill="#8f8f8f" textLength="13.5" lengthAdjust="spacingAndGlyphs" text-anchor="middle">-57</text>
<rect x="1408" y="486.5" width="1" height="4" fill="#a8a8a8"/>
<rect x="1417" y="486.5" width="1" height="2" fill="#8a8a8a"/>
<rect x="1426" y="486.5" width="1" height="2" fill="#8a8a8a"/>
<text x="1408.48" y="500.5" font-size="10.5" fill="#8f8f8f" textLength="13.5" lengthAdjust="spacingAndGlyphs" text-anchor="middle">-54</text>
<rect x="1435" y="486.5" width="1" height="4" fill="#a8a8a8"/>
<rect x="1444" y="486.5" width="1" height="2" fill="#8a8a8a"/>
<rect x="1453" y="486.5" width="1" height="2" fill="#8a8a8a"/>
<text x="1435.22" y="500.5" font-size="10.5" fill="#8f8f8f" textLength="13.5" lengthAdjust="spacingAndGlyphs" text-anchor="middle">-51</text>
<rect x="1461" y="486.5" width="1" height="4" fill="#a8a8a8"/>
<rect x="1470" y="486.5" width="1" height="2" fill="#8a8a8a"/>
<rect x="1479" y="486.5" width="1" height="2" fill="#8a8a8a"/>
<text x="1461.96" y="500.5" font-size="10.5" fill="#8f8f8f" textLength="13.5" lengthAdjust="spacingAndGlyphs" text-anchor="middle">-48</text>
<rect x="1488" y="486.5" width="1" height="4" fill="#a8a8a8"/>
<rect x="1497" y="486.5" width="1" height="2" fill="#8a8a8a"/>
<rect x="1506" y="486.5" width="1" height="2" fill="#8a8a8a"/>
<text x="1488.7" y="500.5" font-size="10.5" fill="#8f8f8f" textLength="13.5" lengthAdjust="spacingAndGlyphs" text-anchor="middle">-45</text>
<rect x="1515" y="486.5" width="1" height="4" fill="#a8a8a8"/>
<rect x="1524" y="486.5" width="1" height="2" fill="#8a8a8a"/>
<rect x="1533" y="486.5" width="1" height="2" fill="#8a8a8a"/>
<text x="1515.44" y="500.5" font-size="10.5" fill="#8f8f8f" textLength="13.5" lengthAdjust="spacingAndGlyphs" text-anchor="middle">-42</text>
<rect x="1542" y="486.5" width="1" height="4" fill="#a8a8a8"/>
<rect x="1551" y="486.5" width="1" height="2" fill="#8a8a8a"/>
<rect x="1559" y="486.5" width="1" height="2" fill="#8a8a8a"/>
<text x="1542.18" y="500.5" font-size="10.5" fill="#8f8f8f" textLength="13.5" lengthAdjust="spacingAndGlyphs" text-anchor="middle">-39</text>
<rect x="1568" y="486.5" width="1" height="4" fill="#a8a8a8"/>
<rect x="1577" y="486.5" width="1" height="2" fill="#8a8a8a"/>
<rect x="1586" y="486.5" width="1" height="2" fill="#8a8a8a"/>
<text x="1568.92" y="500.5" font-size="10.5" fill="#8f8f8f" textLength="13.5" lengthAdjust="spacingAndGlyphs" text-anchor="middle">-36</text>
<rect x="1595" y="486.5" width="1" height="4" fill="#a8a8a8"/>
<rect x="1604" y="486.5" width="1" height="2" fill="#8a8a8a"/>
<rect x="1613" y="486.5" width="1" height="2" fill="#8a8a8a"/>
<text x="1595.66" y="500.5" font-size="10.5" fill="#8f8f8f" textLength="13.5" lengthAdjust="spacingAndGlyphs" text-anchor="middle">-33</text>
<rect x="1622" y="486.5" width="1" height="4" fill="#a8a8a8"/>
<rect x="1631" y="486.5" width="1" height="2" fill="#8a8a8a"/>
<rect x="1640" y="486.5" width="1" height="2" fill="#8a8a8a"/>
<text x="1622.4" y="500.5" font-size="10.5" fill="#8f8f8f" textLength="13.5" lengthAdjust="spacingAndGlyphs" text-anchor="middle">-30</text>
<rect x="1649" y="486.5" width="1" height="4" fill="#a8a8a8"/>
<rect x="1658" y="486.5" width="1" height="2" fill="#8a8a8a"/>
<rect x="1666" y="486.5" width="1" height="2" fill="#8a8a8a"/>
<text x="1649.14" y="500.5" font-size="10.5" fill="#8f8f8f" textLength="13.5" lengthAdjust="spacingAndGlyphs" text-anchor="middle">-27</text>
<rect x="1675" y="486.5" width="1" height="4" fill="#a8a8a8"/>
<rect x="1684" y="486.5" width="1" height="2" fill="#8a8a8a"/>
<rect x="1693" y="486.5" width="1" height="2" fill="#8a8a8a"/>
<text x="1675.88" y="500.5" font-size="10.5" fill="#8f8f8f" textLength="13.5" lengthAdjust="spacingAndGlyphs" text-anchor="middle">-24</text>
<rect x="1702" y="486.5" width="1" height="4" fill="#a8a8a8"/>
<rect x="1711" y="486.5" width="1" height="2" fill="#8a8a8a"/>
<rect x="1720" y="486.5" width="1" height="2" fill="#8a8a8a"/>
<text x="1702.62" y="500.5" font-size="10.5" fill="#8f8f8f" textLength="13.5" lengthAdjust="spacingAndGlyphs" text-anchor="middle">-21</text>
<rect x="1729" y="486.5" width="1" height="4" fill="#a8a8a8"/>
<rect x="1738" y="486.5" width="1" height="2" fill="#8a8a8a"/>
<rect x="1747" y="486.5" width="1" height="2" fill="#8a8a8a"/>
<text x="1729.36" y="500.5" font-size="10.5" fill="#8f8f8f" textLength="13.5" lengthAdjust="spacingAndGlyphs" text-anchor="middle">-18</text>
<rect x="1756" y="486.5" width="1" height="4" fill="#a8a8a8"/>
<rect x="1764" y="486.5" width="1" height="2" fill="#8a8a8a"/>
<rect x="1773" y="486.5" width="1" height="2" fill="#8a8a8a"/>
<text x="1756.1" y="500.5" font-size="10.5" fill="#8f8f8f" textLength="13.5" lengthAdjust="spacingAndGlyphs" text-anchor="middle">-15</text>
<rect x="1782" y="486.5" width="1" height="4" fill="#a8a8a8"/>
<rect x="1791" y="486.5" width="1" height="2" fill="#8a8a8a"/>
<rect x="1800" y="486.5" width="1" height="2" fill="#8a8a8a"/>
<text x="1782.84" y="500.5" font-size="10.5" fill="#8f8f8f" textLength="13.5" lengthAdjust="spacingAndGlyphs" text-anchor="middle">-12</text>
<rect x="1809" y="486.5" width="1" height="4" fill="#a8a8a8"/>
<rect x="1818" y="486.5" width="1" height="2" fill="#8a8a8a"/>
<rect x="1827" y="486.5" width="1" height="2" fill="#8a8a8a"/>
<text x="1809.58" y="500.5" font-size="10.5" fill="#8f8f8f" textLength="9" lengthAdjust="spacingAndGlyphs" text-anchor="middle">-9</text>
<rect x="1836" y="486.5" width="1" height="4" fill="#a8a8a8"/>
<rect x="1845" y="486.5" width="1" height="2" fill="#8a8a8a"/>
<rect x="1854" y="486.5" width="1" height="2" fill="#8a8a8a"/>
<text x="1836.32" y="500.5" font-size="10.5" fill="#8f8f8f" textLength="9" lengthAdjust="spacingAndGlyphs" text-anchor="middle">-6</text>
<rect x="1863" y="486.5" width="1" height="4" fill="#a8a8a8"/>
<rect x="1871" y="486.5" width="1" height="2" fill="#8a8a8a"/>
<rect x="1880" y="486.5" width="1" height="2" fill="#8a8a8a"/>
<text x="1863.06" y="500.5" font-size="10.5" fill="#8f8f8f" textLength="9" lengthAdjust="spacingAndGlyphs" text-anchor="middle">-3</text>
<rect x="1889" y="486.5" width="1" height="4" fill="#a8a8a8"/>
<text x="1889.8" y="500.5" font-size="10.5" fill="#8f8f8f" textLength="5.5" lengthAdjust="spacingAndGlyphs" text-anchor="middle">0</text>
<rect x="1912" y="412" width="276" height="95" fill="#232323"/>
<text x="1922.5" y="430" font-size="11.5" fill="#dedede" textLength="73.5" lengthAdjust="spacingAndGlyphs">Selection/View</text>
<rect x="2005" y="422" width="9" height="1.2" fill="#b8b8b8"/>
<rect x="2005" y="425.4" width="9" height="1.2" fill="#b8b8b8"/>
<rect x="2005" y="428.8" width="9" height="1.2" fill="#b8b8b8"/>
<text x="1972" y="455" font-size="11.5" fill="#a9a9a9" textLength="23" lengthAdjust="spacingAndGlyphs">Start</text>
<text x="2044.5" y="455" font-size="11.5" fill="#a9a9a9" textLength="18" lengthAdjust="spacingAndGlyphs">End</text>
<text x="2115.5" y="455" font-size="11.5" fill="#a9a9a9" textLength="42.5" lengthAdjust="spacingAndGlyphs">Duration</text>
<text x="1922" y="474" font-size="11.5" fill="#a9a9a9" textLength="44.5" lengthAdjust="spacingAndGlyphs">Selection</text>
<text x="1922" y="495" font-size="11.5" fill="#a9a9a9" textLength="24" lengthAdjust="spacingAndGlyphs">View</text>
<text x="1974" y="474" font-size="11.5" fill="#2d8ceb" textLength="41.5" lengthAdjust="spacingAndGlyphs">0:00.000</text>
<text x="1974" y="495" font-size="11.5" fill="#2d8ceb" textLength="41.5" lengthAdjust="spacingAndGlyphs">0:00.000</text>
<text x="2046" y="474" font-size="11.5" fill="#2d8ceb" textLength="41.5" lengthAdjust="spacingAndGlyphs">1:05.301</text>
<text x="2046" y="495" font-size="11.5" fill="#2d8ceb" textLength="41.5" lengthAdjust="spacingAndGlyphs">0:11.597</text>
<text x="2117" y="474" font-size="11.5" fill="#2d8ceb" textLength="41.5" lengthAdjust="spacingAndGlyphs">1:05.301</text>
<text x="2117" y="495" font-size="11.5" fill="#2d8ceb" textLength="41.5" lengthAdjust="spacingAndGlyphs">0:11.597</text>
<rect x="1146" y="508.5" width="1042" height="19.5" fill="#232323"/>
<text x="1154.5" y="521.5" font-size="11.5" fill="#a9a9a9" textLength="111.5" lengthAdjust="spacingAndGlyphs">Copied in 0,18 seconds</text>
<rect x="1599.5" y="512" width="1" height="12" fill="#303030"/>
<rect x="1649.5" y="512" width="1" height="12" fill="#303030"/>
<rect x="1750.5" y="512" width="1" height="12" fill="#303030"/>
<rect x="1932" y="512" width="1" height="12" fill="#303030"/>
<rect x="1993.5" y="512" width="1" height="12" fill="#303030"/>
<rect x="2058" y="512" width="1" height="12" fill="#303030"/>
<rect x="2139.5" y="512" width="1" height="12" fill="#303030"/>
<text x="1759" y="523.5" font-size="11.5" fill="#a9a9a9" textLength="165" lengthAdjust="spacingAndGlyphs">48000 Hz ● 32-bit (float) ● Stereo</text>
<text x="1940" y="523" font-size="11.5" fill="#a9a9a9" textLength="46" lengthAdjust="spacingAndGlyphs">23,91 MB</text>
<text x="2010" y="523" font-size="11.5" fill="#a9a9a9" textLength="41" lengthAdjust="spacingAndGlyphs">1:05.301</text>
<text x="2067" y="523" font-size="11.5" fill="#a9a9a9" textLength="65" lengthAdjust="spacingAndGlyphs">51,94 GB free</text></svg></div>
</body></html>
